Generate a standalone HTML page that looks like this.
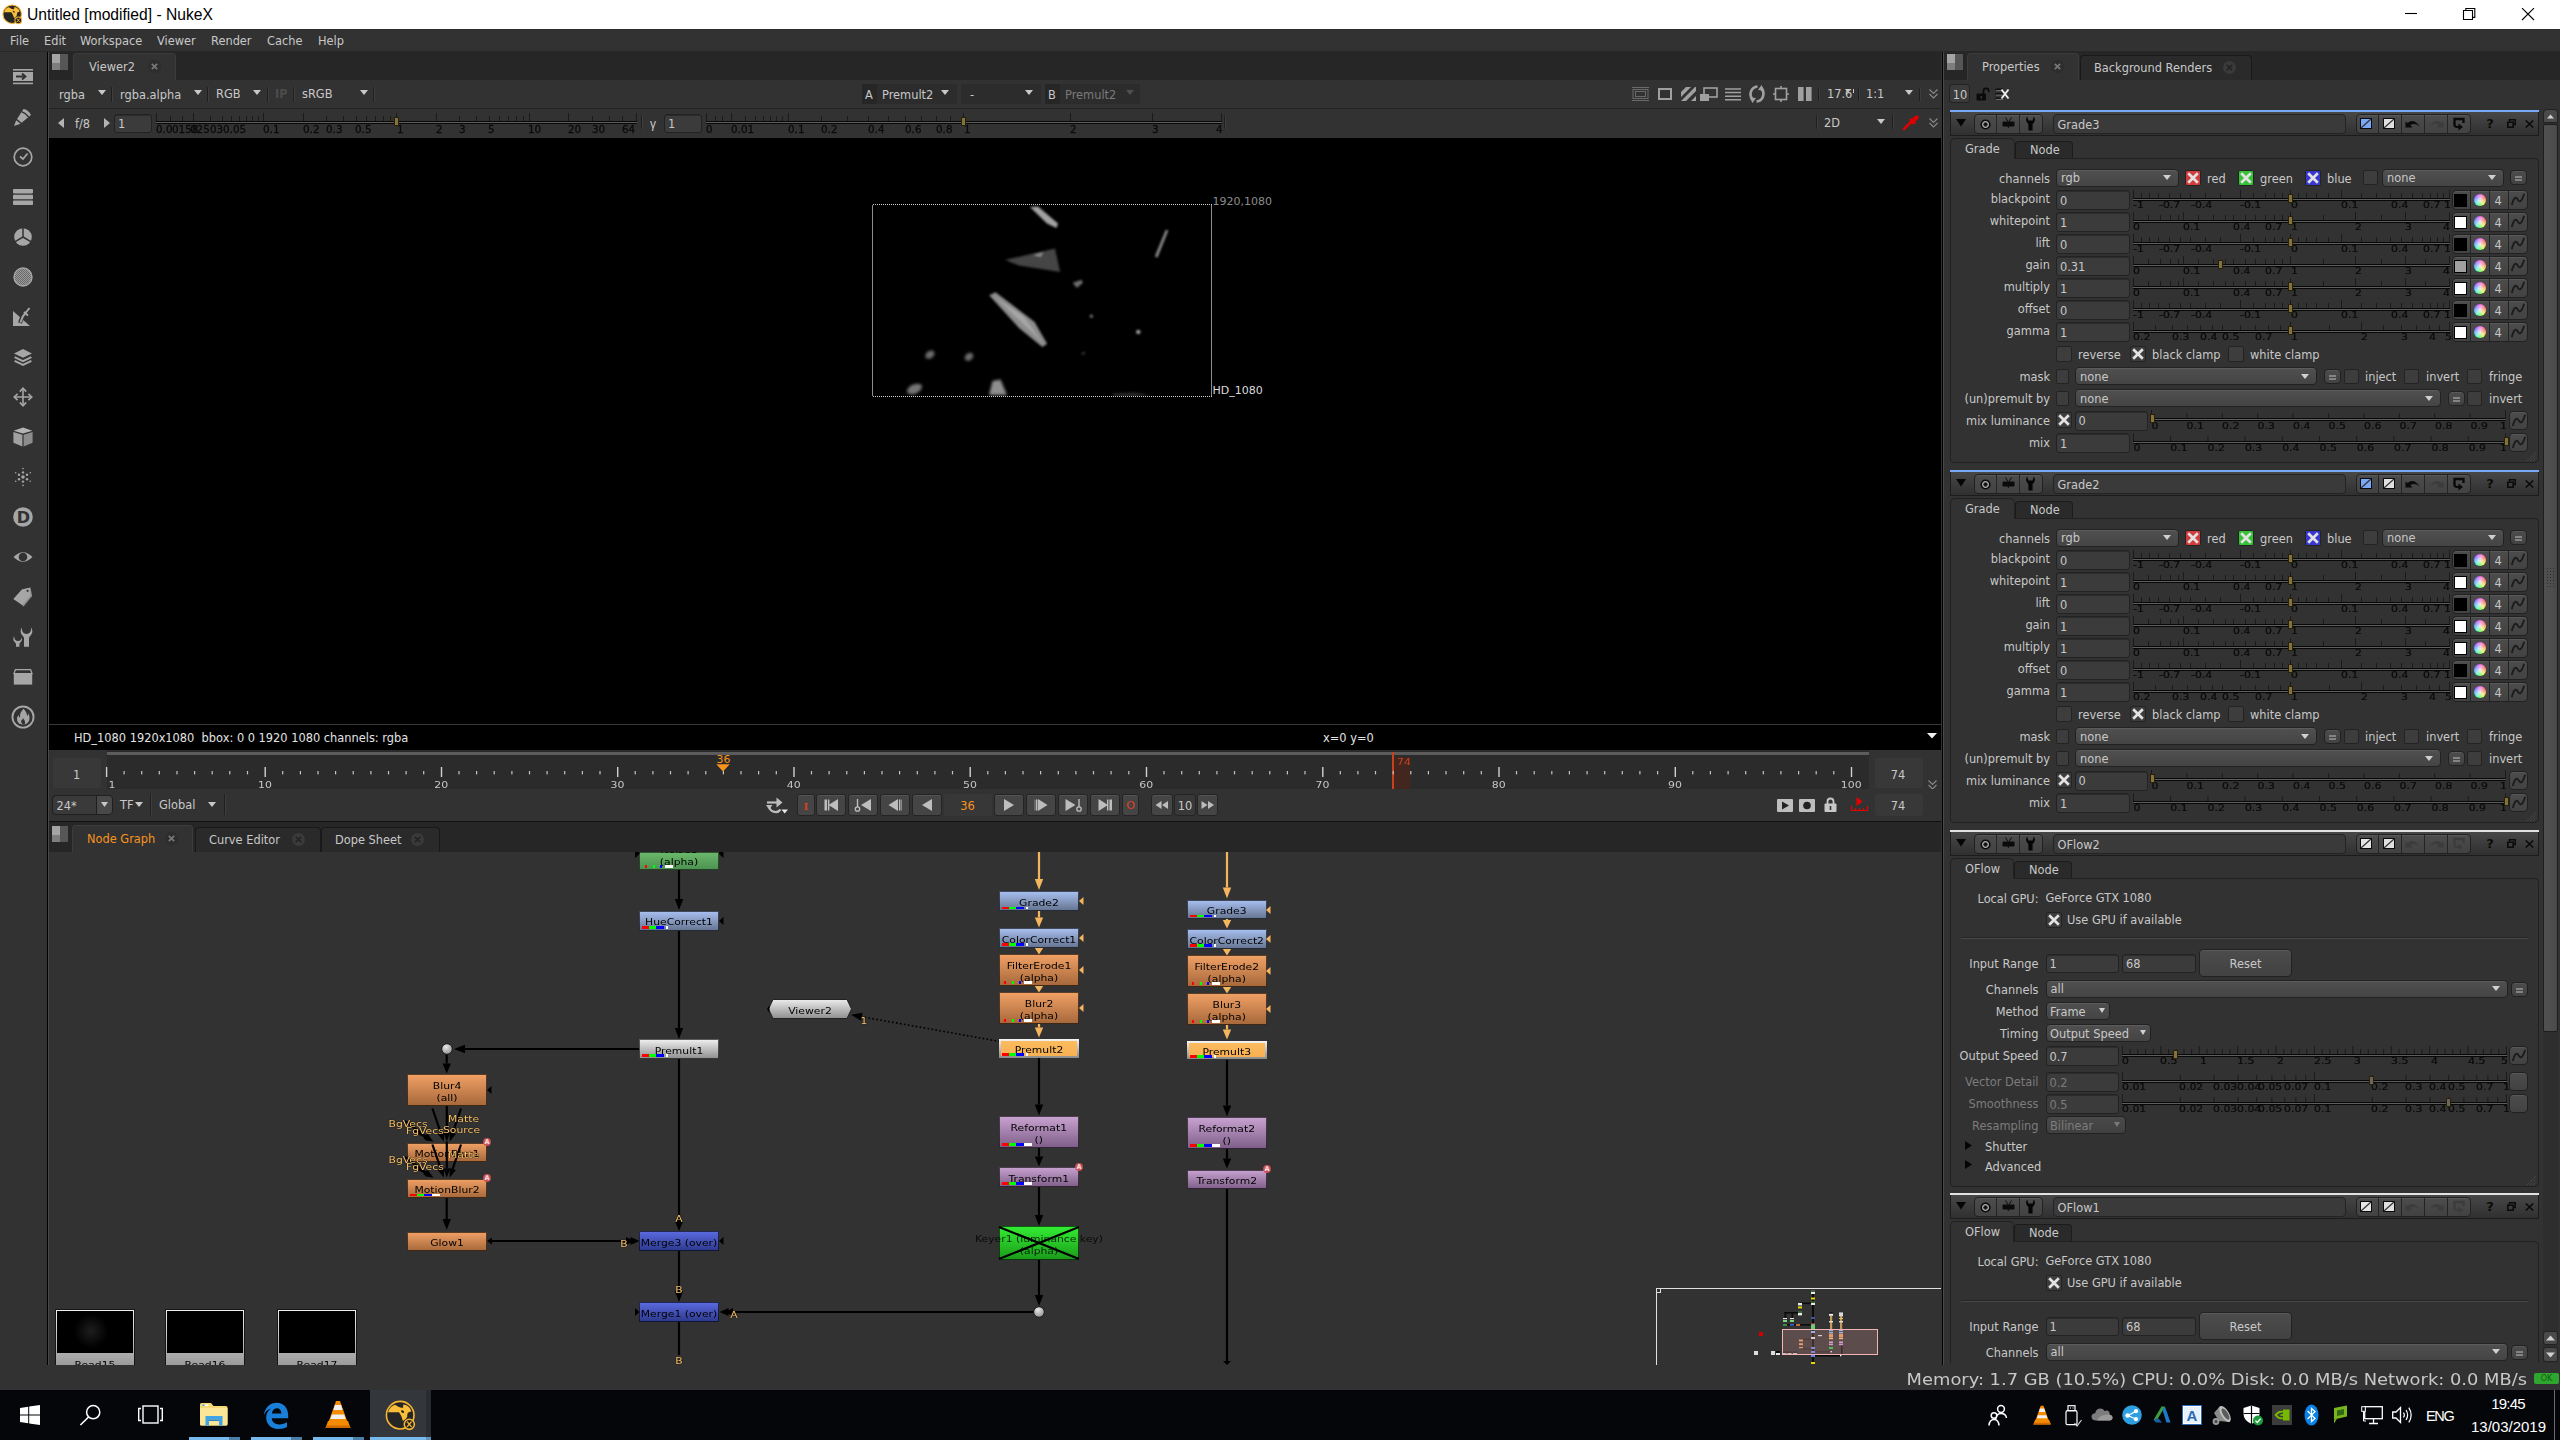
<!DOCTYPE html>
<html><head><meta charset="utf-8"><title>Untitled [modified] - NukeX</title>
<style>
html,body{margin:0;padding:0;background:#323232;}
body{width:2560px;height:1440px;position:relative;overflow:hidden;font-family:"DejaVu Sans","Liberation Sans",sans-serif;font-size:11.4px;color:#c8c8c8;}
div,svg,span.a{position:absolute;box-sizing:border-box;}
svg{overflow:visible;}
svg text{font-family:"DejaVu Sans","Liberation Sans",sans-serif;}
</style></head><body>
<div style="left:0px;top:0px;width:2560px;height:29px;background:#ffffff;"></div>
<svg style="left:2px;top:4px;" width="20.4" height="20.4" viewBox="0 0 30 30"><circle cx="15" cy="15" r="13.6" fill="#262626" stroke="#f7b733" stroke-width="1.6"/>
<path d="M3 12 C4 8.5 6.4 5.8 9.6 4.7 C11 4.8 12.5 6.8 16 7.7 L17.8 7.7 L18.2 4.4 C22 4.8 25 7.4 26 11.2 L22.5 12.5 L21.9 15 C22.5 17.5 20 19 17.6 20.8 C17 17 15 13.5 13.75 12 Z" fill="#fbbe38"/>
<ellipse cx="17.4" cy="11.4" rx="1.7" ry="1.1" fill="#262626" transform="rotate(40 17.4 11.4)"/>
<circle cx="24" cy="24" r="5" fill="#262626" stroke="#f7b733" stroke-width="1.5"/>
<path d="M21.8 21.4 L26.2 26.6 M26.2 21.4 L21.8 26.6" stroke="#f7b733" stroke-width="1.3"/></svg>
<div style="top:4.5px;line-height:20px;height:20px;white-space:pre;color:#000;font-size:15.63px;left:27px;font-family:'Liberation Sans',sans-serif;">Untitled [modified] - NukeX</div>
<svg style="left:2400px;top:0px;" width="160" height="29" viewBox="0 0 160 29"><path d="M5 13.5 H17" stroke="#000" stroke-width="1.1" fill="none"/>
<path d="M63.5 10.5 H72.5 V19.5 H63.5 Z" stroke="#000" stroke-width="1.1" fill="none"/><path d="M65.8 10.5 V8.5 H74.8 V17.4 H72.5" stroke="#000" stroke-width="1.1" fill="none"/>
<path d="M122 8.2 L134 20 M134 8.2 L122 20" stroke="#000" stroke-width="1.1" fill="none"/></svg>
<div style="left:0px;top:29px;width:2560px;height:23px;background:#323232;"></div>
<div style="left:0px;top:29px;width:2560px;height:1px;background:#2c2c2c;"></div>
<div style="left:0px;top:51px;width:2560px;height:1px;background:#272727;"></div>
<div style="top:33px;line-height:16px;height:16px;white-space:pre;left:10px;">File</div>
<div style="top:33px;line-height:16px;height:16px;white-space:pre;left:44px;">Edit</div>
<div style="top:33px;line-height:16px;height:16px;white-space:pre;left:80px;">Workspace</div>
<div style="top:33px;line-height:16px;height:16px;white-space:pre;left:157px;">Viewer</div>
<div style="top:33px;line-height:16px;height:16px;white-space:pre;left:211px;">Render</div>
<div style="top:33px;line-height:16px;height:16px;white-space:pre;left:267px;">Cache</div>
<div style="top:33px;line-height:16px;height:16px;white-space:pre;left:318px;">Help</div>
<div style="left:0px;top:52px;width:47px;height:1314px;background:#323232;"></div>
<div style="left:47px;top:52px;width:1px;height:1313px;background:#000;"></div>
<div style="left:48px;top:52px;width:1px;height:1313px;background:#484848;"></div>
<svg style="left:13.0px;top:67.0px;" width="20" height="20" viewBox="0 0 20 20"><rect x="0" y="2" width="20" height="1.6" fill="#a6a6a6"/><rect x="0" y="5" width="20" height="9" fill="#a6a6a6"/><rect x="0" y="15.6" width="20" height="1.6" fill="#a6a6a6"/><path d="M3 9.5 H12 M9 6.5 L12.5 9.5 L9 12.5" stroke="#323232" stroke-width="1.8" fill="none"/></svg>
<svg style="left:13.0px;top:107.0px;" width="20" height="20" viewBox="0 0 20 20"><path d="M1 19 L3.2 13.2 L7.6 16.8 Z" fill="#a6a6a6"/><path d="M4 12 L10.5 2 Q15 2.5 18 8 L8.6 15.8 Z" fill="#a6a6a6"/><path d="M8.6 4.6 Q12.8 6 15.6 10" stroke="#323232" stroke-width="1.4" fill="none"/></svg>
<svg style="left:13.0px;top:147.0px;" width="20" height="20" viewBox="0 0 20 20"><circle cx="10" cy="10" r="8.8" fill="none" stroke="#a6a6a6" stroke-width="1.7"/><path d="M7 9.5 L10 12 L14.5 6.5" stroke="#a6a6a6" stroke-width="1.7" fill="none"/></svg>
<svg style="left:13.0px;top:187.0px;" width="20" height="20" viewBox="0 0 20 20"><rect x="0" y="2" width="20" height="4.4" rx="0.8" fill="#a6a6a6"/><rect x="0" y="7.8" width="20" height="4.4" rx="0.8" fill="#a6a6a6"/><rect x="0" y="13.6" width="20" height="4.4" rx="0.8" fill="#a6a6a6"/></svg>
<svg style="left:13.0px;top:227.0px;" width="20" height="20" viewBox="0 0 20 20"><circle cx="10" cy="10" r="8.8" fill="#a6a6a6"/><path d="M10 1 V10 L2.2 14.6 M10 10 L17.8 14.6" stroke="#323232" stroke-width="1.5" fill="none"/></svg>
<svg style="left:13.0px;top:267.0px;" width="20" height="20" viewBox="0 0 20 20"><defs><pattern id="hp" width="2" height="2" patternUnits="userSpaceOnUse"><rect width="2" height="2" fill="#9a9a9a"/><rect width="1" height="1" fill="#6a6a6a"/><rect x="1" y="1" width="1" height="1" fill="#6a6a6a"/></pattern></defs><circle cx="10" cy="10" r="9" fill="url(#hp)" stroke="#a6a6a6" stroke-width="1.4"/></svg>
<svg style="left:13.0px;top:307.0px;" width="20" height="20" viewBox="0 0 20 20"><path d="M0 4 V19 H17 Z" fill="#a6a6a6"/><path d="M7 16 L9.5 9 L13 5" stroke="#323232" stroke-width="4" fill="none"/><path d="M7.5 15.5 L9.8 9.6 L12 6.6 M10.5 8.5 L16.5 1 M11 5 L15 8.5" stroke="#a6a6a6" stroke-width="2" fill="none"/></svg>
<svg style="left:13.0px;top:347.0px;" width="20" height="20" viewBox="0 0 20 20"><path d="M10 2 L19 6.4 L10 10.8 L1 6.4 Z" fill="#a6a6a6"/><path d="M1.6 10.2 L10 14.2 L18.4 10.2 M1.6 13.8 L10 17.8 L18.4 13.8" stroke="#a6a6a6" stroke-width="2" fill="none"/></svg>
<svg style="left:13.0px;top:387.0px;" width="20" height="20" viewBox="0 0 20 20"><path d="M10 1.5 V18.5 M1.5 10 H18.5" stroke="#a6a6a6" stroke-width="1.6"/><path d="M6.8 4.6 L10 1.2 L13.2 4.6 M6.8 15.4 L10 18.8 L13.2 15.4 M4.6 6.8 L1.2 10 L4.6 13.2 M15.4 6.8 L18.8 10 L15.4 13.2" stroke="#a6a6a6" stroke-width="1.6" fill="none"/></svg>
<svg style="left:13.0px;top:427.0px;" width="20" height="20" viewBox="0 0 20 20"><path d="M10 0.6 L19.4 3.8 L10 6.6 L0.6 3.8 Z" fill="#b4b4b4"/><path d="M0.4 5 L9.4 7.8 V19.6 L0.4 15.8 Z" fill="#a0a0a0"/><path d="M19.6 5 L10.6 7.8 V19.6 L19.6 15.8 Z" fill="#8c8c8c"/></svg>
<svg style="left:13.0px;top:467.0px;" width="20" height="20" viewBox="0 0 20 20"><g fill="#a6a6a6"><circle cx="10" cy="10" r="1.8"/><circle cx="10" cy="5.4" r="1.2"/><circle cx="10" cy="14.6" r="1.2"/><circle cx="6" cy="7.7" r="1.2"/><circle cx="14" cy="7.7" r="1.2"/><circle cx="6" cy="12.3" r="1.2"/><circle cx="14" cy="12.3" r="1.2"/><circle cx="10" cy="1.6" r="0.8"/><circle cx="10" cy="18.4" r="0.8"/><circle cx="2.7" cy="5.8" r="0.8"/><circle cx="17.3" cy="5.8" r="0.8"/><circle cx="2.7" cy="14.2" r="0.8"/><circle cx="17.3" cy="14.2" r="0.8"/></g></svg>
<svg style="left:13.0px;top:507.0px;" width="20" height="20" viewBox="0 0 20 20"><circle cx="10" cy="10" r="9.8" fill="#a6a6a6"/><text x="10.3" y="15.8" font-size="16" font-weight="bold" text-anchor="middle" fill="#323232">D</text></svg>
<svg style="left:13.0px;top:547.0px;" width="20" height="20" viewBox="0 0 20 20"><path d="M0.5 10 Q10 0.5 19.5 10 Q10 19.5 0.5 10 Z" fill="#a6a6a6"/><circle cx="10" cy="10" r="4.3" fill="#323232"/></svg>
<svg style="left:13.0px;top:587.0px;" width="20" height="20" viewBox="0 0 20 20"><path d="M0.5 12 L9 2.5 L17.5 0.6 L19.2 9 L10.6 19.4 L7.2 16.4 Z" fill="#8e8e8e"/><path d="M0.5 12 L9 2.5 L16.8 0.8 L17.6 8.6 L9.4 18 Z" fill="#a6a6a6"/><circle cx="14.6" cy="3.8" r="1.1" fill="#323232"/></svg>
<svg style="left:13.0px;top:627.0px;" width="20" height="20" viewBox="0 0 20 20"><path d="M9 0.3 Q6.2 4.5 9 8 Q10.6 9.6 11 11 V19.8 H16 V11 Q16.4 9.6 18 8 Q20.8 4.5 18 0.3 Q18.6 4.5 16 6.2 Q13.5 7.6 11 6.2 Q8.4 4.5 9 0.3 Z" fill="#a6a6a6"/><path d="M1.2 9.2 Q-0.8 12.5 1.6 15 Q2.8 16 3 17 V19.8 H6.4 V17 Q6.6 16 7.8 15 Q9.6 13 9 10.5 Q8.2 13 6.4 13.8 Q4.6 14.4 3 13.6 Q1 12.4 1.2 9.2 Z" fill="#a6a6a6"/></svg>
<svg style="left:13.0px;top:667.0px;" width="20" height="20" viewBox="0 0 20 20"><path d="M2.4 2.6 H17.6 L19 6.6 H1 Z" fill="none" stroke="#a6a6a6" stroke-width="1.3"/><rect x="0.8" y="7" width="18.4" height="10.6" fill="#a6a6a6"/></svg>
<svg style="left:12.0px;top:706.0px;" width="22" height="22" viewBox="0 0 20 20"><circle cx="10" cy="10" r="9.6" fill="none" stroke="#a6a6a6" stroke-width="1.7"/><path d="M10.6 2.6 Q13.8 6.4 13.6 9 Q15 8.2 14.8 6.6 Q17 10.6 15.2 14 Q13.6 16.8 10 16.8 Q6.2 16.8 4.8 13.6 Q3.8 10.8 6 8 Q6 10 7.2 10.8 Q6.8 6 10.6 2.6 Z" fill="#a6a6a6"/><path d="M10 16.8 Q7.6 15.4 8.6 12.6 Q9.6 13.6 9.8 11 Q12.6 13.6 11.6 16.8 Z" fill="#323232"/></svg>
<div style="left:49px;top:52px;width:1892px;height:28px;background:#262626;"></div>
<div style="left:52px;top:54px;width:8px;height:9px;background:#a4a4a4;"></div>
<div style="left:52px;top:63px;width:8px;height:7px;background:#7e7e7e;"></div>
<div style="left:60px;top:54px;width:8px;height:16px;background:#565656;"></div>
<div style="left:73px;top:53px;width:103px;height:28px;background:#323232;border:1px solid #3c3c3c;border-bottom:none;border-radius:4px 4px 0 0;"></div>
<div style="top:59px;line-height:16px;height:16px;white-space:pre;left:89px;">Viewer2</div>
<div style="left:147.5px;top:59.5px;width:13px;height:13px;background:#2d2d2d;border-radius:50%;"></div>
<svg style="left:150.5px;top:62.5px;" width="7" height="7" viewBox="0 0 7 7"><path d="M0.8 0.8 L6.2 6.2 M6.2 0.8 L0.8 6.2" stroke="#787878" stroke-width="1.7"/></svg>
<div style="left:49px;top:80px;width:1892px;height:28px;background:#323232;"></div>
<div style="top:87px;line-height:16px;height:16px;white-space:pre;left:59px;">rgba</div>
<svg style="left:98px;top:89.5px;" width="8" height="5" viewBox="0 0 8 5"><path d="M0 0 H8 L4.0 5 Z" fill="#c8c8c8"/></svg>
<div style="left:111px;top:87px;width:1px;height:15px;background:#1f1f1f;"></div>
<div style="left:112px;top:87px;width:1px;height:15px;background:#3e3e3e;"></div>
<div style="top:87px;line-height:16px;height:16px;white-space:pre;left:120px;">rgba.alpha</div>
<svg style="left:194px;top:89.5px;" width="8" height="5" viewBox="0 0 8 5"><path d="M0 0 H8 L4.0 5 Z" fill="#c8c8c8"/></svg>
<div style="left:207px;top:87px;width:1px;height:15px;background:#1f1f1f;"></div>
<div style="left:208px;top:87px;width:1px;height:15px;background:#3e3e3e;"></div>
<div style="top:86px;line-height:16px;height:16px;white-space:pre;left:216px;">RGB</div>
<svg style="left:253px;top:89.5px;" width="8" height="5" viewBox="0 0 8 5"><path d="M0 0 H8 L4.0 5 Z" fill="#c8c8c8"/></svg>
<div style="left:267px;top:87px;width:1px;height:15px;background:#1f1f1f;"></div>
<div style="left:268px;top:87px;width:1px;height:15px;background:#3e3e3e;"></div>
<div style="top:86px;line-height:16px;height:16px;white-space:pre;color:#4c4c4c;left:275px;font-weight:bold;">IP</div>
<div style="left:293px;top:87px;width:1px;height:15px;background:#1f1f1f;"></div>
<div style="left:294px;top:87px;width:1px;height:15px;background:#3e3e3e;"></div>
<div style="top:86px;line-height:16px;height:16px;white-space:pre;left:302px;">sRGB</div>
<svg style="left:360px;top:89.5px;" width="8" height="5" viewBox="0 0 8 5"><path d="M0 0 H8 L4.0 5 Z" fill="#c8c8c8"/></svg>
<div style="left:373px;top:87px;width:1px;height:15px;background:#1f1f1f;"></div>
<div style="left:374px;top:87px;width:1px;height:15px;background:#3e3e3e;"></div>
<div style="left:862px;top:84px;width:95px;height:20px;background:#2c2c2c;"></div>
<div style="left:862px;top:84px;width:15px;height:20px;background:#262626;"></div>
<div style="top:87px;line-height:16px;height:16px;white-space:pre;left:865px;">A</div>
<div style="top:87px;line-height:16px;height:16px;white-space:pre;left:882px;">Premult2</div>
<svg style="left:941px;top:89.5px;" width="8" height="5" viewBox="0 0 8 5"><path d="M0 0 H8 L4.0 5 Z" fill="#c8c8c8"/></svg>
<div style="left:961px;top:84px;width:80px;height:20px;background:#2c2c2c;"></div>
<div style="top:87px;line-height:16px;height:16px;white-space:pre;left:970px;">-</div>
<svg style="left:1025px;top:89.5px;" width="8" height="5" viewBox="0 0 8 5"><path d="M0 0 H8 L4.0 5 Z" fill="#c8c8c8"/></svg>
<div style="left:1045px;top:84px;width:95px;height:20px;background:#2c2c2c;"></div>
<div style="left:1045px;top:84px;width:15px;height:20px;background:#262626;"></div>
<div style="top:87px;line-height:16px;height:16px;white-space:pre;left:1048px;">B</div>
<div style="top:87px;line-height:16px;height:16px;white-space:pre;color:#7a7a7a;left:1065px;">Premult2</div>
<svg style="left:1126px;top:89.5px;" width="8" height="5" viewBox="0 0 8 5"><path d="M0 0 H8 L4.0 5 Z" fill="#505050"/></svg>
<svg style="left:1632px;top:87px;" width="17" height="14" viewBox="0 0 17 14"><path d="M0 0.5 H17 M0 13.5 H17" stroke="#6a6a6a" stroke-width="1"/><rect x="1" y="2.5" width="15" height="9" fill="none" stroke="#6a6a6a" stroke-width="1"/><rect x="3.5" y="4.5" width="10" height="5" fill="none" stroke="#6a6a6a" stroke-width="1"/></svg>
<svg style="left:1658px;top:88px;" width="14" height="12" viewBox="0 0 14 12"><rect x="1" y="1" width="12" height="10" fill="none" stroke="#a0a0a0" stroke-width="2"/></svg>
<svg style="left:1681px;top:87px;" width="15" height="14" viewBox="0 0 15 14"><path d="M0 5 L5 0 H10 L0 10 Z M0 14 L14 0 H15 V4 L5 14 Z M10 14 L15 9 V14 Z" fill="#a0a0a0"/></svg>
<svg style="left:1700px;top:87px;" width="18" height="14" viewBox="0 0 18 14"><rect x="4" y="1" width="13" height="9" fill="none" stroke="#a0a0a0" stroke-width="1.6"/><rect x="0" y="7" width="9" height="7" fill="#a0a0a0"/></svg>
<svg style="left:1725px;top:88px;" width="16" height="13" viewBox="0 0 16 13"><path d="M0 1 H16 M0 4.6 H16 M0 8.2 H16 M0 11.8 H16" stroke="#a0a0a0" stroke-width="1.5"/></svg>
<svg style="left:1748px;top:85px;" width="18" height="18" viewBox="0 0 18 18"><path d="M9.5 1.5 A7.5 7.5 0 0 0 5 14.5" stroke="#a0a0a0" stroke-width="2.6" fill="none"/><path d="M8.5 16.5 A7.5 7.5 0 0 0 13 3.5" stroke="#a0a0a0" stroke-width="2.6" fill="none"/><path d="M1.5 12.5 L8 13 L4.5 18 Z M16.5 5.5 L10 5 L13.5 0 Z" fill="#a0a0a0"/></svg>
<svg style="left:1773px;top:86px;" width="16" height="16" viewBox="0 0 16 16"><rect x="2.5" y="2.5" width="11" height="11" fill="none" stroke="#a0a0a0" stroke-width="1.6"/><path d="M8 0 V3 M8 13 V16 M0 8 H3 M13 8 H16" stroke="#a0a0a0" stroke-width="1.6"/></svg>
<svg style="left:1798px;top:87px;" width="14" height="14" viewBox="0 0 14 14"><rect x="0" y="0" width="5.6" height="14" fill="#a0a0a0"/><rect x="8" y="0" width="5.6" height="14" fill="#a0a0a0"/></svg>
<div style="left:1818px;top:88px;width:1px;height:13px;background:#1f1f1f;"></div>
<div style="left:1819px;top:88px;width:1px;height:13px;background:#3e3e3e;"></div>
<div style="top:86px;line-height:16px;height:16px;white-space:pre;left:1827px;">17.6</div>
<svg style="left:1843px;top:89px;" width="12" height="8" viewBox="0 0 12 8"><path d="M2 0 H8 L5 3.6 Z" fill="#c8c8c8"/><path d="M10.5 0 V4" stroke="#c8c8c8" stroke-width="1"/></svg>
<div style="left:1858px;top:88px;width:1px;height:13px;background:#1f1f1f;"></div>
<div style="left:1859px;top:88px;width:1px;height:13px;background:#3e3e3e;"></div>
<div style="top:86px;line-height:16px;height:16px;white-space:pre;left:1866px;">1:1</div>
<svg style="left:1905px;top:89.5px;" width="8" height="5" viewBox="0 0 8 5"><path d="M0 0 H8 L4.0 5 Z" fill="#c8c8c8"/></svg>
<div style="left:1919px;top:88px;width:1px;height:13px;background:#1f1f1f;"></div>
<div style="left:1920px;top:88px;width:1px;height:13px;background:#3e3e3e;"></div>
<svg style="left:1929px;top:89px;" width="9" height="10" viewBox="0 0 9 10"><path d="M0.5 0.5 L4.5 4.5 L8.5 0.5 M0.5 5 L4.5 9 L8.5 5" stroke="#8a8a8a" stroke-width="1.1" fill="none"/></svg>
<div style="left:49px;top:108px;width:1892px;height:1px;background:#222222;"></div>
<div style="left:49px;top:109px;width:1892px;height:29px;background:#323232;"></div>
<svg style="left:58px;top:118px;" width="6" height="10" viewBox="0 0 6 10"><path d="M6 0 V10 L0 5 Z" fill="#b4b4b4"/></svg>
<div style="top:116px;line-height:16px;height:16px;white-space:pre;left:75px;">f/8</div>
<svg style="left:104px;top:118px;" width="6" height="10" viewBox="0 0 6 10"><path d="M0 0 V10 L6 5 Z" fill="#b4b4b4"/></svg>
<div style="left:114px;top:114px;width:38px;height:19px;background:#3b3b3b;border:1px solid #222;border-radius:3px;box-shadow:inset 0 1px 0 #2c2c2c;"></div>
<div style="top:116px;line-height:16px;height:16px;white-space:pre;left:118px;">1</div>
<svg style="left:156px;top:111px;" width="481" height="13" viewBox="0 0 481 13"><path d="M0.5 2 V10" stroke="#1b1b1b" stroke-width="1"/><path d="M14.5 5 V10" stroke="#1b1b1b" stroke-width="1"/><path d="M26.5 5 V10" stroke="#1b1b1b" stroke-width="1"/><path d="M37.5 2 V10" stroke="#1b1b1b" stroke-width="1"/><path d="M54.5 5 V10" stroke="#1b1b1b" stroke-width="1"/><path d="M66.5 5 V10" stroke="#1b1b1b" stroke-width="1"/><path d="M75.5 5 V10" stroke="#1b1b1b" stroke-width="1"/><path d="M83.5 5 V10" stroke="#1b1b1b" stroke-width="1"/><path d="M90.5 5 V10" stroke="#1b1b1b" stroke-width="1"/><path d="M96.5 5 V10" stroke="#1b1b1b" stroke-width="1"/><path d="M102.5 5 V10" stroke="#1b1b1b" stroke-width="1"/><path d="M107.5 2 V10" stroke="#1b1b1b" stroke-width="1"/><path d="M147.5 2 V10" stroke="#1b1b1b" stroke-width="1"/><path d="M170.5 5 V10" stroke="#1b1b1b" stroke-width="1"/><path d="M187.5 5 V10" stroke="#1b1b1b" stroke-width="1"/><path d="M200.5 5 V10" stroke="#1b1b1b" stroke-width="1"/><path d="M210.5 5 V10" stroke="#1b1b1b" stroke-width="1"/><path d="M219.5 5 V10" stroke="#1b1b1b" stroke-width="1"/><path d="M227.5 5 V10" stroke="#1b1b1b" stroke-width="1"/><path d="M234.5 5 V10" stroke="#1b1b1b" stroke-width="1"/><path d="M240.5 2 V10" stroke="#1b1b1b" stroke-width="1"/><path d="M280.5 2 V10" stroke="#1b1b1b" stroke-width="1"/><path d="M303.5 5 V10" stroke="#1b1b1b" stroke-width="1"/><path d="M320.5 5 V10" stroke="#1b1b1b" stroke-width="1"/><path d="M333.5 5 V10" stroke="#1b1b1b" stroke-width="1"/><path d="M343.5 5 V10" stroke="#1b1b1b" stroke-width="1"/><path d="M352.5 5 V10" stroke="#1b1b1b" stroke-width="1"/><path d="M360.5 5 V10" stroke="#1b1b1b" stroke-width="1"/><path d="M367.5 5 V10" stroke="#1b1b1b" stroke-width="1"/><path d="M373.5 2 V10" stroke="#1b1b1b" stroke-width="1"/><path d="M412.5 2 V10" stroke="#1b1b1b" stroke-width="1"/><path d="M436.5 5 V10" stroke="#1b1b1b" stroke-width="1"/><path d="M453.5 5 V10" stroke="#1b1b1b" stroke-width="1"/><path d="M466.5 5 V10" stroke="#1b1b1b" stroke-width="1"/><path d="M480.5 2 V10" stroke="#1b1b1b" stroke-width="1"/><rect x="0" y="10" width="481" height="1" fill="#080808"/><rect x="0" y="11" width="481" height="1" fill="#5e5e5e"/><rect x="0" y="12" width="481" height="1" fill="#080808"/></svg>
<div style="top:122.5px;line-height:12px;height:12px;white-space:pre;color:#0b0b0b;font-size:10.4px;left:156px;transform:scaleY(0.93);-webkit-text-stroke:0.3px #0b0b0b;">0.0</div>
<div style="top:122.5px;line-height:12px;height:12px;white-space:pre;color:#0b0b0b;font-size:10.4px;left:172px;transform:scaleY(0.93);-webkit-text-stroke:0.3px #0b0b0b;">0158</div>
<div style="top:122.5px;line-height:12px;height:12px;white-space:pre;color:#0b0b0b;font-size:10.4px;left:190px;transform:scaleY(0.93);-webkit-text-stroke:0.3px #0b0b0b;">025</div>
<div style="top:122.5px;line-height:12px;height:12px;white-space:pre;color:#0b0b0b;font-size:10.4px;left:210px;transform:scaleY(0.93);-webkit-text-stroke:0.3px #0b0b0b;">03</div>
<div style="top:122.5px;line-height:12px;height:12px;white-space:pre;color:#0b0b0b;font-size:10.4px;left:223px;transform:scaleY(0.93);-webkit-text-stroke:0.3px #0b0b0b;">0.05</div>
<div style="top:122.5px;line-height:12px;height:12px;white-space:pre;color:#0b0b0b;font-size:10.4px;left:263px;transform:scaleY(0.93);-webkit-text-stroke:0.3px #0b0b0b;">0.1</div>
<div style="top:122.5px;line-height:12px;height:12px;white-space:pre;color:#0b0b0b;font-size:10.4px;left:303px;transform:scaleY(0.93);-webkit-text-stroke:0.3px #0b0b0b;">0.2</div>
<div style="top:122.5px;line-height:12px;height:12px;white-space:pre;color:#0b0b0b;font-size:10.4px;left:326px;transform:scaleY(0.93);-webkit-text-stroke:0.3px #0b0b0b;">0.3</div>
<div style="top:122.5px;line-height:12px;height:12px;white-space:pre;color:#0b0b0b;font-size:10.4px;left:355px;transform:scaleY(0.93);-webkit-text-stroke:0.3px #0b0b0b;">0.5</div>
<div style="top:122.5px;line-height:12px;height:12px;white-space:pre;color:#0b0b0b;font-size:10.4px;left:397px;transform:scaleY(0.93);-webkit-text-stroke:0.3px #0b0b0b;">1</div>
<div style="top:122.5px;line-height:12px;height:12px;white-space:pre;color:#0b0b0b;font-size:10.4px;left:436px;transform:scaleY(0.93);-webkit-text-stroke:0.3px #0b0b0b;">2</div>
<div style="top:122.5px;line-height:12px;height:12px;white-space:pre;color:#0b0b0b;font-size:10.4px;left:459px;transform:scaleY(0.93);-webkit-text-stroke:0.3px #0b0b0b;">3</div>
<div style="top:122.5px;line-height:12px;height:12px;white-space:pre;color:#0b0b0b;font-size:10.4px;left:488px;transform:scaleY(0.93);-webkit-text-stroke:0.3px #0b0b0b;">5</div>
<div style="top:122.5px;line-height:12px;height:12px;white-space:pre;color:#0b0b0b;font-size:10.4px;left:528px;transform:scaleY(0.93);-webkit-text-stroke:0.3px #0b0b0b;">10</div>
<div style="top:122.5px;line-height:12px;height:12px;white-space:pre;color:#0b0b0b;font-size:10.4px;left:568px;transform:scaleY(0.93);-webkit-text-stroke:0.3px #0b0b0b;">20</div>
<div style="top:122.5px;line-height:12px;height:12px;white-space:pre;color:#0b0b0b;font-size:10.4px;left:592px;transform:scaleY(0.93);-webkit-text-stroke:0.3px #0b0b0b;">30</div>
<div style="top:122.5px;line-height:12px;height:12px;white-space:pre;color:#0b0b0b;font-size:10.4px;left:622px;transform:scaleY(0.93);-webkit-text-stroke:0.3px #0b0b0b;">64</div>
<div style="left:394px;top:116.5px;width:5px;height:9px;background:#85723a;border:1px solid #26200c;"></div>
<div style="left:641px;top:115px;width:1px;height:14px;background:#1f1f1f;"></div>
<div style="left:642px;top:115px;width:1px;height:14px;background:#3e3e3e;"></div>
<div style="top:116px;line-height:16px;height:16px;white-space:pre;left:650px;font-family:'Liberation Sans',sans-serif;font-size:12px;">γ</div>
<div style="left:664px;top:114px;width:38px;height:19px;background:#3b3b3b;border:1px solid #222;border-radius:3px;box-shadow:inset 0 1px 0 #2c2c2c;"></div>
<div style="top:116px;line-height:16px;height:16px;white-space:pre;left:668px;">1</div>
<svg style="left:706px;top:111px;" width="516" height="13" viewBox="0 0 516 13"><path d="M0.5 2 V10" stroke="#1b1b1b" stroke-width="1"/><path d="M9.5 5 V10" stroke="#1b1b1b" stroke-width="1"/><path d="M16.5 5 V10" stroke="#1b1b1b" stroke-width="1"/><path d="M25.5 2 V10" stroke="#1b1b1b" stroke-width="1"/><path d="M39.5 5 V10" stroke="#1b1b1b" stroke-width="1"/><path d="M49.5 5 V10" stroke="#1b1b1b" stroke-width="1"/><path d="M57.5 5 V10" stroke="#1b1b1b" stroke-width="1"/><path d="M64.5 5 V10" stroke="#1b1b1b" stroke-width="1"/><path d="M70.5 5 V10" stroke="#1b1b1b" stroke-width="1"/><path d="M76.5 5 V10" stroke="#1b1b1b" stroke-width="1"/><path d="M82.5 2 V10" stroke="#1b1b1b" stroke-width="1"/><path d="M115.5 5 V10" stroke="#1b1b1b" stroke-width="1"/><path d="M141.5 5 V10" stroke="#1b1b1b" stroke-width="1"/><path d="M162.5 5 V10" stroke="#1b1b1b" stroke-width="1"/><path d="M182.5 5 V10" stroke="#1b1b1b" stroke-width="1"/><path d="M199.5 5 V10" stroke="#1b1b1b" stroke-width="1"/><path d="M215.5 5 V10" stroke="#1b1b1b" stroke-width="1"/><path d="M230.5 5 V10" stroke="#1b1b1b" stroke-width="1"/><path d="M244.5 5 V10" stroke="#1b1b1b" stroke-width="1"/><path d="M257.5 2 V10" stroke="#1b1b1b" stroke-width="1"/><path d="M364.5 2 V10" stroke="#1b1b1b" stroke-width="1"/><path d="M446.5 2 V10" stroke="#1b1b1b" stroke-width="1"/><path d="M515.5 2 V10" stroke="#1b1b1b" stroke-width="1"/><rect x="0" y="10" width="516" height="1" fill="#080808"/><rect x="0" y="11" width="516" height="1" fill="#5e5e5e"/><rect x="0" y="12" width="516" height="1" fill="#080808"/></svg>
<div style="top:122.5px;line-height:12px;height:12px;white-space:pre;color:#0b0b0b;font-size:10.4px;left:706px;transform:scaleY(0.93);-webkit-text-stroke:0.3px #0b0b0b;">0</div>
<div style="top:122.5px;line-height:12px;height:12px;white-space:pre;color:#0b0b0b;font-size:10.4px;left:731px;transform:scaleY(0.93);-webkit-text-stroke:0.3px #0b0b0b;">0.01</div>
<div style="top:122.5px;line-height:12px;height:12px;white-space:pre;color:#0b0b0b;font-size:10.4px;left:788px;transform:scaleY(0.93);-webkit-text-stroke:0.3px #0b0b0b;">0.1</div>
<div style="top:122.5px;line-height:12px;height:12px;white-space:pre;color:#0b0b0b;font-size:10.4px;left:821px;transform:scaleY(0.93);-webkit-text-stroke:0.3px #0b0b0b;">0.2</div>
<div style="top:122.5px;line-height:12px;height:12px;white-space:pre;color:#0b0b0b;font-size:10.4px;left:868px;transform:scaleY(0.93);-webkit-text-stroke:0.3px #0b0b0b;">0.4</div>
<div style="top:122.5px;line-height:12px;height:12px;white-space:pre;color:#0b0b0b;font-size:10.4px;left:905px;transform:scaleY(0.93);-webkit-text-stroke:0.3px #0b0b0b;">0.6</div>
<div style="top:122.5px;line-height:12px;height:12px;white-space:pre;color:#0b0b0b;font-size:10.4px;left:936px;transform:scaleY(0.93);-webkit-text-stroke:0.3px #0b0b0b;">0.8</div>
<div style="top:122.5px;line-height:12px;height:12px;white-space:pre;color:#0b0b0b;font-size:10.4px;left:964px;transform:scaleY(0.93);-webkit-text-stroke:0.3px #0b0b0b;">1</div>
<div style="top:122.5px;line-height:12px;height:12px;white-space:pre;color:#0b0b0b;font-size:10.4px;left:1070px;transform:scaleY(0.93);-webkit-text-stroke:0.3px #0b0b0b;">2</div>
<div style="top:122.5px;line-height:12px;height:12px;white-space:pre;color:#0b0b0b;font-size:10.4px;left:1152px;transform:scaleY(0.93);-webkit-text-stroke:0.3px #0b0b0b;">3</div>
<div style="top:122.5px;line-height:12px;height:12px;white-space:pre;color:#0b0b0b;font-size:10.4px;left:1216px;transform:scaleY(0.93);-webkit-text-stroke:0.3px #0b0b0b;">4</div>
<div style="left:961px;top:116.5px;width:5px;height:9px;background:#85723a;border:1px solid #26200c;"></div>
<div style="left:1224px;top:115px;width:1px;height:14px;background:#1f1f1f;"></div>
<div style="left:1225px;top:115px;width:1px;height:14px;background:#3e3e3e;"></div>
<div style="left:1816px;top:115px;width:1px;height:14px;background:#1f1f1f;"></div>
<div style="left:1817px;top:115px;width:1px;height:14px;background:#3e3e3e;"></div>
<div style="top:115px;line-height:16px;height:16px;white-space:pre;left:1824px;">2D</div>
<svg style="left:1877px;top:118.5px;" width="8" height="5" viewBox="0 0 8 5"><path d="M0 0 H8 L4.0 5 Z" fill="#c8c8c8"/></svg>
<div style="left:1892px;top:115px;width:1px;height:14px;background:#1f1f1f;"></div>
<div style="left:1893px;top:115px;width:1px;height:14px;background:#3e3e3e;"></div>
<svg style="left:1903px;top:115px;" width="16" height="15" viewBox="0 0 16 15"><path d="M1 14 L8.5 6.5" stroke="#e00000" stroke-width="2.6" stroke-linecap="round"/><path d="M7 4 L12 9" stroke="#e00000" stroke-width="2.4"/><path d="M9.5 6.5 L13.5 2.5" stroke="#e00000" stroke-width="4.4" stroke-linecap="round"/></svg>
<svg style="left:1929px;top:118px;" width="9" height="10" viewBox="0 0 9 10"><path d="M0.5 0.5 L4.5 4.5 L8.5 0.5 M0.5 5 L4.5 9 L8.5 5" stroke="#8a8a8a" stroke-width="1.1" fill="none"/></svg>
<div style="left:49px;top:138px;width:1892px;height:612px;background:#000;"></div>
<svg style="left:873px;top:205px;overflow:hidden;" width="339" height="191" viewBox="0 0 339 191"><defs><filter id="bl" x="-20%" y="-20%" width="140%" height="140%"><feGaussianBlur stdDeviation="0.9"/></filter>
<filter id="bl2" x="-30%" y="-30%" width="160%" height="160%"><feGaussianBlur stdDeviation="1.4"/></filter></defs>
<g filter="url(#bl)">
<polygon points="157,2 165,1.5 185,18.5 183.5,23 174,18.5" fill="#a2a2a2"/>
<polygon points="292.8,24.7 295.3,25.6 284.4,52.8 281.9,51.3" fill="#8e8e8e"/>
<polygon points="132,55 182,43.5 187.2,67 146,60.6" fill="#444"/>
<polygon points="160,50 170,47 168,52" fill="#8a8a8a"/>
<polygon points="199.7,77.8 208.5,74.7 210,77.8 203.8,83.1" fill="#6c6c6c"/>
<polygon points="116.2,90.3 122.5,87.2 161.6,116.9 174.1,138.8 169.4,141.9 146,123.1" fill="#8c8c8c"/>
<polygon points="122,92 150,111 170,138 160,128" fill="#c8c8c8" opacity="0.45"/>
<circle cx="218.4" cy="111.2" r="1.6" fill="#7a7a7a"/>
<circle cx="265.3" cy="126.9" r="2.2" fill="#a0a0a0"/>
<polygon points="208,149 212,146.5 211,149.5" fill="#555"/>
</g>
<g filter="url(#bl2)">
<ellipse cx="56.9" cy="149.7" rx="5" ry="3.6" fill="#6c6c6c" transform="rotate(-35 56.9 149.7)"/>
<ellipse cx="96" cy="151.9" rx="4.5" ry="3.4" fill="#6c6c6c" transform="rotate(-35 96 151.9)"/>
<ellipse cx="41.5" cy="184" rx="8" ry="4.6" fill="#747474" transform="rotate(-25 41.5 184)"/>
<polygon points="116,190 119.5,176 127.5,174.5 134,190" fill="#8e8e8e"/>
<polygon points="240,189 262,188.6 280,190.5 240,190.5" fill="#505050"/>
</g></svg>
<div style="left:873px;top:204px;width:339px;height:1px;border-top:1px dotted #d0d0d0;"></div>
<div style="left:873px;top:396px;width:339px;height:1px;border-top:1px dotted #d0d0d0;"></div>
<div style="left:872px;top:205px;width:1px;height:191px;background:#8c8c8c;"></div>
<div style="left:1211px;top:205px;width:1px;height:191px;background:#8c8c8c;"></div>
<div style="top:194px;line-height:16px;height:16px;white-space:pre;color:#8c8c8c;font-size:11px;left:1212.5px;">1920,1080</div>
<div style="top:383px;line-height:16px;height:16px;white-space:pre;color:#dcdcdc;font-size:11px;left:1212.5px;">HD_1080</div>
<div style="left:49px;top:724px;width:1892px;height:1px;background:#383838;"></div>
<div style="top:730px;line-height:16px;height:16px;white-space:pre;color:#e4e4e4;left:74px;">HD_1080 1920x1080  bbox: 0 0 1920 1080 channels: rgba</div>
<div style="top:730px;line-height:16px;height:16px;white-space:pre;color:#e4e4e4;left:1323px;">x=0 y=0</div>
<svg style="left:1927px;top:733px;" width="10" height="6" viewBox="0 0 10 6"><path d="M0 0 H10 L5 5.5 Z" fill="#f0f0f0"/></svg>
<div style="left:49px;top:750px;width:1892px;height:40px;background:#323232;"></div>
<div style="left:107px;top:750px;width:1762px;height:39px;background:#2b2b2b;"></div>
<div style="left:107px;top:752px;width:1762px;height:3px;background:#5c5c5c;"></div>
<div style="left:53px;top:758px;width:48px;height:30px;background:#383838;border-radius:3px;"></div>
<div style="top:766.5px;line-height:16px;height:16px;white-space:pre;left:56.5px;width:40px;text-align:center;">1</div>
<div style="left:1875px;top:758px;width:48px;height:30px;background:#383838;border-radius:3px;"></div>
<div style="top:766.5px;line-height:16px;height:16px;white-space:pre;left:1878px;width:40px;text-align:center;">74</div>
<svg style="left:1928px;top:780px;" width="9" height="10" viewBox="0 0 9 10"><path d="M0.5 0.5 L4.5 4.5 L8.5 0.5 M0.5 5 L4.5 9 L8.5 5" stroke="#8a8a8a" stroke-width="1.1" fill="none"/></svg>
<div style="left:1393px;top:757px;width:17px;height:32px;background:#43271f;"></div>
<div style="left:1392px;top:752px;width:2px;height:37px;background:#c8401c;"></div>
<div style="top:755.5px;line-height:12px;height:12px;white-space:pre;color:#c8401c;font-size:10.9px;left:1397px;transform:scaleY(0.86);">74</div>
<svg style="left:107px;top:767px;" width="1762" height="10" viewBox="0 0 1762 10"><rect x="-1.1" y="0" width="1.4" height="10" fill="#d0d0d0"/><rect x="16.5" y="4" width="1.2" height="3.4" fill="#c4c4c4"/><rect x="34.1" y="4" width="1.2" height="3.4" fill="#c4c4c4"/><rect x="51.7" y="4" width="1.2" height="3.4" fill="#c4c4c4"/><rect x="69.4" y="4" width="1.2" height="3.4" fill="#c4c4c4"/><rect x="87.0" y="4" width="1.2" height="3.4" fill="#c4c4c4"/><rect x="104.6" y="4" width="1.2" height="3.4" fill="#c4c4c4"/><rect x="122.2" y="4" width="1.2" height="3.4" fill="#c4c4c4"/><rect x="139.9" y="4" width="1.2" height="3.4" fill="#c4c4c4"/><rect x="157.5" y="0" width="1.4" height="10" fill="#d0d0d0"/><rect x="175.1" y="4" width="1.2" height="3.4" fill="#c4c4c4"/><rect x="192.8" y="4" width="1.2" height="3.4" fill="#c4c4c4"/><rect x="210.4" y="4" width="1.2" height="3.4" fill="#c4c4c4"/><rect x="228.0" y="4" width="1.2" height="3.4" fill="#c4c4c4"/><rect x="245.6" y="4" width="1.2" height="3.4" fill="#c4c4c4"/><rect x="263.3" y="4" width="1.2" height="3.4" fill="#c4c4c4"/><rect x="280.9" y="4" width="1.2" height="3.4" fill="#c4c4c4"/><rect x="298.5" y="4" width="1.2" height="3.4" fill="#c4c4c4"/><rect x="316.1" y="4" width="1.2" height="3.4" fill="#c4c4c4"/><rect x="333.8" y="0" width="1.4" height="10" fill="#d0d0d0"/><rect x="351.4" y="4" width="1.2" height="3.4" fill="#c4c4c4"/><rect x="369.0" y="4" width="1.2" height="3.4" fill="#c4c4c4"/><rect x="386.6" y="4" width="1.2" height="3.4" fill="#c4c4c4"/><rect x="404.3" y="4" width="1.2" height="3.4" fill="#c4c4c4"/><rect x="421.9" y="4" width="1.2" height="3.4" fill="#c4c4c4"/><rect x="439.5" y="4" width="1.2" height="3.4" fill="#c4c4c4"/><rect x="457.1" y="4" width="1.2" height="3.4" fill="#c4c4c4"/><rect x="474.8" y="4" width="1.2" height="3.4" fill="#c4c4c4"/><rect x="492.4" y="4" width="1.2" height="3.4" fill="#c4c4c4"/><rect x="510.0" y="0" width="1.4" height="10" fill="#d0d0d0"/><rect x="527.6" y="4" width="1.2" height="3.4" fill="#c4c4c4"/><rect x="545.3" y="4" width="1.2" height="3.4" fill="#c4c4c4"/><rect x="562.9" y="4" width="1.2" height="3.4" fill="#c4c4c4"/><rect x="580.5" y="4" width="1.2" height="3.4" fill="#c4c4c4"/><rect x="598.2" y="4" width="1.2" height="3.4" fill="#c4c4c4"/><rect x="615.8" y="4" width="1.2" height="3.4" fill="#c4c4c4"/><rect x="633.4" y="4" width="1.2" height="3.4" fill="#c4c4c4"/><rect x="651.0" y="4" width="1.2" height="3.4" fill="#c4c4c4"/><rect x="668.7" y="4" width="1.2" height="3.4" fill="#c4c4c4"/><rect x="686.3" y="0" width="1.4" height="10" fill="#d0d0d0"/><rect x="703.9" y="4" width="1.2" height="3.4" fill="#c4c4c4"/><rect x="721.5" y="4" width="1.2" height="3.4" fill="#c4c4c4"/><rect x="739.2" y="4" width="1.2" height="3.4" fill="#c4c4c4"/><rect x="756.8" y="4" width="1.2" height="3.4" fill="#c4c4c4"/><rect x="774.4" y="4" width="1.2" height="3.4" fill="#c4c4c4"/><rect x="792.0" y="4" width="1.2" height="3.4" fill="#c4c4c4"/><rect x="809.7" y="4" width="1.2" height="3.4" fill="#c4c4c4"/><rect x="827.3" y="4" width="1.2" height="3.4" fill="#c4c4c4"/><rect x="844.9" y="4" width="1.2" height="3.4" fill="#c4c4c4"/><rect x="862.5" y="0" width="1.4" height="10" fill="#d0d0d0"/><rect x="880.2" y="4" width="1.2" height="3.4" fill="#c4c4c4"/><rect x="897.8" y="4" width="1.2" height="3.4" fill="#c4c4c4"/><rect x="915.4" y="4" width="1.2" height="3.4" fill="#c4c4c4"/><rect x="933.0" y="4" width="1.2" height="3.4" fill="#c4c4c4"/><rect x="950.7" y="4" width="1.2" height="3.4" fill="#c4c4c4"/><rect x="968.3" y="4" width="1.2" height="3.4" fill="#c4c4c4"/><rect x="985.9" y="4" width="1.2" height="3.4" fill="#c4c4c4"/><rect x="1003.5" y="4" width="1.2" height="3.4" fill="#c4c4c4"/><rect x="1021.2" y="4" width="1.2" height="3.4" fill="#c4c4c4"/><rect x="1038.8" y="0" width="1.4" height="10" fill="#d0d0d0"/><rect x="1056.4" y="4" width="1.2" height="3.4" fill="#c4c4c4"/><rect x="1074.1" y="4" width="1.2" height="3.4" fill="#c4c4c4"/><rect x="1091.7" y="4" width="1.2" height="3.4" fill="#c4c4c4"/><rect x="1109.3" y="4" width="1.2" height="3.4" fill="#c4c4c4"/><rect x="1126.9" y="4" width="1.2" height="3.4" fill="#c4c4c4"/><rect x="1144.6" y="4" width="1.2" height="3.4" fill="#c4c4c4"/><rect x="1162.2" y="4" width="1.2" height="3.4" fill="#c4c4c4"/><rect x="1179.8" y="4" width="1.2" height="3.4" fill="#c4c4c4"/><rect x="1197.4" y="4" width="1.2" height="3.4" fill="#c4c4c4"/><rect x="1215.1" y="0" width="1.4" height="10" fill="#d0d0d0"/><rect x="1232.7" y="4" width="1.2" height="3.4" fill="#c4c4c4"/><rect x="1250.3" y="4" width="1.2" height="3.4" fill="#c4c4c4"/><rect x="1267.9" y="4" width="1.2" height="3.4" fill="#c4c4c4"/><rect x="1285.6" y="4" width="1.2" height="3.4" fill="#c4c4c4"/><rect x="1303.2" y="4" width="1.2" height="3.4" fill="#c4c4c4"/><rect x="1320.8" y="4" width="1.2" height="3.4" fill="#c4c4c4"/><rect x="1338.4" y="4" width="1.2" height="3.4" fill="#c4c4c4"/><rect x="1356.1" y="4" width="1.2" height="3.4" fill="#c4c4c4"/><rect x="1373.7" y="4" width="1.2" height="3.4" fill="#c4c4c4"/><rect x="1391.3" y="0" width="1.4" height="10" fill="#d0d0d0"/><rect x="1408.9" y="4" width="1.2" height="3.4" fill="#c4c4c4"/><rect x="1426.6" y="4" width="1.2" height="3.4" fill="#c4c4c4"/><rect x="1444.2" y="4" width="1.2" height="3.4" fill="#c4c4c4"/><rect x="1461.8" y="4" width="1.2" height="3.4" fill="#c4c4c4"/><rect x="1479.5" y="4" width="1.2" height="3.4" fill="#c4c4c4"/><rect x="1497.1" y="4" width="1.2" height="3.4" fill="#c4c4c4"/><rect x="1514.7" y="4" width="1.2" height="3.4" fill="#c4c4c4"/><rect x="1532.3" y="4" width="1.2" height="3.4" fill="#c4c4c4"/><rect x="1550.0" y="4" width="1.2" height="3.4" fill="#c4c4c4"/><rect x="1567.6" y="0" width="1.4" height="10" fill="#d0d0d0"/><rect x="1585.2" y="4" width="1.2" height="3.4" fill="#c4c4c4"/><rect x="1602.8" y="4" width="1.2" height="3.4" fill="#c4c4c4"/><rect x="1620.5" y="4" width="1.2" height="3.4" fill="#c4c4c4"/><rect x="1638.1" y="4" width="1.2" height="3.4" fill="#c4c4c4"/><rect x="1655.7" y="4" width="1.2" height="3.4" fill="#c4c4c4"/><rect x="1673.3" y="4" width="1.2" height="3.4" fill="#c4c4c4"/><rect x="1691.0" y="4" width="1.2" height="3.4" fill="#c4c4c4"/><rect x="1708.6" y="4" width="1.2" height="3.4" fill="#c4c4c4"/><rect x="1726.2" y="4" width="1.2" height="3.4" fill="#c4c4c4"/><rect x="1743.8" y="0" width="1.4" height="10" fill="#d0d0d0"/></svg>
<div style="top:778.5px;line-height:12px;height:12px;white-space:pre;color:#c8c8c8;font-size:10.9px;left:108.5px;transform:scaleY(0.86);">1</div>
<div style="top:778.5px;line-height:12px;height:12px;white-space:pre;color:#c8c8c8;font-size:10.9px;left:244.9px;width:40px;text-align:center;transform:scaleY(0.86);">10</div>
<div style="top:778.5px;line-height:12px;height:12px;white-space:pre;color:#c8c8c8;font-size:10.9px;left:421.2px;width:40px;text-align:center;transform:scaleY(0.86);">20</div>
<div style="top:778.5px;line-height:12px;height:12px;white-space:pre;color:#c8c8c8;font-size:10.9px;left:597.4px;width:40px;text-align:center;transform:scaleY(0.86);">30</div>
<div style="top:778.5px;line-height:12px;height:12px;white-space:pre;color:#c8c8c8;font-size:10.9px;left:773.7px;width:40px;text-align:center;transform:scaleY(0.86);">40</div>
<div style="top:778.5px;line-height:12px;height:12px;white-space:pre;color:#c8c8c8;font-size:10.9px;left:949.9px;width:40px;text-align:center;transform:scaleY(0.86);">50</div>
<div style="top:778.5px;line-height:12px;height:12px;white-space:pre;color:#c8c8c8;font-size:10.9px;left:1126.2px;width:40px;text-align:center;transform:scaleY(0.86);">60</div>
<div style="top:778.5px;line-height:12px;height:12px;white-space:pre;color:#c8c8c8;font-size:10.9px;left:1302.5px;width:40px;text-align:center;transform:scaleY(0.86);">70</div>
<div style="top:778.5px;line-height:12px;height:12px;white-space:pre;color:#c8c8c8;font-size:10.9px;left:1478.7px;width:40px;text-align:center;transform:scaleY(0.86);">80</div>
<div style="top:778.5px;line-height:12px;height:12px;white-space:pre;color:#c8c8c8;font-size:10.9px;left:1655px;width:40px;text-align:center;transform:scaleY(0.86);">90</div>
<div style="top:778.5px;line-height:12px;height:12px;white-space:pre;color:#c8c8c8;font-size:10.9px;left:1831.2px;width:40px;text-align:center;transform:scaleY(0.86);">100</div>
<svg style="left:716.4760000000001px;top:764px;" width="14" height="8" viewBox="0 0 14 8"><path d="M0.3 0.3 H13.7 L7 7.6 Z" fill="#f7931e"/></svg>
<div style="top:754px;line-height:12px;height:12px;white-space:pre;color:#f7931e;font-size:10.9px;left:708.476px;width:30px;text-align:center;">36</div>
<div style="left:49px;top:789px;width:1892px;height:32px;background:#323232;"></div>
<div style="left:49px;top:821px;width:1892px;height:1px;background:#111111;"></div>
<div style="left:52px;top:795px;width:61px;height:20px;background:#484848;border:1px solid #1f1f1f;border-radius:4px;"></div>
<div style="left:52px;top:795px;width:45px;height:20px;background:#3a3a3a;border:1px solid #1f1f1f;border-radius:4px 0 0 4px;"></div>
<div style="top:798px;line-height:16px;height:16px;white-space:pre;left:56.5px;">24*</div>
<svg style="left:101px;top:802.0px;" width="7" height="5" viewBox="0 0 7 5"><path d="M0 0 H7 L3.5 5 Z" fill="#c8c8c8"/></svg>
<div style="top:797px;line-height:16px;height:16px;white-space:pre;left:120px;">TF</div>
<svg style="left:134.5px;top:801.5px;" width="8" height="5" viewBox="0 0 8 5"><path d="M0 0 H8 L4.0 5 Z" fill="#c8c8c8"/></svg>
<div style="left:150px;top:794px;width:1px;height:21px;background:#1f1f1f;"></div>
<div style="left:151px;top:794px;width:1px;height:21px;background:#3e3e3e;"></div>
<div style="top:797px;line-height:16px;height:16px;white-space:pre;left:159px;">Global</div>
<svg style="left:208px;top:801.5px;" width="8" height="5" viewBox="0 0 8 5"><path d="M0 0 H8 L4.0 5 Z" fill="#c8c8c8"/></svg>
<div style="left:224px;top:794px;width:1px;height:21px;background:#1f1f1f;"></div>
<div style="left:225px;top:794px;width:1px;height:21px;background:#3e3e3e;"></div>
<svg style="left:765px;top:796px;" width="24" height="18" viewBox="0 0 24 18"><path d="M2 6.5 H13" stroke="#bdbdbd" stroke-width="2.2" fill="none"/><path d="M11.5 1.5 L17.5 6.5 L11.5 11.5 Z" fill="#bdbdbd"/><path d="M4.5 10 A6 5.4 0 0 0 15.5 13.5" stroke="#bdbdbd" stroke-width="2.2" fill="none"/><path d="M1 9 H7.5 L4 13.5 Z" fill="#bdbdbd"/><path d="M16.5 13.5 H23 L19.7 17.5 Z" fill="#e8e8e8"/></svg>
<div style="left:797px;top:794px;width:18px;height:22px;background:#454545;border:1px solid #242424;border-radius:3px;box-shadow:inset 0 1px 0 #545454;"></div>
<div style="top:797.5px;line-height:16px;height:16px;white-space:pre;color:#e0401c;font-size:11px;left:796px;width:20px;text-align:center;font-family:'Liberation Serif',serif;font-weight:bold;">I</div>
<div style="left:816px;top:794px;width:30px;height:22px;background:#454545;border:1px solid #242424;border-radius:3px;box-shadow:inset 0 1px 0 #545454;"></div>
<svg style="left:816px;top:794px;" width="30" height="22" viewBox="0 0 30 22"><rect x="8.5" y="5.5" width="2.6" height="11" fill="#bdbdbd"/><rect x="12" y="5.5" width="1.4" height="11" fill="#bdbdbd"/><path d="M22 5 V17 L12.5 11 Z" fill="#bdbdbd"/></svg>
<div style="left:848px;top:794px;width:30px;height:22px;background:#454545;border:1px solid #242424;border-radius:3px;box-shadow:inset 0 1px 0 #545454;"></div>
<svg style="left:848px;top:794px;" width="30" height="22" viewBox="0 0 30 22"><circle cx="9.5" cy="15" r="2.2" fill="none" stroke="#bdbdbd" stroke-width="1.3"/><path d="M9.5 5 V13" stroke="#bdbdbd" stroke-width="1.4"/><path d="M23 5 V17 L13 11 Z" fill="#bdbdbd"/></svg>
<div style="left:880px;top:794px;width:30px;height:22px;background:#454545;border:1px solid #242424;border-radius:3px;box-shadow:inset 0 1px 0 #545454;"></div>
<svg style="left:880px;top:794px;" width="30" height="22" viewBox="0 0 30 22"><path d="M18 5 V17 L8.5 11 Z" fill="#bdbdbd"/><rect x="19" y="5.5" width="1.4" height="11" fill="#bdbdbd"/><rect x="21" y="5.5" width="1" height="11" fill="#8a8a8a"/></svg>
<div style="left:912px;top:794px;width:30px;height:22px;background:#454545;border:1px solid #242424;border-radius:3px;box-shadow:inset 0 1px 0 #545454;"></div>
<svg style="left:912px;top:794px;" width="30" height="22" viewBox="0 0 30 22"><path d="M20 5 V17 L10 11 Z" fill="#bdbdbd"/></svg>
<div style="left:944px;top:794px;width:48px;height:22px;background:#373737;border-radius:3px;"></div>
<div style="top:798px;line-height:16px;height:16px;white-space:pre;color:#f7931e;left:947.5px;width:40px;text-align:center;">36</div>
<div style="left:994px;top:794px;width:30px;height:22px;background:#454545;border:1px solid #242424;border-radius:3px;box-shadow:inset 0 1px 0 #545454;"></div>
<svg style="left:994px;top:794px;" width="30" height="22" viewBox="0 0 30 22"><path d="M10 5 V17 L20 11 Z" fill="#bdbdbd"/></svg>
<div style="left:1026px;top:794px;width:30px;height:22px;background:#454545;border:1px solid #242424;border-radius:3px;box-shadow:inset 0 1px 0 #545454;"></div>
<svg style="left:1026px;top:794px;" width="30" height="22" viewBox="0 0 30 22"><rect x="8.5" y="5.5" width="1" height="11" fill="#8a8a8a"/><rect x="10" y="5.5" width="1.4" height="11" fill="#bdbdbd"/><path d="M12 5 V17 L21.5 11 Z" fill="#bdbdbd"/></svg>
<div style="left:1058px;top:794px;width:30px;height:22px;background:#454545;border:1px solid #242424;border-radius:3px;box-shadow:inset 0 1px 0 #545454;"></div>
<svg style="left:1058px;top:794px;" width="30" height="22" viewBox="0 0 30 22"><path d="M7.5 5 V17 L17.5 11 Z" fill="#bdbdbd"/><circle cx="21" cy="15" r="2.2" fill="none" stroke="#bdbdbd" stroke-width="1.3"/><path d="M21 5 V13" stroke="#bdbdbd" stroke-width="1.4"/></svg>
<div style="left:1090px;top:794px;width:30px;height:22px;background:#454545;border:1px solid #242424;border-radius:3px;box-shadow:inset 0 1px 0 #545454;"></div>
<svg style="left:1090px;top:794px;" width="30" height="22" viewBox="0 0 30 22"><path d="M8.5 5 V17 L18 11 Z" fill="#bdbdbd"/><rect x="17" y="5.5" width="1.4" height="11" fill="#bdbdbd"/><rect x="19.4" y="5.5" width="2.6" height="11" fill="#bdbdbd"/></svg>
<div style="left:1122px;top:794px;width:17px;height:22px;background:#454545;border:1px solid #242424;border-radius:3px;box-shadow:inset 0 1px 0 #545454;"></div>
<div style="top:798px;line-height:16px;height:16px;white-space:pre;color:#e0401c;font-size:11px;left:1120.5px;width:20px;text-align:center;">O</div>
<div style="left:1151px;top:794px;width:22px;height:22px;background:#454545;border:1px solid #242424;border-radius:3px;box-shadow:inset 0 1px 0 #545454;"></div>
<svg style="left:1151px;top:794px;" width="22" height="22" viewBox="0 0 22 22"><path d="M10.5 7 V15 L4.5 11 Z M17 7 V15 L11 11 Z" fill="#bdbdbd"/></svg>
<div style="left:1174px;top:794px;width:22px;height:22px;background:#383838;border:1px solid #242424;border-radius:3px;"></div>
<div style="top:798px;line-height:16px;height:16px;white-space:pre;left:1170px;width:30px;text-align:center;">10</div>
<div style="left:1197px;top:794px;width:21px;height:22px;background:#454545;border:1px solid #242424;border-radius:3px;box-shadow:inset 0 1px 0 #545454;"></div>
<svg style="left:1197px;top:794px;" width="21" height="22" viewBox="0 0 21 22"><path d="M4.5 7 V15 L10.5 11 Z M11 7 V15 L17 11 Z" fill="#bdbdbd"/></svg>
<svg style="left:1777px;top:799px;" width="16" height="13" viewBox="0 0 16 13"><rect x="0" y="0" width="16" height="13" rx="1" fill="#bebebe"/><path d="M5 2.5 V10.5 L12 6.5 Z" fill="#222"/></svg>
<svg style="left:1799px;top:799px;" width="16" height="13" viewBox="0 0 16 13"><rect x="0" y="0" width="16" height="13" rx="1" fill="#bebebe"/><circle cx="8" cy="6.5" r="3.8" fill="#222"/></svg>
<svg style="left:1824px;top:797px;" width="13" height="15" viewBox="0 0 13 15"><path d="M3.5 7 V4.5 A3 3 0 0 1 9.5 4.5 V7" stroke="#c8c8c8" stroke-width="1.8" fill="none"/><rect x="0.5" y="6.5" width="12" height="8.5" rx="1" fill="#c8c8c8"/><path d="M6.5 9 V13" stroke="#323232" stroke-width="1.6"/></svg>
<svg style="left:1851px;top:797px;" width="17" height="15" viewBox="0 0 17 15"><path d="M5.5 0 V9 L11.5 4.5 Z" fill="#e80000"/><path d="M0.5 9 V13.5 H16.5 V9 M4.5 11 V13.5 M8.5 11 V13.5 M12.5 11 V13.5" stroke="#e80000" stroke-width="1.2" fill="none"/></svg>
<div style="left:1875px;top:794px;width:48px;height:22px;background:#383838;border-radius:3px;"></div>
<div style="top:798px;line-height:16px;height:16px;white-space:pre;left:1878px;width:40px;text-align:center;">74</div>
<div style="left:49px;top:822px;width:1892px;height:2px;background:#262626;"></div>
<div style="left:49px;top:824px;width:1892px;height:28px;background:#262626;"></div>
<div style="left:52px;top:826px;width:8px;height:9px;background:#a4a4a4;"></div>
<div style="left:52px;top:835px;width:8px;height:7px;background:#7e7e7e;"></div>
<div style="left:60px;top:826px;width:8px;height:16px;background:#565656;"></div>
<div style="left:72px;top:825px;width:121px;height:28px;background:#323232;border:1px solid #3c3c3c;border-bottom:none;border-radius:4px 4px 0 0;"></div>
<div style="top:831px;line-height:16px;height:16px;white-space:pre;color:#f7931e;left:87px;">Node Graph</div>
<div style="left:164.5px;top:831.5px;width:13px;height:13px;background:#2d2d2d;border-radius:50%;"></div>
<svg style="left:167.5px;top:834.5px;" width="7" height="7" viewBox="0 0 7 7"><path d="M0.8 0.8 L6.2 6.2 M6.2 0.8 L0.8 6.2" stroke="#787878" stroke-width="1.7"/></svg>
<div style="left:195px;top:827px;width:126px;height:25px;background:#2a2a2a;border:1px solid #191919;border-bottom:none;border-radius:4px 4px 0 0;"></div>
<div style="top:832px;line-height:16px;height:16px;white-space:pre;left:209px;">Curve Editor</div>
<div style="left:291.5px;top:832.5px;width:13px;height:13px;background:#3a3a3a;border-radius:50%;"></div>
<svg style="left:294.5px;top:835.5px;" width="7" height="7" viewBox="0 0 7 7"><path d="M0.8 0.8 L6.2 6.2 M6.2 0.8 L0.8 6.2" stroke="#242424" stroke-width="1.7"/></svg>
<div style="left:321px;top:827px;width:119px;height:25px;background:#2a2a2a;border:1px solid #191919;border-bottom:none;border-radius:4px 4px 0 0;"></div>
<div style="top:832px;line-height:16px;height:16px;white-space:pre;left:335px;">Dope Sheet</div>
<div style="left:410.5px;top:832.5px;width:13px;height:13px;background:#3a3a3a;border-radius:50%;"></div>
<svg style="left:413.5px;top:835.5px;" width="7" height="7" viewBox="0 0 7 7"><path d="M0.8 0.8 L6.2 6.2 M6.2 0.8 L0.8 6.2" stroke="#242424" stroke-width="1.7"/></svg>
<div style="left:49px;top:852px;width:1892px;height:513px;background:#323232;"></div>
<svg style="left:49px;top:852px;overflow:hidden;" width="1892" height="513" viewBox="0 0 1892 513"><path d="M630 17 L630 47" stroke="#000" stroke-width="2.2" fill="none"/><path d="M630 58 L625.8 47 L634.2 47 Z" fill="#000"/><path d="M630 79 L630 176" stroke="#000" stroke-width="2.2" fill="none"/><path d="M630 187 L625.8 176 L634.2 176 Z" fill="#000"/><path d="M630 207 L630 370" stroke="#000" stroke-width="2.2" fill="none"/><path d="M630 363 L630 369" stroke="#000" stroke-width="2.2" fill="none"/><path d="M630 379 L625.8 369 L634.2 369 Z" fill="#000"/><path d="M630 399 L630 439" stroke="#000" stroke-width="2.2" fill="none"/><path d="M630 450 L625.8 439 L634.2 439 Z" fill="#000"/><path d="M630 470 L630 503" stroke="#000" stroke-width="2.2" fill="none"/><path d="M591 197 L416 197" stroke="#000" stroke-width="2.2" fill="none"/><path d="M405 197 L416 192.8 L416 201.2 Z" fill="#000"/><path d="M397.7 202 L397.7 211.5" stroke="#000" stroke-width="2.2" fill="none"/><path d="M397.7 221.5 L393.5 211.5 L401.9 211.5 Z" fill="#000"/><path d="M383.4 256.5 L391.861 280.993" stroke="#000" stroke-width="2.2" fill="none"/><path d="M394.8 289.5 L388.648 282.103 L395.075 279.883 Z" fill="#000"/><path d="M397.8 253.5 L397.8 280.5" stroke="#000" stroke-width="2.2" fill="none"/><path d="M397.8 289.5 L394.4 280.5 L401.2 280.5 Z" fill="#000"/><path d="M412 256.5 L403.692 280.977" stroke="#000" stroke-width="2.2" fill="none"/><path d="M400.8 289.5 L400.473 279.885 L406.912 282.07 Z" fill="#000"/><path d="M356 269 L376.284 284.121" stroke="#000" stroke-width="2.2" fill="none"/><path d="M383.5 289.5 L374.252 286.847 L378.316 281.395 Z" fill="#000"/><path d="M365 278.5 L377.532 285.569" stroke="#000" stroke-width="2.2" fill="none"/><path d="M384.5 289.5 L375.96 288.357 L379.104 282.782 Z" fill="#000"/><path d="M397.7 346 L397.7 367" stroke="#000" stroke-width="2.2" fill="none"/><path d="M397.7 378 L393.5 367 L401.9 367 Z" fill="#000"/><path d="M442 389 L581 389" stroke="#000" stroke-width="2.2" fill="none"/><path d="M438 389 l5 -3.6 v7.2 Z" fill="#000"/><path d="M590.5 389 l-9 -4 v8 Z M585 389 l-8 -4 v8 Z" fill="#000"/><path d="M684 460 L985 460" stroke="#000" stroke-width="2.2" fill="none"/><path d="M670.5 460 l9 -4 v8 Z M676 460 l8 -4 v8 Z" fill="#000"/><path d="M951 189.5 L812.828 164.74" stroke="#000" stroke-width="1.6" stroke-dasharray="1.7 2.3" fill="none"/><path d="M802 162.8 L813.533 160.803 L812.122 168.678 Z" fill="#000"/><path d="M990 0 L990 27" stroke="#f3b55e" stroke-width="2.2" fill="none"/><path d="M990 38 L985.8 27 L994.2 27 Z" fill="#f3b55e"/><path d="M990 59 L990 65.5" stroke="#f3b55e" stroke-width="2.2" fill="none"/><path d="M990 75.5 L985.8 65.5 L994.2 65.5 Z" fill="#f3b55e"/><path d="M990 96 L990 96" stroke="#f3b55e" stroke-width="2.2" fill="none"/><path d="M990 102.5 L985.8 96 L994.2 96 Z" fill="#f3b55e"/><path d="M990 134 L990 134" stroke="#f3b55e" stroke-width="2.2" fill="none"/><path d="M990 140.5 L985.8 134 L994.2 134 Z" fill="#f3b55e"/><path d="M990 171 L990 175.5" stroke="#f3b55e" stroke-width="2.2" fill="none"/><path d="M990 185.5 L985.8 175.5 L994.2 175.5 Z" fill="#f3b55e"/><path d="M990 206 L990 252.5" stroke="#000" stroke-width="2.2" fill="none"/><path d="M990 263.5 L985.8 252.5 L994.2 252.5 Z" fill="#000"/><path d="M990 296 L990 304.5" stroke="#000" stroke-width="2.2" fill="none"/><path d="M990 314.5 L985.8 304.5 L994.2 304.5 Z" fill="#000"/><path d="M990 335 L990 363" stroke="#000" stroke-width="2.2" fill="none"/><path d="M990 374 L985.8 363 L994.2 363 Z" fill="#000"/><path d="M990 407 L990 443" stroke="#000" stroke-width="2.2" fill="none"/><path d="M990 454 L985.8 443 L994.2 443 Z" fill="#000"/><path d="M1178 0 L1178 35.5" stroke="#f3b55e" stroke-width="2.2" fill="none"/><path d="M1178 46.5 L1173.8 35.5 L1182.2 35.5 Z" fill="#f3b55e"/><path d="M1178 67 L1178 68" stroke="#f3b55e" stroke-width="2.2" fill="none"/><path d="M1178 76.5 L1173.8 68 L1182.2 68 Z" fill="#f3b55e"/><path d="M1178 97 L1178 97" stroke="#f3b55e" stroke-width="2.2" fill="none"/><path d="M1178 103.5 L1173.8 97 L1182.2 97 Z" fill="#f3b55e"/><path d="M1178 135 L1178 135" stroke="#f3b55e" stroke-width="2.2" fill="none"/><path d="M1178 141.5 L1173.8 135 L1182.2 135 Z" fill="#f3b55e"/><path d="M1178 173 L1178 177.5" stroke="#f3b55e" stroke-width="2.2" fill="none"/><path d="M1178 187.5 L1173.8 177.5 L1182.2 177.5 Z" fill="#f3b55e"/><path d="M1178 208 L1178 253.5" stroke="#000" stroke-width="2.2" fill="none"/><path d="M1178 264.5 L1173.8 253.5 L1182.2 253.5 Z" fill="#000"/><path d="M1178 297 L1178 306.5" stroke="#000" stroke-width="2.2" fill="none"/><path d="M1178 316.5 L1173.8 306.5 L1182.2 306.5 Z" fill="#000"/><path d="M1178 337 L1178 509" stroke="#000" stroke-width="2.2" fill="none"/><path d="M1174 509 h8 l-4 4 Z" fill="#000"/></svg>
<div style="left:49px;top:852px;width:1892px;height:513px;overflow:hidden;">
</div>
<div style="left:639px;top:852px;width:80px;height:18px;background:linear-gradient(#6cba6c,#4c9050);box-shadow:inset 0 0 0 1px rgba(0,0,0,0.55);"></div>
<div style="left:639px;top:852px;width:80px;height:18px;overflow:hidden;">
<div style="top:-8.5px;line-height:12px;height:12px;white-space:pre;color:#000;font-size:10.8px;left:-10px;width:100px;text-align:center;transform:scaleY(0.86);">Noise1</div>
<div style="top:3.8px;line-height:12px;height:12px;white-space:pre;color:#000;font-size:10.8px;left:-10px;width:100px;text-align:center;transform:scaleY(0.86);">(alpha)</div>
</div>
<div style="left:644.8px;top:865.3px;width:2.2px;height:2.7px;background:#f00;"></div>
<div style="left:652.9px;top:865.3px;width:2.1px;height:2.7px;background:#0f0;"></div>
<div style="left:659.8px;top:865.3px;width:2.2px;height:2.7px;background:#00f;"></div>
<div style="left:665px;top:865.3px;width:8px;height:2.7px;background:#fff;"></div>
<svg style="left:635px;top:852px;" width="4.5" height="6" viewBox="0 0 4.5 6"><path d="M0 0 V6 L4.5 2 V0 Z" fill="#000"/></svg>
<svg style="left:719px;top:852px;" width="4.5" height="6" viewBox="0 0 4.5 6"><path d="M4.5 0 V6 L0 2 V0 Z" fill="#000"/></svg>
<div style="left:639px;top:910.9000000000001px;width:80px;height:20.1px;background:linear-gradient(#aac2f3,#63728e);box-shadow:inset 0 0 0 1px rgba(0,0,0,0.62);"></div>
<div style="top:916.45px;line-height:12px;height:12px;white-space:pre;color:#000;font-size:10.8px;left:579px;width:200px;text-align:center;transform:scaleY(0.86);">HueCorrect1</div>
<div style="left:642px;top:926.4000000000001px;width:7px;height:2.7px;background:#f00;"></div>
<div style="left:649px;top:926.4000000000001px;width:7px;height:2.7px;background:#0f0;"></div>
<div style="left:656px;top:926.4000000000001px;width:8px;height:2.7px;background:#00f;"></div>
<div style="left:666px;top:926.4000000000001px;width:2px;height:2.7px;background:#fff;"></div>
<svg style="left:718.5px;top:916.95px;" width="4.5" height="8" viewBox="0 0 4.5 8"><path d="M4.5 0 V8 L0 4 Z" fill="#000"/></svg>
<div style="left:639px;top:1039.2px;width:80px;height:19.6px;background:linear-gradient(#f2f2f2,#8c8c8c);box-shadow:inset 0 0 0 1px rgba(0,0,0,0.62);"></div>
<div style="top:1044.5px;line-height:12px;height:12px;white-space:pre;color:#000;font-size:10.8px;left:579px;width:200px;text-align:center;transform:scaleY(0.86);">Premult1</div>
<div style="left:642px;top:1054.2px;width:7px;height:2.7px;background:#f00;"></div>
<div style="left:649px;top:1054.2px;width:7px;height:2.7px;background:#0f0;"></div>
<div style="left:656px;top:1054.2px;width:8px;height:2.7px;background:#00f;"></div>
<div style="left:666px;top:1054.2px;width:2px;height:2.7px;background:#fff;"></div>
<div style="left:407px;top:1073.7px;width:80px;height:32.6px;background:linear-gradient(#f2a266,#a5673a);box-shadow:inset 0 0 0 1px rgba(0,0,0,0.62);"></div>
<div style="top:1079.5px;line-height:12px;height:12px;white-space:pre;color:#000;font-size:10.8px;left:347px;width:200px;text-align:center;transform:scaleY(0.86);">Blur4</div>
<div style="top:1091.5px;line-height:12px;height:12px;white-space:pre;color:#000;font-size:10.8px;left:347px;width:200px;text-align:center;transform:scaleY(0.86);">(all)</div>
<svg style="left:486.5px;top:1086.0px;" width="4.5" height="8" viewBox="0 0 4.5 8"><path d="M4.5 0 V8 L0 4 Z" fill="#000"/></svg>
<div style="left:407px;top:1142.7px;width:80px;height:19.6px;background:linear-gradient(#f2a266,#a5673a);box-shadow:inset 0 0 0 1px rgba(0,0,0,0.62);"></div>
<div style="top:1148px;line-height:12px;height:12px;white-space:pre;color:#000;font-size:10.8px;left:347px;width:200px;text-align:center;transform:scaleY(0.86);">MotionBlur1</div>
<svg style="left:483px;top:1138px;" width="8" height="8" viewBox="0 0 8 8"><circle cx="4" cy="4" r="3.9" fill="#cc5058"/><text x="4" y="6.3" font-size="6.6" font-weight="bold" text-anchor="middle" fill="#f6e0e0">A</text></svg>
<div style="left:407px;top:1178.7px;width:80px;height:19.6px;background:linear-gradient(#f2a266,#a5673a);box-shadow:inset 0 0 0 1px rgba(0,0,0,0.62);"></div>
<div style="top:1184px;line-height:12px;height:12px;white-space:pre;color:#000;font-size:10.8px;left:347px;width:200px;text-align:center;transform:scaleY(0.86);">MotionBlur2</div>
<div style="left:410px;top:1193.7px;width:7px;height:2.7px;background:#f00;"></div>
<div style="left:417px;top:1193.7px;width:7px;height:2.7px;background:#0f0;"></div>
<div style="left:424px;top:1193.7px;width:8px;height:2.7px;background:#00f;"></div>
<div style="left:432px;top:1193.7px;width:8px;height:2.7px;background:#fff;"></div>
<svg style="left:483px;top:1174px;" width="8" height="8" viewBox="0 0 8 8"><circle cx="4" cy="4" r="3.9" fill="#cc5058"/><text x="4" y="6.3" font-size="6.6" font-weight="bold" text-anchor="middle" fill="#f6e0e0">A</text></svg>
<div style="left:407px;top:1231.7px;width:80px;height:19.6px;background:linear-gradient(#f2a266,#a5673a);box-shadow:inset 0 0 0 1px rgba(0,0,0,0.62);"></div>
<div style="top:1237px;line-height:12px;height:12px;white-space:pre;color:#000;font-size:10.8px;left:347px;width:200px;text-align:center;transform:scaleY(0.86);">Glow1</div>
<div style="left:639px;top:1230.7px;width:80px;height:20.6px;background:linear-gradient(#5c6ce2,#2c388c);box-shadow:inset 0 0 0 1px rgba(0,0,0,0.62);"></div>
<div style="top:1236.5px;line-height:12px;height:12px;white-space:pre;color:#000;font-size:10.8px;left:579px;width:200px;text-align:center;transform:scaleY(0.86);">Merge3 (over)</div>
<svg style="left:718.5px;top:1237.0px;" width="4.5" height="8" viewBox="0 0 4.5 8"><path d="M4.5 0 V8 L0 4 Z" fill="#000"/></svg>
<div style="left:639px;top:1301.7px;width:80px;height:20.6px;background:linear-gradient(#5c6ce2,#2c388c);box-shadow:inset 0 0 0 1px rgba(0,0,0,0.62);"></div>
<div style="top:1307.5px;line-height:12px;height:12px;white-space:pre;color:#000;font-size:10.8px;left:579px;width:200px;text-align:center;transform:scaleY(0.86);">Merge1 (over)</div>
<svg style="left:635px;top:1308px;" width="4.5" height="8" viewBox="0 0 4.5 8"><path d="M0 0 V8 L4.5 4 Z" fill="#000"/></svg>
<div style="left:999px;top:890.7px;width:80px;height:20.6px;background:linear-gradient(#aac2f3,#63728e);box-shadow:inset 0 0 0 1px rgba(0,0,0,0.62);"></div>
<div style="top:896.5px;line-height:12px;height:12px;white-space:pre;color:#000;font-size:10.8px;left:939px;width:200px;text-align:center;transform:scaleY(0.86);">Grade2</div>
<div style="left:1002px;top:906.7px;width:7px;height:2.7px;background:#f00;"></div>
<div style="left:1009px;top:906.7px;width:7px;height:2.7px;background:#0f0;"></div>
<div style="left:1016px;top:906.7px;width:8px;height:2.7px;background:#00f;"></div>
<div style="left:1026px;top:906.7px;width:2px;height:2.7px;background:#fff;"></div>
<svg style="left:1078.5px;top:897.0px;" width="4.5" height="8" viewBox="0 0 4.5 8"><path d="M4.5 0 V8 L0 4 Z" fill="#f3b55e"/></svg>
<div style="left:999px;top:928.2px;width:80px;height:19.6px;background:linear-gradient(#aac2f3,#63728e);box-shadow:inset 0 0 0 1px rgba(0,0,0,0.62);"></div>
<div style="top:933.5px;line-height:12px;height:12px;white-space:pre;color:#000;font-size:10.8px;left:939px;width:200px;text-align:center;transform:scaleY(0.86);">ColorCorrect1</div>
<div style="left:1002px;top:943.2px;width:7px;height:2.7px;background:#f00;"></div>
<div style="left:1009px;top:943.2px;width:7px;height:2.7px;background:#0f0;"></div>
<div style="left:1016px;top:943.2px;width:8px;height:2.7px;background:#00f;"></div>
<div style="left:1026px;top:943.2px;width:2px;height:2.7px;background:#fff;"></div>
<svg style="left:1078.5px;top:934.0px;" width="4.5" height="8" viewBox="0 0 4.5 8"><path d="M4.5 0 V8 L0 4 Z" fill="#f3b55e"/></svg>
<div style="left:999px;top:954.2px;width:80px;height:31.6px;background:linear-gradient(#f2a266,#a5673a);box-shadow:inset 0 0 0 1px rgba(0,0,0,0.62);"></div>
<div style="top:959.5px;line-height:12px;height:12px;white-space:pre;color:#000;font-size:10.8px;left:939px;width:200px;text-align:center;transform:scaleY(0.86);">FilterErode1</div>
<div style="top:971.5px;line-height:12px;height:12px;white-space:pre;color:#000;font-size:10.8px;left:939px;width:200px;text-align:center;transform:scaleY(0.86);">(alpha)</div>
<div style="left:1003.8px;top:981.2px;width:2.2px;height:2.7px;background:#f00;"></div>
<div style="left:1011.9px;top:981.2px;width:2.1px;height:2.7px;background:#0f0;"></div>
<div style="left:1018.8px;top:981.2px;width:2.2px;height:2.7px;background:#00f;"></div>
<div style="left:1024px;top:981.2px;width:8px;height:2.7px;background:#fff;"></div>
<svg style="left:1078.5px;top:966.0px;" width="4.5" height="8" viewBox="0 0 4.5 8"><path d="M4.5 0 V8 L0 4 Z" fill="#f3b55e"/></svg>
<div style="left:999px;top:992.2px;width:80px;height:31.6px;background:linear-gradient(#f2a266,#a5673a);box-shadow:inset 0 0 0 1px rgba(0,0,0,0.62);"></div>
<div style="top:997.5px;line-height:12px;height:12px;white-space:pre;color:#000;font-size:10.8px;left:939px;width:200px;text-align:center;transform:scaleY(0.86);">Blur2</div>
<div style="top:1009.5px;line-height:12px;height:12px;white-space:pre;color:#000;font-size:10.8px;left:939px;width:200px;text-align:center;transform:scaleY(0.86);">(alpha)</div>
<div style="left:1003.8px;top:1019.2px;width:2.2px;height:2.7px;background:#f00;"></div>
<div style="left:1011.9px;top:1019.2px;width:2.1px;height:2.7px;background:#0f0;"></div>
<div style="left:1018.8px;top:1019.2px;width:2.2px;height:2.7px;background:#00f;"></div>
<div style="left:1024px;top:1019.2px;width:8px;height:2.7px;background:#fff;"></div>
<svg style="left:1078.5px;top:1004.0px;" width="4.5" height="8" viewBox="0 0 4.5 8"><path d="M4.5 0 V8 L0 4 Z" fill="#f3b55e"/></svg>
<div style="left:999px;top:1038.7px;width:80px;height:19.0px;background:linear-gradient(#fcbc5e,#f8b052) padding-box,linear-gradient(#f6f6f6,#8a8a8a) border-box;border:2px solid transparent;"></div>
<div style="top:1043.7px;line-height:12px;height:12px;white-space:pre;color:#000;font-size:10.8px;left:939px;width:200px;text-align:center;transform:scaleY(0.86);">Premult2</div>
<div style="left:1002px;top:1053.4px;width:7px;height:2.7px;background:#f00;"></div>
<div style="left:1009px;top:1053.4px;width:7px;height:2.7px;background:#0f0;"></div>
<div style="left:1016px;top:1053.4px;width:8px;height:2.7px;background:#00f;"></div>
<div style="left:1026px;top:1053.4px;width:2px;height:2.7px;background:#fff;"></div>
<div style="left:999px;top:1116.2px;width:79.5px;height:31.6px;background:linear-gradient(#caa4d2,#7d5d88);box-shadow:inset 0 0 0 1px rgba(0,0,0,0.62);"></div>
<div style="top:1121.5px;line-height:12px;height:12px;white-space:pre;color:#000;font-size:10.8px;left:938.75px;width:200px;text-align:center;transform:scaleY(0.86);">Reformat1</div>
<div style="top:1133.5px;line-height:12px;height:12px;white-space:pre;color:#000;font-size:10.8px;left:938.75px;width:200px;text-align:center;transform:scaleY(0.86);">()</div>
<div style="left:1002px;top:1143.2px;width:7px;height:2.7px;background:#f00;"></div>
<div style="left:1009px;top:1143.2px;width:7px;height:2.7px;background:#0f0;"></div>
<div style="left:1016px;top:1143.2px;width:8px;height:2.7px;background:#00f;"></div>
<div style="left:1024px;top:1143.2px;width:8px;height:2.7px;background:#fff;"></div>
<div style="left:999px;top:1167.2px;width:79.5px;height:19.6px;background:linear-gradient(#caa4d2,#7d5d88);box-shadow:inset 0 0 0 1px rgba(0,0,0,0.62);"></div>
<div style="top:1172.5px;line-height:12px;height:12px;white-space:pre;color:#000;font-size:10.8px;left:938.75px;width:200px;text-align:center;transform:scaleY(0.86);">Transform1</div>
<div style="left:1002px;top:1182.2px;width:7px;height:2.7px;background:#f00;"></div>
<div style="left:1009px;top:1182.2px;width:7px;height:2.7px;background:#0f0;"></div>
<div style="left:1016px;top:1182.2px;width:8px;height:2.7px;background:#00f;"></div>
<div style="left:1024px;top:1182.2px;width:8px;height:2.7px;background:#fff;"></div>
<svg style="left:1074.5px;top:1162.5px;" width="8" height="8" viewBox="0 0 8 8"><circle cx="4" cy="4" r="3.9" fill="#cc5058"/><text x="4" y="6.3" font-size="6.6" font-weight="bold" text-anchor="middle" fill="#f6e0e0">A</text></svg>
<div style="left:999px;top:1226.3px;width:79.5px;height:33.40000000000018px;background:linear-gradient(#34ee34,#1a9a1a);box-shadow:inset 0 0 0 1px rgba(0,0,0,0.62);"></div>
<div style="top:1232.5px;line-height:12px;height:12px;white-space:pre;color:#000;font-size:10.8px;left:939px;width:200px;text-align:center;transform:scaleY(0.86);opacity:0.8;">Keyer1 (luminance key)</div>
<div style="top:1244.5px;line-height:12px;height:12px;white-space:pre;color:#000;font-size:10.8px;left:939px;width:200px;text-align:center;transform:scaleY(0.86);opacity:0.8;">(alpha)</div>
<svg style="left:999px;top:1227px;" width="80" height="32" viewBox="0 0 80 32"><path d="M0 0 L80 32 M80 0 L0 32" stroke="#000" stroke-width="2.2"/></svg>
<div style="left:1187px;top:899.7px;width:79.5px;height:19.6px;background:linear-gradient(#aac2f3,#63728e);box-shadow:inset 0 0 0 1px rgba(0,0,0,0.62);"></div>
<div style="top:905px;line-height:12px;height:12px;white-space:pre;color:#000;font-size:10.8px;left:1126.75px;width:200px;text-align:center;transform:scaleY(0.86);">Grade3</div>
<div style="left:1190px;top:914.7px;width:7px;height:2.7px;background:#f00;"></div>
<div style="left:1197px;top:914.7px;width:7px;height:2.7px;background:#0f0;"></div>
<div style="left:1204px;top:914.7px;width:8px;height:2.7px;background:#00f;"></div>
<div style="left:1214px;top:914.7px;width:2px;height:2.7px;background:#fff;"></div>
<svg style="left:1266.0px;top:905.5px;" width="4.5" height="8" viewBox="0 0 4.5 8"><path d="M4.5 0 V8 L0 4 Z" fill="#f3b55e"/></svg>
<div style="left:1187px;top:929.2px;width:79.5px;height:19.6px;background:linear-gradient(#aac2f3,#63728e);box-shadow:inset 0 0 0 1px rgba(0,0,0,0.62);"></div>
<div style="top:934.5px;line-height:12px;height:12px;white-space:pre;color:#000;font-size:10.8px;left:1126.75px;width:200px;text-align:center;transform:scaleY(0.86);">ColorCorrect2</div>
<div style="left:1190px;top:944.2px;width:7px;height:2.7px;background:#f00;"></div>
<div style="left:1197px;top:944.2px;width:7px;height:2.7px;background:#0f0;"></div>
<div style="left:1204px;top:944.2px;width:8px;height:2.7px;background:#00f;"></div>
<div style="left:1214px;top:944.2px;width:2px;height:2.7px;background:#fff;"></div>
<svg style="left:1266.0px;top:935.0px;" width="4.5" height="8" viewBox="0 0 4.5 8"><path d="M4.5 0 V8 L0 4 Z" fill="#f3b55e"/></svg>
<div style="left:1187px;top:955.4000000000001px;width:79.5px;height:31.49999999999998px;background:linear-gradient(#f2a266,#a5673a);box-shadow:inset 0 0 0 1px rgba(0,0,0,0.62);"></div>
<div style="top:960.65px;line-height:12px;height:12px;white-space:pre;color:#000;font-size:10.8px;left:1126.75px;width:200px;text-align:center;transform:scaleY(0.86);">FilterErode2</div>
<div style="top:972.65px;line-height:12px;height:12px;white-space:pre;color:#000;font-size:10.8px;left:1126.75px;width:200px;text-align:center;transform:scaleY(0.86);">(alpha)</div>
<div style="left:1191.8px;top:982.3000000000001px;width:2.2px;height:2.7px;background:#f00;"></div>
<div style="left:1199.9px;top:982.3000000000001px;width:2.1px;height:2.7px;background:#0f0;"></div>
<div style="left:1206.8px;top:982.3000000000001px;width:2.2px;height:2.7px;background:#00f;"></div>
<div style="left:1212px;top:982.3000000000001px;width:8px;height:2.7px;background:#fff;"></div>
<svg style="left:1266.0px;top:967.1500000000001px;" width="4.5" height="8" viewBox="0 0 4.5 8"><path d="M4.5 0 V8 L0 4 Z" fill="#f3b55e"/></svg>
<div style="left:1187px;top:993.3000000000001px;width:79.5px;height:31.40000000000007px;background:linear-gradient(#f2a266,#a5673a);box-shadow:inset 0 0 0 1px rgba(0,0,0,0.62);"></div>
<div style="top:998.5px;line-height:12px;height:12px;white-space:pre;color:#000;font-size:10.8px;left:1126.75px;width:200px;text-align:center;transform:scaleY(0.86);">Blur3</div>
<div style="top:1010.5px;line-height:12px;height:12px;white-space:pre;color:#000;font-size:10.8px;left:1126.75px;width:200px;text-align:center;transform:scaleY(0.86);">(alpha)</div>
<div style="left:1191.8px;top:1020.1000000000001px;width:2.2px;height:2.7px;background:#f00;"></div>
<div style="left:1199.9px;top:1020.1000000000001px;width:2.1px;height:2.7px;background:#0f0;"></div>
<div style="left:1206.8px;top:1020.1000000000001px;width:2.2px;height:2.7px;background:#00f;"></div>
<div style="left:1212px;top:1020.1000000000001px;width:8px;height:2.7px;background:#fff;"></div>
<svg style="left:1266.0px;top:1005.0px;" width="4.5" height="8" viewBox="0 0 4.5 8"><path d="M4.5 0 V8 L0 4 Z" fill="#f3b55e"/></svg>
<div style="left:1187px;top:1041px;width:79.5px;height:18.40000000000009px;background:linear-gradient(#fcbc5e,#f8b052) padding-box,linear-gradient(#f6f6f6,#8a8a8a) border-box;border:2px solid transparent;"></div>
<div style="top:1045.7px;line-height:12px;height:12px;white-space:pre;color:#000;font-size:10.8px;left:1126.75px;width:200px;text-align:center;transform:scaleY(0.86);">Premult3</div>
<div style="left:1190px;top:1055.1000000000001px;width:7px;height:2.7px;background:#f00;"></div>
<div style="left:1197px;top:1055.1000000000001px;width:7px;height:2.7px;background:#0f0;"></div>
<div style="left:1204px;top:1055.1000000000001px;width:8px;height:2.7px;background:#00f;"></div>
<div style="left:1214px;top:1055.1000000000001px;width:2px;height:2.7px;background:#fff;"></div>
<div style="left:1187px;top:1117.4px;width:79.5px;height:31.300000000000047px;background:linear-gradient(#caa4d2,#7d5d88);box-shadow:inset 0 0 0 1px rgba(0,0,0,0.62);"></div>
<div style="top:1122.55px;line-height:12px;height:12px;white-space:pre;color:#000;font-size:10.8px;left:1126.75px;width:200px;text-align:center;transform:scaleY(0.86);">Reformat2</div>
<div style="top:1134.55px;line-height:12px;height:12px;white-space:pre;color:#000;font-size:10.8px;left:1126.75px;width:200px;text-align:center;transform:scaleY(0.86);">()</div>
<div style="left:1190px;top:1144.1000000000001px;width:7px;height:2.7px;background:#f00;"></div>
<div style="left:1197px;top:1144.1000000000001px;width:7px;height:2.7px;background:#0f0;"></div>
<div style="left:1204px;top:1144.1000000000001px;width:8px;height:2.7px;background:#00f;"></div>
<div style="left:1212px;top:1144.1000000000001px;width:8px;height:2.7px;background:#fff;"></div>
<div style="left:1187px;top:1169.6000000000001px;width:79.5px;height:18.999999999999865px;background:linear-gradient(#caa4d2,#7d5d88);box-shadow:inset 0 0 0 1px rgba(0,0,0,0.62);"></div>
<div style="top:1174.6px;line-height:12px;height:12px;white-space:pre;color:#000;font-size:10.8px;left:1126.75px;width:200px;text-align:center;transform:scaleY(0.86);">Transform2</div>
<svg style="left:1262.5px;top:1164.9px;" width="8" height="8" viewBox="0 0 8 8"><circle cx="4" cy="4" r="3.9" fill="#cc5058"/><text x="4" y="6.3" font-size="6.6" font-weight="bold" text-anchor="middle" fill="#f6e0e0">A</text></svg>
<svg style="left:49px;top:852px;overflow:hidden;" width="1892" height="513" viewBox="0 0 1892 513"><path d="M383.4 292.5 L391.861 316.993" stroke="#000" stroke-width="2.2" fill="none"/><path d="M394.8 325.5 L388.648 318.103 L395.075 315.883 Z" fill="#000"/><path d="M397.8 289.5 L397.8 316.5" stroke="#000" stroke-width="2.2" fill="none"/><path d="M397.8 325.5 L394.4 316.5 L401.2 316.5 Z" fill="#000"/><path d="M412 292.5 L403.692 316.977" stroke="#000" stroke-width="2.2" fill="none"/><path d="M400.8 325.5 L400.473 315.885 L406.912 318.07 Z" fill="#000"/><path d="M356 305 L376.284 320.121" stroke="#000" stroke-width="2.2" fill="none"/><path d="M383.5 325.5 L374.252 322.847 L378.316 317.395 Z" fill="#000"/><path d="M365 314.5 L377.532 321.569" stroke="#000" stroke-width="2.2" fill="none"/><path d="M384.5 325.5 L375.96 324.357 L379.104 318.782 Z" fill="#000"/></svg>
<svg style="left:767px;top:999px;" width="86" height="20" viewBox="0 0 86 20"><defs><linearGradient id="vg" x1="0" y1="0" x2="0" y2="1"><stop offset="0" stop-color="#ececec"/><stop offset="1" stop-color="#8e8e8e"/></linearGradient></defs><path d="M6 0.5 H80 L84.5 10 L80 19.5 H6 L1.5 10 Z" fill="url(#vg)" stroke="#222" stroke-width="1"/><path d="M0 6 V14 L-2.5 10 Z" fill="#000" transform="translate(2.5,0)"/></svg>
<div style="top:1004.5px;line-height:12px;height:12px;white-space:pre;color:#000;font-size:10.8px;left:760px;width:100px;text-align:center;transform:scaleY(0.86);">Viewer2</div>
<svg style="left:440.7px;top:1043px;" width="12" height="12" viewBox="0 0 12 12"><defs><radialGradient id="dg" cx="0.4" cy="0.3" r="0.75"><stop offset="0" stop-color="#eaeaea"/><stop offset="1" stop-color="#8c8c8c"/></radialGradient></defs><circle cx="6" cy="6" r="5.3" fill="url(#dg)" stroke="#1a1a1a" stroke-width="1"/></svg>
<svg style="left:1033px;top:1306px;" width="12" height="12" viewBox="0 0 12 12"><defs><radialGradient id="dg" cx="0.4" cy="0.3" r="0.75"><stop offset="0" stop-color="#eaeaea"/><stop offset="1" stop-color="#8c8c8c"/></radialGradient></defs><circle cx="6" cy="6" r="5.3" fill="url(#dg)" stroke="#1a1a1a" stroke-width="1"/></svg>
<div style="top:1213px;line-height:12px;height:12px;white-space:pre;color:#fbc46c;font-size:10.8px;left:639px;width:80px;text-align:center;transform:scaleY(0.86);text-shadow:0 0 1px #000,0 0 1px #000;">A</div>
<div style="top:1238px;line-height:12px;height:12px;white-space:pre;color:#fbc46c;font-size:10.8px;left:584px;width:80px;text-align:center;transform:scaleY(0.86);text-shadow:0 0 1px #000,0 0 1px #000;">B</div>
<div style="top:1284px;line-height:12px;height:12px;white-space:pre;color:#fbc46c;font-size:10.8px;left:639px;width:80px;text-align:center;transform:scaleY(0.86);text-shadow:0 0 1px #000,0 0 1px #000;">B</div>
<div style="top:1309px;line-height:12px;height:12px;white-space:pre;color:#fbc46c;font-size:10.8px;left:694px;width:80px;text-align:center;transform:scaleY(0.86);text-shadow:0 0 1px #000,0 0 1px #000;">A</div>
<div style="top:1355px;line-height:12px;height:12px;white-space:pre;color:#fbc46c;font-size:10.8px;left:639px;width:80px;text-align:center;transform:scaleY(0.86);text-shadow:0 0 1px #000,0 0 1px #000;">B</div>
<div style="top:1015px;line-height:12px;height:12px;white-space:pre;color:#fbc46c;font-size:10.8px;left:824px;width:80px;text-align:center;transform:scaleY(0.86);text-shadow:0 0 1px #000,0 0 1px #000;">1</div>
<div style="top:1118px;line-height:12px;height:12px;white-space:pre;color:#fbc46c;font-size:10.8px;left:388.5px;transform:scaleY(0.86);text-shadow:0 0 1px #000,0 0 1px #000;">BgVecs</div>
<div style="top:1125px;line-height:12px;height:12px;white-space:pre;color:#fbc46c;font-size:10.8px;left:406px;transform:scaleY(0.86);text-shadow:0 0 1px #000,0 0 1px #000;">FgVecs</div>
<div style="top:1113px;line-height:12px;height:12px;white-space:pre;color:#fbc46c;font-size:10.8px;left:448px;transform:scaleY(0.86);text-shadow:0 0 1px #000,0 0 1px #000;">Matte</div>
<div style="top:1124px;line-height:12px;height:12px;white-space:pre;color:#fbc46c;font-size:10.8px;left:443px;transform:scaleY(0.86);text-shadow:0 0 1px #000,0 0 1px #000;">Source</div>
<div style="top:1154px;line-height:12px;height:12px;white-space:pre;color:#fbc46c;font-size:10.8px;left:388.5px;transform:scaleY(0.86);text-shadow:0 0 1px #000,0 0 1px #000;">BgVecs</div>
<div style="top:1161px;line-height:12px;height:12px;white-space:pre;color:#fbc46c;font-size:10.8px;left:406px;transform:scaleY(0.86);text-shadow:0 0 1px #000,0 0 1px #000;">FgVecs</div>
<div style="top:1149px;line-height:12px;height:12px;white-space:pre;color:#fbc46c;font-size:10.8px;left:448px;transform:scaleY(0.86);text-shadow:0 0 1px #000,0 0 1px #000;">Matte</div>
<div style="left:55px;top:1308.5px;width:80px;height:56.5px;background:linear-gradient(#f0f0f0,#9a9a9a);border:1px solid #161616;border-bottom:none;overflow:hidden;"></div>
<div style="left:57px;top:1310.5px;width:76px;height:42.5px;background:#000;"></div>
<div style="left:55px;top:1353px;width:80px;height:12px;overflow:hidden;">
<div style="top:5.5px;line-height:12px;height:12px;white-space:pre;color:#000;font-size:10.8px;left:0px;width:80px;text-align:center;transform:scaleY(0.86);">Read15</div>
</div>
<div style="left:165px;top:1308.5px;width:80px;height:56.5px;background:linear-gradient(#f0f0f0,#9a9a9a);border:1px solid #161616;border-bottom:none;overflow:hidden;"></div>
<div style="left:167px;top:1310.5px;width:76px;height:42.5px;background:#000;"></div>
<div style="left:165px;top:1353px;width:80px;height:12px;overflow:hidden;">
<div style="top:5.5px;line-height:12px;height:12px;white-space:pre;color:#000;font-size:10.8px;left:0px;width:80px;text-align:center;transform:scaleY(0.86);">Read16</div>
</div>
<div style="left:277px;top:1308.5px;width:80px;height:56.5px;background:linear-gradient(#f0f0f0,#9a9a9a);border:1px solid #161616;border-bottom:none;overflow:hidden;"></div>
<div style="left:279px;top:1310.5px;width:76px;height:42.5px;background:#000;"></div>
<div style="left:277px;top:1353px;width:80px;height:12px;overflow:hidden;">
<div style="top:5.5px;line-height:12px;height:12px;white-space:pre;color:#000;font-size:10.8px;left:0px;width:80px;text-align:center;transform:scaleY(0.86);">Read17</div>
</div>
<div style="left:74px;top:1314px;width:34px;height:34px;background:radial-gradient(closest-side,#1e1e1e,#000);"></div>
<div style="left:1656px;top:1288px;width:285px;height:1px;background:#e0e0e0;"></div>
<div style="left:1656px;top:1288px;width:1px;height:77px;background:#e0e0e0;"></div>
<div style="left:1657px;top:1289px;width:4px;height:4px;border:1px solid #e0e0e0;border-top:none;border-left:none;"></div>
<svg style="left:1656px;top:1288px;overflow:hidden;" width="285" height="77" viewBox="0 0 285 77"><rect x="156" y="3" width="2" height="72" fill="#0c0c0c"/><rect x="144" y="14.5" width="13" height="1.6" fill="#0c0c0c"/><rect x="128.5" y="24" width="16" height="1.6" fill="#0c0c0c"/><rect x="128.5" y="24" width="1.6" height="8" fill="#0c0c0c"/><rect x="135.5" y="24" width="1.6" height="8" fill="#0c0c0c"/><rect x="129" y="36" width="28" height="1.6" fill="#0c0c0c"/><rect x="174" y="28" width="2.2" height="15" fill="#c49a5a"/><rect x="184" y="28" width="2.2" height="15" fill="#c49a5a"/><rect x="145" y="50.5" width="12" height="1.4" fill="#2a2020"/><rect x="145" y="60" width="12" height="1.4" fill="#2a2020"/><rect x="158" y="63" width="18" height="1.4" fill="#2a2020"/><rect x="185" y="57" width="1.6" height="10" fill="#0c0c0c"/><rect x="158" y="67" width="28" height="1.6" fill="#0c0c0c"/><rect x="155" y="4" width="4" height="2" fill="#e8e8e8"/><rect x="155" y="9.5" width="4" height="2" fill="#e0d800"/><rect x="155" y="15" width="4" height="2" fill="#e8e8e8"/><rect x="155" y="29" width="4" height="2" fill="#3c5a9a"/><rect x="155" y="43" width="4" height="2" fill="#8ab0f0"/><rect x="155" y="49" width="4" height="2" fill="#d8d8d8"/><rect x="155" y="59" width="4" height="2" fill="#6c80e8"/><rect x="155" y="63" width="4" height="2" fill="#6c80e8"/><rect x="155" y="67" width="4" height="2" fill="#6c80e8"/><rect x="155" y="74" width="4" height="2" fill="#e0d800"/><rect x="155" y="2.5" width="4" height="1.2" fill="#4a8a4a"/><rect x="155" y="13.5" width="4" height="1.2" fill="#4a8a4a"/><rect x="155" y="36" width="4" height="5" fill="#6cd070"/><rect x="155" y="35.2" width="4" height="1" fill="#c03060"/><rect x="142" y="15" width="4" height="2.4" fill="#e8e8e8"/><rect x="142" y="18.4" width="4" height="2" fill="#e0d800"/><rect x="142" y="23.5" width="4" height="1.2" fill="#4a8a4a"/><rect x="142" y="25" width="4" height="2.4" fill="#e8e8e8"/><rect x="127" y="30" width="4" height="1.2" fill="#e8e8e8"/><rect x="127" y="32" width="4" height="2" fill="#7ad880"/><rect x="134" y="30" width="4" height="1.2" fill="#e8e8e8"/><rect x="134" y="32" width="4" height="2" fill="#7ad880"/><rect x="127" y="36" width="4" height="2" fill="#3a8a48"/><rect x="134" y="36" width="4" height="1.6" fill="#4060d8"/><rect x="140" y="36" width="4" height="2" fill="#b8703a"/><rect x="173" y="33" width="4" height="1.4" fill="#e0e0e0"/><rect x="173" y="42" width="4" height="1.2" fill="#8ab0f0"/><rect x="173" y="44" width="4" height="1.2" fill="#8ab0f0"/><rect x="173" y="45.6" width="4" height="4" fill="#e09860"/><rect x="173" y="50" width="4" height="1.2" fill="#f8c060"/><rect x="173" y="53.4" width="4" height="2" fill="#c898d0"/><rect x="173" y="56" width="4" height="1.2" fill="#c898d0"/><rect x="183" y="33" width="4" height="1.4" fill="#e0e0e0"/><rect x="183" y="42" width="4" height="1.2" fill="#8ab0f0"/><rect x="183" y="44" width="4" height="1.2" fill="#8ab0f0"/><rect x="183" y="45.6" width="4" height="4" fill="#e09860"/><rect x="183" y="50" width="4" height="1.2" fill="#f8c060"/><rect x="183" y="53.4" width="4" height="2" fill="#c898d0"/><rect x="183" y="56" width="4" height="1.2" fill="#c898d0"/><rect x="173" y="24.4" width="4" height="1.4" fill="#0c0c0c"/><rect x="173" y="25.8" width="4" height="2" fill="#f0f0f0"/><rect x="183" y="24.4" width="4" height="4" fill="#d8d8d8"/><rect x="183" y="30" width="4" height="1" fill="#e8c060"/><rect x="173" y="59" width="4" height="2" fill="#28c038"/><rect x="174.5" y="63" width="1.4" height="1.4" fill="#f0f0f0"/><rect x="184" y="67" width="1.4" height="1.4" fill="#f0f0f0"/><rect x="143" y="51.5" width="4" height="2" fill="#e09860"/><rect x="143" y="55.2" width="4" height="2" fill="#e09860"/><rect x="143" y="59" width="4" height="1.2" fill="#e09860"/><rect x="162" y="47" width="4" height="1.2" fill="#d8d8d8"/><rect x="103" y="44" width="4" height="4" fill="#d40000"/><rect x="98" y="63" width="4" height="4" fill="#dcdcdc"/><rect x="115" y="63" width="4" height="4" fill="#dcdcdc"/><rect x="120" y="63" width="4" height="2" fill="#0c0c0c"/><rect x="120" y="65" width="4" height="2" fill="#e8e8e8"/><rect x="126.5" y="63.5" width="4" height="1.6" fill="#221818"/><rect x="126.5" y="65.2" width="4" height="1.6" fill="#e8e8e8"/><rect x="131.5" y="63.5" width="4" height="1.6" fill="#221818"/><rect x="131.5" y="65.2" width="4" height="1.6" fill="#e8e8e8"/><rect x="137" y="63.5" width="4" height="1.6" fill="#221818"/><rect x="137" y="65.2" width="4" height="1.6" fill="#e8e8e8"/></svg>
<div style="left:1782px;top:1329px;width:96px;height:25.5px;background:rgba(240,170,170,0.22);border:1px solid #f2b4b4;"></div>
<div style="left:1941px;top:52px;width:4px;height:1314px;background:#323232;"></div>
<div style="left:1942px;top:52px;width:1px;height:1314px;background:#000;"></div>
<div style="left:1943px;top:52px;width:1px;height:1314px;background:#4a4a4a;"></div>
<div style="left:1945px;top:52px;width:615px;height:1314px;background:#323232;"></div>
<div style="left:1944px;top:52px;width:616px;height:28px;background:#262626;"></div>
<div style="left:1947px;top:54px;width:8px;height:9px;background:#a4a4a4;"></div>
<div style="left:1947px;top:63px;width:8px;height:7px;background:#7e7e7e;"></div>
<div style="left:1955px;top:54px;width:8px;height:16px;background:#565656;"></div>
<div style="left:1967px;top:53px;width:112px;height:28px;background:#323232;border:1px solid #3c3c3c;border-bottom:none;border-radius:4px 4px 0 0;"></div>
<div style="top:59px;line-height:16px;height:16px;white-space:pre;left:1982px;">Properties</div>
<div style="left:2050.5px;top:59.5px;width:13px;height:13px;background:#2d2d2d;border-radius:50%;"></div>
<svg style="left:2053.5px;top:62.5px;" width="7" height="7" viewBox="0 0 7 7"><path d="M0.8 0.8 L6.2 6.2 M6.2 0.8 L0.8 6.2" stroke="#787878" stroke-width="1.7"/></svg>
<div style="left:2080px;top:55px;width:172px;height:25px;background:#2a2a2a;border:1px solid #191919;border-bottom:none;border-radius:4px 4px 0 0;"></div>
<div style="top:60px;line-height:16px;height:16px;white-space:pre;left:2094px;">Background Renders</div>
<div style="left:2222.5px;top:60.5px;width:13px;height:13px;background:#3a3a3a;border-radius:50%;"></div>
<svg style="left:2225.5px;top:63.5px;" width="7" height="7" viewBox="0 0 7 7"><path d="M0.8 0.8 L6.2 6.2 M6.2 0.8 L0.8 6.2" stroke="#242424" stroke-width="1.7"/></svg>
<div style="left:1949px;top:84px;width:21px;height:19px;background:#3b3b3b;border:1px solid #222;border-radius:3px;"></div>
<div style="top:86.5px;line-height:16px;height:16px;white-space:pre;left:1945px;width:30px;text-align:center;">10</div>
<svg style="left:1976px;top:86px;" width="14" height="15" viewBox="0 0 14 15"><path d="M7.5 8 V5 A2.6 2.6 0 0 1 12.7 5 V6" stroke="#0a0a0a" stroke-width="1.7" fill="none"/><rect x="0.5" y="7.5" width="9.5" height="7" rx="1" fill="#0a0a0a"/><path d="M5.2 10 V12.4" stroke="#444" stroke-width="1.2"/></svg>
<svg style="left:1995px;top:88px;" width="15" height="12" viewBox="0 0 15 12"><path d="M0.5 1.6 H8 M0.5 6 H8 M0.5 10.4 H8" stroke="#0c0c0c" stroke-width="2"/><path d="M1 2.6 H8 M1 7 H8 M1 11.4 H8" stroke="#9a9a9a" stroke-width="0.7"/><path d="M6.5 1.5 L13.5 10.5 M13.5 1.5 L6.5 10.5" stroke="#ececec" stroke-width="2"/></svg>
<div style="left:2543px;top:109px;width:15px;height:1254px;background:#2e2e2e;"></div>
<div style="left:2543px;top:109px;width:15px;height:14px;background:#4a4a4a;border:1px solid #222;border-radius:4px 4px 0 0;"></div>
<svg style="left:2547px;top:114px;" width="7" height="5" viewBox="0 0 7 5"><path d="M0 4.5 H7 L3.5 0.5 Z" fill="#d0d0d0"/></svg>
<div style="left:2542.5px;top:123.5px;width:15.5px;height:908px;background:linear-gradient(90deg,#505050,#4e4e4e 60%,#484848);border:1px solid #1e1e1e;border-radius:2px;"></div>
<svg style="left:2546px;top:568px;" width="9" height="21" viewBox="0 0 9 21"><rect x="1" y="0" width="1" height="1" fill="#2e2e2e"/><rect x="1" y="3" width="1" height="1" fill="#2e2e2e"/><rect x="1" y="6" width="1" height="1" fill="#2e2e2e"/><rect x="1" y="9" width="1" height="1" fill="#2e2e2e"/><rect x="1" y="12" width="1" height="1" fill="#2e2e2e"/><rect x="1" y="15" width="1" height="1" fill="#2e2e2e"/><rect x="1" y="18" width="1" height="1" fill="#2e2e2e"/><rect x="4" y="0" width="1" height="1" fill="#2e2e2e"/><rect x="4" y="3" width="1" height="1" fill="#2e2e2e"/><rect x="4" y="6" width="1" height="1" fill="#2e2e2e"/><rect x="4" y="9" width="1" height="1" fill="#2e2e2e"/><rect x="4" y="12" width="1" height="1" fill="#2e2e2e"/><rect x="4" y="15" width="1" height="1" fill="#2e2e2e"/><rect x="4" y="18" width="1" height="1" fill="#2e2e2e"/><rect x="7" y="0" width="1" height="1" fill="#2e2e2e"/><rect x="7" y="3" width="1" height="1" fill="#2e2e2e"/><rect x="7" y="6" width="1" height="1" fill="#2e2e2e"/><rect x="7" y="9" width="1" height="1" fill="#2e2e2e"/><rect x="7" y="12" width="1" height="1" fill="#2e2e2e"/><rect x="7" y="15" width="1" height="1" fill="#2e2e2e"/><rect x="7" y="18" width="1" height="1" fill="#2e2e2e"/></svg>
<div style="left:2543px;top:1331px;width:15px;height:14px;background:#4a4a4a;border:1px solid #222;border-radius:3px;"></div>
<svg style="left:2546px;top:1335px;" width="9" height="6" viewBox="0 0 9 6"><path d="M0 5.5 H9 L4.5 0.5 Z" fill="#d0d0d0"/></svg>
<div style="left:2543px;top:1347px;width:15px;height:15px;background:#4a4a4a;border:1px solid #222;border-radius:3px;"></div>
<svg style="left:2546px;top:1352px;" width="9" height="6" viewBox="0 0 9 6"><path d="M0 0.5 H9 L4.5 5.5 Z" fill="#d0d0d0"/></svg>
<div style="left:1950px;top:110px;width:589px;height:2px;background:#78a8f6;"></div>
<div style="left:1950px;top:112px;width:589px;height:24px;background:linear-gradient(#474747,#303030);border:1px solid #1c1c1c;border-top:none;"></div>
<svg style="left:1956px;top:119px;" width="10" height="8" viewBox="0 0 10 8"><path d="M0 0 H10 L5 7.5 Z" fill="#050505"/></svg>
<div style="left:1974px;top:114px;width:69px;height:20px;background:linear-gradient(#4c4c4c,#424242);border:1px solid #212121;border-radius:4px;box-shadow:inset 0 1px 0 #585858;"></div>
<div style="left:1996px;top:115px;width:1px;height:18px;background:#242424;"></div>
<div style="left:2019px;top:115px;width:1px;height:18px;background:#242424;"></div>
<svg style="left:1979px;top:118px;" width="13" height="13" viewBox="0 0 13 13"><circle cx="6.5" cy="6.5" r="3.9" fill="none" stroke="#0a0a0a" stroke-width="2.4"/><circle cx="6.5" cy="6.5" r="3" fill="none" stroke="#d8d8d8" stroke-width="1"/><circle cx="6.5" cy="6.5" r="1.4" fill="#0a0a0a"/></svg>
<svg style="left:2002px;top:117px;" width="13" height="12" viewBox="0 0 13 12"><path d="M3.5 0.5 L6 4.5 M9.5 0.5 L7 4.5" stroke="#0a0a0a" stroke-width="1"/><rect x="0.5" y="4.5" width="12" height="5" rx="1" fill="#0a0a0a"/><path d="M5 9.5 L6.5 11 L8 9.5" fill="#0a0a0a"/></svg>
<svg style="left:2025px;top:116px;" width="11" height="15" viewBox="0 0 11 15"><path d="M2.2 0.4 Q-0.6 4.6 3.4 8 V14.6 H7.6 V8 Q11.6 4.6 8.8 0.4 L7.6 4.4 H3.4 Z" fill="#050505"/></svg>
<div style="left:2053px;top:114px;width:293px;height:20px;background:#3a3a3a;border:1px solid #232323;border-radius:4px;"></div>
<div style="top:116.5px;line-height:16px;height:16px;white-space:pre;left:2057.5px;">Grade3</div>
<div style="left:2356px;top:114px;width:115px;height:20px;background:linear-gradient(#4c4c4c,#424242);border:1px solid #212121;border-radius:4px;box-shadow:inset 0 1px 0 #585858;"></div>
<div style="left:2378px;top:115px;width:1px;height:18px;background:#242424;"></div>
<div style="left:2401px;top:115px;width:1px;height:18px;background:#242424;"></div>
<div style="left:2424px;top:115px;width:1px;height:18px;background:#242424;"></div>
<div style="left:2447px;top:115px;width:1px;height:18px;background:#242424;"></div>
<svg style="left:2360px;top:118px;" width="12" height="11" viewBox="0 0 12 11"><rect x="0.5" y="0.5" width="11" height="10" fill="#78a8f6" stroke="#0a0a0a" stroke-width="1"/><path d="M1 10 L11 1" stroke="#333" stroke-width="1.2"/></svg>
<svg style="left:2383px;top:118px;" width="12" height="11" viewBox="0 0 12 11"><rect x="0.5" y="0.5" width="11" height="10" fill="#e0e0e0" stroke="#0a0a0a" stroke-width="1"/><path d="M1 10 L11 1" stroke="#333" stroke-width="1.2"/></svg>
<svg style="left:2405px;top:119px;" width="16" height="9" viewBox="0 0 16 9"><path d="M0.5 8.5 V2.5 L2.6 4 Q8.5 -1.5 15 7.5 Q9.5 3.6 5.4 6 L7.4 8.5 Z" fill="#0a0a0a"/></svg>
<svg style="left:2428px;top:119px;" width="16" height="9" viewBox="0 0 16 9"><path d="M15.5 8.5 V2.5 L13.4 4 Q7.5 -1.5 1 7.5 Q6.5 3.6 10.6 6 L8.6 8.5 Z" fill="#3c3c3c"/></svg>
<svg style="left:2452px;top:117px;" width="14" height="13" viewBox="0 0 14 13"><path d="M2.5 8.5 V2 H11.5 V6" stroke="#0a0a0a" stroke-width="2.4" fill="none"/><path d="M2.5 8 Q2.5 10 6 10 H7" stroke="#0a0a0a" stroke-width="2.2" fill="none"/><path d="M6.4 6.4 L11 10 L6.4 13.4 Z" fill="#0a0a0a"/></svg>
<div style="top:116px;line-height:16px;height:16px;white-space:pre;color:#0a0a0a;font-size:13px;left:2480px;width:20px;text-align:center;font-weight:bold;">?</div>
<svg style="left:2507px;top:119px;" width="9" height="9" viewBox="0 0 9 9"><path d="M2.5 2.5 V0.8 H8.2 V5.5 H6.5" stroke="#0a0a0a" stroke-width="1.5" fill="none"/><rect x="0.8" y="3.2" width="5.4" height="5" fill="none" stroke="#0a0a0a" stroke-width="1.5"/></svg>
<svg style="left:2525px;top:120px;" width="9" height="8" viewBox="0 0 9 8"><path d="M0.8 0.5 L8.2 7.5 M8.2 0.5 L0.8 7.5" stroke="#0a0a0a" stroke-width="1.7"/></svg>
<div style="left:1950px;top:158px;width:589px;height:305px;background:#323232;border:1px solid #212121;border-radius:0 4px 4px 4px;"></div>
<div style="left:2015px;top:141px;width:58px;height:17px;background:#2a2a2a;border:1px solid #1c1c1c;border-bottom:none;border-radius:4px 4px 0 0;"></div>
<div style="top:142px;line-height:16px;height:16px;white-space:pre;left:2030px;">Node</div>
<div style="left:1950px;top:138px;width:65px;height:21px;background:#323232;border:1px solid #212121;border-bottom:none;border-radius:5px 5px 0 0;"></div>
<div style="top:141px;line-height:16px;height:16px;white-space:pre;left:1965px;">Grade</div>
<svg style="left:2527px;top:452px;" width="9" height="9" viewBox="0 0 9 9"><path d="M0 9 L9 0 M3 9 L9 3 M6 9 L9 6" stroke="#5a5a5a" stroke-width="0.8" stroke-dasharray="1 1"/></svg>
<div style="top:171px;line-height:16px;height:16px;white-space:pre;right:510px;text-align:right;">channels</div>
<div style="left:2056px;top:169px;width:123px;height:18px;background:linear-gradient(#505050,#444);border:1px solid #222;border-radius:4px;box-shadow:inset 0 1px 0 #5c5c5c;"></div>
<div style="top:170px;line-height:16px;height:16px;white-space:pre;left:2061px;">rgb</div>
<svg style="left:2163px;top:175.0px;" width="8" height="5" viewBox="0 0 8 5"><path d="M0 0 H8 L4.0 5 Z" fill="#d0d0d0"/></svg>
<div style="left:2185px;top:170px;width:16px;height:16px;background:#d23c3c;border:1px solid #232323;border-radius:2px;"></div>
<svg style="left:2187px;top:172px;" width="12" height="12" viewBox="0 0 12 12"><path d="M1.2 1.2 L10.8 10.8 M10.8 1.2 L1.2 10.8" stroke="#e2e2e2" stroke-width="2.7" fill="none"/></svg>
<div style="top:170.5px;line-height:16px;height:16px;white-space:pre;left:2207px;">red</div>
<div style="left:2238px;top:170px;width:16px;height:16px;background:#36c236;border:1px solid #232323;border-radius:2px;"></div>
<svg style="left:2240px;top:172px;" width="12" height="12" viewBox="0 0 12 12"><path d="M1.2 1.2 L10.8 10.8 M10.8 1.2 L1.2 10.8" stroke="#e2e2e2" stroke-width="2.7" fill="none"/></svg>
<div style="top:170.5px;line-height:16px;height:16px;white-space:pre;left:2260px;">green</div>
<div style="left:2305px;top:170px;width:16px;height:16px;background:#3838d0;border:1px solid #232323;border-radius:2px;"></div>
<svg style="left:2307px;top:172px;" width="12" height="12" viewBox="0 0 12 12"><path d="M1.2 1.2 L10.8 10.8 M10.8 1.2 L1.2 10.8" stroke="#e2e2e2" stroke-width="2.7" fill="none"/></svg>
<div style="top:170.5px;line-height:16px;height:16px;white-space:pre;left:2327px;">blue</div>
<div style="left:2363px;top:170px;width:15px;height:15px;background:#3d3d3d;border:1px solid #232323;border-radius:2px;"></div>
<div style="left:2382px;top:169px;width:122px;height:18px;background:linear-gradient(#505050,#444);border:1px solid #222;border-radius:4px;box-shadow:inset 0 1px 0 #5c5c5c;"></div>
<div style="top:170px;line-height:16px;height:16px;white-space:pre;left:2387px;">none</div>
<svg style="left:2488px;top:175.0px;" width="8" height="5" viewBox="0 0 8 5"><path d="M0 0 H8 L4.0 5 Z" fill="#d0d0d0"/></svg>
<div style="left:2510px;top:170px;width:17px;height:15px;background:linear-gradient(#4c4c4c,#424242);border:1px solid #212121;border-radius:4px;box-shadow:inset 0 1px 0 #585858;"></div>
<svg style="left:2515px;top:176px;" width="7" height="5" viewBox="0 0 7 5"><path d="M0 1 H7 M0 4 H7" stroke="#d0d0d0" stroke-width="0.9"/></svg>
<div style="top:191px;line-height:16px;height:16px;white-space:pre;right:510px;text-align:right;">blackpoint</div>
<div style="left:2056px;top:190px;width:74px;height:20px;background:#3b3b3b;border:1px solid #222;border-radius:3px;box-shadow:inset 0 1px 0 #2c2c2c;"></div>
<div style="top:192.5px;line-height:16px;height:16px;white-space:pre;left:2060px;">0</div>
<svg style="left:2133px;top:188px;" width="317" height="13" viewBox="0 0 317 13"><path d="M0.5 2 V10" stroke="#1b1b1b" stroke-width="1"/><path d="M8.5 5 V10" stroke="#1b1b1b" stroke-width="1"/><path d="M16.5 5 V10" stroke="#1b1b1b" stroke-width="1"/><path d="M25.5 5 V10" stroke="#1b1b1b" stroke-width="1"/><path d="M36.5 5 V10" stroke="#1b1b1b" stroke-width="1"/><path d="M47.5 5 V10" stroke="#1b1b1b" stroke-width="1"/><path d="M57.5 5 V10" stroke="#1b1b1b" stroke-width="1"/><path d="M72.5 5 V10" stroke="#1b1b1b" stroke-width="1"/><path d="M87.5 5 V10" stroke="#1b1b1b" stroke-width="1"/><path d="M107.5 2 V10" stroke="#1b1b1b" stroke-width="1"/><path d="M120.5 5 V10" stroke="#1b1b1b" stroke-width="1"/><path d="M132.5 5 V10" stroke="#1b1b1b" stroke-width="1"/><path d="M141.5 5 V10" stroke="#1b1b1b" stroke-width="1"/><path d="M149.5 5 V10" stroke="#1b1b1b" stroke-width="1"/><path d="M157.5 2 V10" stroke="#1b1b1b" stroke-width="1"/><path d="M165.5 5 V10" stroke="#1b1b1b" stroke-width="1"/><path d="M173.5 5 V10" stroke="#1b1b1b" stroke-width="1"/><path d="M183.5 5 V10" stroke="#1b1b1b" stroke-width="1"/><path d="M195.5 5 V10" stroke="#1b1b1b" stroke-width="1"/><path d="M208.5 2 V10" stroke="#1b1b1b" stroke-width="1"/><path d="M228.5 5 V10" stroke="#1b1b1b" stroke-width="1"/><path d="M243.5 5 V10" stroke="#1b1b1b" stroke-width="1"/><path d="M257.5 5 V10" stroke="#1b1b1b" stroke-width="1"/><path d="M268.5 5 V10" stroke="#1b1b1b" stroke-width="1"/><path d="M279.5 5 V10" stroke="#1b1b1b" stroke-width="1"/><path d="M289.5 5 V10" stroke="#1b1b1b" stroke-width="1"/><path d="M297.5 5 V10" stroke="#1b1b1b" stroke-width="1"/><path d="M304.5 5 V10" stroke="#1b1b1b" stroke-width="1"/><path d="M310.5 5 V10" stroke="#1b1b1b" stroke-width="1"/><path d="M316.5 2 V10" stroke="#1b1b1b" stroke-width="1"/><rect x="0" y="10" width="317" height="1" fill="#080808"/><rect x="0" y="11" width="317" height="1" fill="#5e5e5e"/><rect x="0" y="12" width="317" height="1" fill="#080808"/></svg>
<div style="top:200.3px;line-height:12px;height:12px;white-space:pre;color:#0b0b0b;font-size:10.9px;left:2133px;transform:scaleY(0.8);-webkit-text-stroke:0.3px #0b0b0b;">-1</div>
<div style="top:200.3px;line-height:12px;height:12px;white-space:pre;color:#0b0b0b;font-size:10.9px;left:2159px;transform:scaleY(0.8);-webkit-text-stroke:0.3px #0b0b0b;">-0.7</div>
<div style="top:200.3px;line-height:12px;height:12px;white-space:pre;color:#0b0b0b;font-size:10.9px;left:2191px;transform:scaleY(0.8);-webkit-text-stroke:0.3px #0b0b0b;">-0.4</div>
<div style="top:200.3px;line-height:12px;height:12px;white-space:pre;color:#0b0b0b;font-size:10.9px;left:2240px;transform:scaleY(0.8);-webkit-text-stroke:0.3px #0b0b0b;">-0.1</div>
<div style="top:200.3px;line-height:12px;height:12px;white-space:pre;color:#0b0b0b;font-size:10.9px;left:2291px;transform:scaleY(0.8);-webkit-text-stroke:0.3px #0b0b0b;">0</div>
<div style="top:200.3px;line-height:12px;height:12px;white-space:pre;color:#0b0b0b;font-size:10.9px;left:2341px;transform:scaleY(0.8);-webkit-text-stroke:0.3px #0b0b0b;">0.1</div>
<div style="top:200.3px;line-height:12px;height:12px;white-space:pre;color:#0b0b0b;font-size:10.9px;left:2391px;transform:scaleY(0.8);-webkit-text-stroke:0.3px #0b0b0b;">0.4</div>
<div style="top:200.3px;line-height:12px;height:12px;white-space:pre;color:#0b0b0b;font-size:10.9px;left:2423px;transform:scaleY(0.8);-webkit-text-stroke:0.3px #0b0b0b;">0.7</div>
<div style="top:200.3px;line-height:12px;height:12px;white-space:pre;color:#0b0b0b;font-size:10.9px;left:2444px;transform:scaleY(0.8);-webkit-text-stroke:0.3px #0b0b0b;">1</div>
<div style="left:2288px;top:193.5px;width:5px;height:9px;background:#85723a;border:1px solid #26200c;"></div>
<div style="left:2452px;top:190px;width:76px;height:20px;background:linear-gradient(#4c4c4c,#424242);border:1px solid #212121;border-radius:4px;box-shadow:inset 0 1px 0 #585858;"></div>
<div style="left:2470px;top:191px;width:1px;height:18px;background:#242424;"></div>
<div style="left:2489px;top:191px;width:1px;height:18px;background:#242424;"></div>
<div style="left:2508px;top:191px;width:1px;height:18px;background:#242424;"></div>
<div style="left:2454px;top:194px;width:13px;height:13px;background:#000;border:1px solid #000;"></div>
<div style="left:2473.5px;top:194px;width:12px;height:12px;background:conic-gradient(from 20deg,#ff60c0,#ff5050,#ffb040,#e8ff40,#50ff50,#40ffd0,#40b0ff,#6060ff,#c050ff,#ff60c0);border-radius:50%;"></div>
<div style="left:2473.5px;top:194px;width:12px;height:12px;background:radial-gradient(closest-side,rgba(238,238,238,0.98),rgba(238,238,238,0.55) 55%,rgba(238,238,238,0.1) 100%);border-radius:50%;"></div>
<div style="top:192.5px;line-height:16px;height:16px;white-space:pre;left:2488px;width:20px;text-align:center;">4</div>
<svg style="left:2511px;top:193px;" width="14" height="13" viewBox="0 0 14 13"><path d="M0.8 12 C3 4 5 3.4 6.6 6.4 C8.6 10 10.6 9 13.2 0.8" stroke="#1c1c1c" stroke-width="1.9" fill="none"/></svg>
<div style="top:213px;line-height:16px;height:16px;white-space:pre;right:510px;text-align:right;">whitepoint</div>
<div style="left:2056px;top:212px;width:74px;height:20px;background:#3b3b3b;border:1px solid #222;border-radius:3px;box-shadow:inset 0 1px 0 #2c2c2c;"></div>
<div style="top:214.5px;line-height:16px;height:16px;white-space:pre;left:2060px;">1</div>
<svg style="left:2133px;top:210px;" width="317" height="13" viewBox="0 0 317 13"><path d="M0.5 2 V10" stroke="#1b1b1b" stroke-width="1"/><path d="M15.5 5 V10" stroke="#1b1b1b" stroke-width="1"/><path d="M27.5 5 V10" stroke="#1b1b1b" stroke-width="1"/><path d="M37.5 5 V10" stroke="#1b1b1b" stroke-width="1"/><path d="M45.5 5 V10" stroke="#1b1b1b" stroke-width="1"/><path d="M50.5 2 V10" stroke="#1b1b1b" stroke-width="1"/><path d="M65.5 5 V10" stroke="#1b1b1b" stroke-width="1"/><path d="M80.5 5 V10" stroke="#1b1b1b" stroke-width="1"/><path d="M92.5 5 V10" stroke="#1b1b1b" stroke-width="1"/><path d="M100.5 5 V10" stroke="#1b1b1b" stroke-width="1"/><path d="M112.5 5 V10" stroke="#1b1b1b" stroke-width="1"/><path d="M122.5 5 V10" stroke="#1b1b1b" stroke-width="1"/><path d="M132.5 5 V10" stroke="#1b1b1b" stroke-width="1"/><path d="M141.5 5 V10" stroke="#1b1b1b" stroke-width="1"/><path d="M149.5 5 V10" stroke="#1b1b1b" stroke-width="1"/><path d="M157.5 2 V10" stroke="#1b1b1b" stroke-width="1"/><path d="M190.5 5 V10" stroke="#1b1b1b" stroke-width="1"/><path d="M222.5 2 V10" stroke="#1b1b1b" stroke-width="1"/><path d="M248.5 5 V10" stroke="#1b1b1b" stroke-width="1"/><path d="M272.5 2 V10" stroke="#1b1b1b" stroke-width="1"/><path d="M292.5 5 V10" stroke="#1b1b1b" stroke-width="1"/><path d="M316.5 2 V10" stroke="#1b1b1b" stroke-width="1"/><rect x="0" y="10" width="317" height="1" fill="#080808"/><rect x="0" y="11" width="317" height="1" fill="#5e5e5e"/><rect x="0" y="12" width="317" height="1" fill="#080808"/></svg>
<div style="top:222.3px;line-height:12px;height:12px;white-space:pre;color:#0b0b0b;font-size:10.9px;left:2133px;transform:scaleY(0.8);-webkit-text-stroke:0.3px #0b0b0b;">0</div>
<div style="top:222.3px;line-height:12px;height:12px;white-space:pre;color:#0b0b0b;font-size:10.9px;left:2183px;transform:scaleY(0.8);-webkit-text-stroke:0.3px #0b0b0b;">0.1</div>
<div style="top:222.3px;line-height:12px;height:12px;white-space:pre;color:#0b0b0b;font-size:10.9px;left:2233px;transform:scaleY(0.8);-webkit-text-stroke:0.3px #0b0b0b;">0.4</div>
<div style="top:222.3px;line-height:12px;height:12px;white-space:pre;color:#0b0b0b;font-size:10.9px;left:2265px;transform:scaleY(0.8);-webkit-text-stroke:0.3px #0b0b0b;">0.7</div>
<div style="top:222.3px;line-height:12px;height:12px;white-space:pre;color:#0b0b0b;font-size:10.9px;left:2291px;transform:scaleY(0.8);-webkit-text-stroke:0.3px #0b0b0b;">1</div>
<div style="top:222.3px;line-height:12px;height:12px;white-space:pre;color:#0b0b0b;font-size:10.9px;left:2355px;transform:scaleY(0.8);-webkit-text-stroke:0.3px #0b0b0b;">2</div>
<div style="top:222.3px;line-height:12px;height:12px;white-space:pre;color:#0b0b0b;font-size:10.9px;left:2405px;transform:scaleY(0.8);-webkit-text-stroke:0.3px #0b0b0b;">3</div>
<div style="top:222.3px;line-height:12px;height:12px;white-space:pre;color:#0b0b0b;font-size:10.9px;left:2443px;transform:scaleY(0.8);-webkit-text-stroke:0.3px #0b0b0b;">4</div>
<div style="left:2288px;top:215.5px;width:5px;height:9px;background:#85723a;border:1px solid #26200c;"></div>
<div style="left:2452px;top:212px;width:76px;height:20px;background:linear-gradient(#4c4c4c,#424242);border:1px solid #212121;border-radius:4px;box-shadow:inset 0 1px 0 #585858;"></div>
<div style="left:2470px;top:213px;width:1px;height:18px;background:#242424;"></div>
<div style="left:2489px;top:213px;width:1px;height:18px;background:#242424;"></div>
<div style="left:2508px;top:213px;width:1px;height:18px;background:#242424;"></div>
<div style="left:2454px;top:216px;width:13px;height:13px;background:#fff;border:1px solid #000;"></div>
<div style="left:2473.5px;top:216px;width:12px;height:12px;background:conic-gradient(from 20deg,#ff60c0,#ff5050,#ffb040,#e8ff40,#50ff50,#40ffd0,#40b0ff,#6060ff,#c050ff,#ff60c0);border-radius:50%;"></div>
<div style="left:2473.5px;top:216px;width:12px;height:12px;background:radial-gradient(closest-side,rgba(238,238,238,0.98),rgba(238,238,238,0.55) 55%,rgba(238,238,238,0.1) 100%);border-radius:50%;"></div>
<div style="top:214.5px;line-height:16px;height:16px;white-space:pre;left:2488px;width:20px;text-align:center;">4</div>
<svg style="left:2511px;top:215px;" width="14" height="13" viewBox="0 0 14 13"><path d="M0.8 12 C3 4 5 3.4 6.6 6.4 C8.6 10 10.6 9 13.2 0.8" stroke="#1c1c1c" stroke-width="1.9" fill="none"/></svg>
<div style="top:235px;line-height:16px;height:16px;white-space:pre;right:510px;text-align:right;">lift</div>
<div style="left:2056px;top:234px;width:74px;height:20px;background:#3b3b3b;border:1px solid #222;border-radius:3px;box-shadow:inset 0 1px 0 #2c2c2c;"></div>
<div style="top:236.5px;line-height:16px;height:16px;white-space:pre;left:2060px;">0</div>
<svg style="left:2133px;top:232px;" width="317" height="13" viewBox="0 0 317 13"><path d="M0.5 2 V10" stroke="#1b1b1b" stroke-width="1"/><path d="M8.5 5 V10" stroke="#1b1b1b" stroke-width="1"/><path d="M16.5 5 V10" stroke="#1b1b1b" stroke-width="1"/><path d="M25.5 5 V10" stroke="#1b1b1b" stroke-width="1"/><path d="M36.5 5 V10" stroke="#1b1b1b" stroke-width="1"/><path d="M47.5 5 V10" stroke="#1b1b1b" stroke-width="1"/><path d="M57.5 5 V10" stroke="#1b1b1b" stroke-width="1"/><path d="M72.5 5 V10" stroke="#1b1b1b" stroke-width="1"/><path d="M87.5 5 V10" stroke="#1b1b1b" stroke-width="1"/><path d="M107.5 2 V10" stroke="#1b1b1b" stroke-width="1"/><path d="M120.5 5 V10" stroke="#1b1b1b" stroke-width="1"/><path d="M132.5 5 V10" stroke="#1b1b1b" stroke-width="1"/><path d="M141.5 5 V10" stroke="#1b1b1b" stroke-width="1"/><path d="M149.5 5 V10" stroke="#1b1b1b" stroke-width="1"/><path d="M157.5 2 V10" stroke="#1b1b1b" stroke-width="1"/><path d="M165.5 5 V10" stroke="#1b1b1b" stroke-width="1"/><path d="M173.5 5 V10" stroke="#1b1b1b" stroke-width="1"/><path d="M183.5 5 V10" stroke="#1b1b1b" stroke-width="1"/><path d="M195.5 5 V10" stroke="#1b1b1b" stroke-width="1"/><path d="M208.5 2 V10" stroke="#1b1b1b" stroke-width="1"/><path d="M228.5 5 V10" stroke="#1b1b1b" stroke-width="1"/><path d="M243.5 5 V10" stroke="#1b1b1b" stroke-width="1"/><path d="M257.5 5 V10" stroke="#1b1b1b" stroke-width="1"/><path d="M268.5 5 V10" stroke="#1b1b1b" stroke-width="1"/><path d="M279.5 5 V10" stroke="#1b1b1b" stroke-width="1"/><path d="M289.5 5 V10" stroke="#1b1b1b" stroke-width="1"/><path d="M297.5 5 V10" stroke="#1b1b1b" stroke-width="1"/><path d="M304.5 5 V10" stroke="#1b1b1b" stroke-width="1"/><path d="M310.5 5 V10" stroke="#1b1b1b" stroke-width="1"/><path d="M316.5 2 V10" stroke="#1b1b1b" stroke-width="1"/><rect x="0" y="10" width="317" height="1" fill="#080808"/><rect x="0" y="11" width="317" height="1" fill="#5e5e5e"/><rect x="0" y="12" width="317" height="1" fill="#080808"/></svg>
<div style="top:244.3px;line-height:12px;height:12px;white-space:pre;color:#0b0b0b;font-size:10.9px;left:2133px;transform:scaleY(0.8);-webkit-text-stroke:0.3px #0b0b0b;">-1</div>
<div style="top:244.3px;line-height:12px;height:12px;white-space:pre;color:#0b0b0b;font-size:10.9px;left:2159px;transform:scaleY(0.8);-webkit-text-stroke:0.3px #0b0b0b;">-0.7</div>
<div style="top:244.3px;line-height:12px;height:12px;white-space:pre;color:#0b0b0b;font-size:10.9px;left:2191px;transform:scaleY(0.8);-webkit-text-stroke:0.3px #0b0b0b;">-0.4</div>
<div style="top:244.3px;line-height:12px;height:12px;white-space:pre;color:#0b0b0b;font-size:10.9px;left:2240px;transform:scaleY(0.8);-webkit-text-stroke:0.3px #0b0b0b;">-0.1</div>
<div style="top:244.3px;line-height:12px;height:12px;white-space:pre;color:#0b0b0b;font-size:10.9px;left:2291px;transform:scaleY(0.8);-webkit-text-stroke:0.3px #0b0b0b;">0</div>
<div style="top:244.3px;line-height:12px;height:12px;white-space:pre;color:#0b0b0b;font-size:10.9px;left:2341px;transform:scaleY(0.8);-webkit-text-stroke:0.3px #0b0b0b;">0.1</div>
<div style="top:244.3px;line-height:12px;height:12px;white-space:pre;color:#0b0b0b;font-size:10.9px;left:2391px;transform:scaleY(0.8);-webkit-text-stroke:0.3px #0b0b0b;">0.4</div>
<div style="top:244.3px;line-height:12px;height:12px;white-space:pre;color:#0b0b0b;font-size:10.9px;left:2423px;transform:scaleY(0.8);-webkit-text-stroke:0.3px #0b0b0b;">0.7</div>
<div style="top:244.3px;line-height:12px;height:12px;white-space:pre;color:#0b0b0b;font-size:10.9px;left:2444px;transform:scaleY(0.8);-webkit-text-stroke:0.3px #0b0b0b;">1</div>
<div style="left:2288px;top:237.5px;width:5px;height:9px;background:#85723a;border:1px solid #26200c;"></div>
<div style="left:2452px;top:234px;width:76px;height:20px;background:linear-gradient(#4c4c4c,#424242);border:1px solid #212121;border-radius:4px;box-shadow:inset 0 1px 0 #585858;"></div>
<div style="left:2470px;top:235px;width:1px;height:18px;background:#242424;"></div>
<div style="left:2489px;top:235px;width:1px;height:18px;background:#242424;"></div>
<div style="left:2508px;top:235px;width:1px;height:18px;background:#242424;"></div>
<div style="left:2454px;top:238px;width:13px;height:13px;background:#000;border:1px solid #000;"></div>
<div style="left:2473.5px;top:238px;width:12px;height:12px;background:conic-gradient(from 20deg,#ff60c0,#ff5050,#ffb040,#e8ff40,#50ff50,#40ffd0,#40b0ff,#6060ff,#c050ff,#ff60c0);border-radius:50%;"></div>
<div style="left:2473.5px;top:238px;width:12px;height:12px;background:radial-gradient(closest-side,rgba(238,238,238,0.98),rgba(238,238,238,0.55) 55%,rgba(238,238,238,0.1) 100%);border-radius:50%;"></div>
<div style="top:236.5px;line-height:16px;height:16px;white-space:pre;left:2488px;width:20px;text-align:center;">4</div>
<svg style="left:2511px;top:237px;" width="14" height="13" viewBox="0 0 14 13"><path d="M0.8 12 C3 4 5 3.4 6.6 6.4 C8.6 10 10.6 9 13.2 0.8" stroke="#1c1c1c" stroke-width="1.9" fill="none"/></svg>
<div style="top:257px;line-height:16px;height:16px;white-space:pre;right:510px;text-align:right;">gain</div>
<div style="left:2056px;top:256px;width:74px;height:20px;background:#3b3b3b;border:1px solid #222;border-radius:3px;box-shadow:inset 0 1px 0 #2c2c2c;"></div>
<div style="top:258.5px;line-height:16px;height:16px;white-space:pre;left:2060px;">0.31</div>
<svg style="left:2133px;top:254px;" width="317" height="13" viewBox="0 0 317 13"><path d="M0.5 2 V10" stroke="#1b1b1b" stroke-width="1"/><path d="M15.5 5 V10" stroke="#1b1b1b" stroke-width="1"/><path d="M27.5 5 V10" stroke="#1b1b1b" stroke-width="1"/><path d="M37.5 5 V10" stroke="#1b1b1b" stroke-width="1"/><path d="M45.5 5 V10" stroke="#1b1b1b" stroke-width="1"/><path d="M50.5 2 V10" stroke="#1b1b1b" stroke-width="1"/><path d="M65.5 5 V10" stroke="#1b1b1b" stroke-width="1"/><path d="M80.5 5 V10" stroke="#1b1b1b" stroke-width="1"/><path d="M92.5 5 V10" stroke="#1b1b1b" stroke-width="1"/><path d="M100.5 5 V10" stroke="#1b1b1b" stroke-width="1"/><path d="M112.5 5 V10" stroke="#1b1b1b" stroke-width="1"/><path d="M122.5 5 V10" stroke="#1b1b1b" stroke-width="1"/><path d="M132.5 5 V10" stroke="#1b1b1b" stroke-width="1"/><path d="M141.5 5 V10" stroke="#1b1b1b" stroke-width="1"/><path d="M149.5 5 V10" stroke="#1b1b1b" stroke-width="1"/><path d="M157.5 2 V10" stroke="#1b1b1b" stroke-width="1"/><path d="M190.5 5 V10" stroke="#1b1b1b" stroke-width="1"/><path d="M222.5 2 V10" stroke="#1b1b1b" stroke-width="1"/><path d="M248.5 5 V10" stroke="#1b1b1b" stroke-width="1"/><path d="M272.5 2 V10" stroke="#1b1b1b" stroke-width="1"/><path d="M292.5 5 V10" stroke="#1b1b1b" stroke-width="1"/><path d="M316.5 2 V10" stroke="#1b1b1b" stroke-width="1"/><rect x="0" y="10" width="317" height="1" fill="#080808"/><rect x="0" y="11" width="317" height="1" fill="#5e5e5e"/><rect x="0" y="12" width="317" height="1" fill="#080808"/></svg>
<div style="top:266.3px;line-height:12px;height:12px;white-space:pre;color:#0b0b0b;font-size:10.9px;left:2133px;transform:scaleY(0.8);-webkit-text-stroke:0.3px #0b0b0b;">0</div>
<div style="top:266.3px;line-height:12px;height:12px;white-space:pre;color:#0b0b0b;font-size:10.9px;left:2183px;transform:scaleY(0.8);-webkit-text-stroke:0.3px #0b0b0b;">0.1</div>
<div style="top:266.3px;line-height:12px;height:12px;white-space:pre;color:#0b0b0b;font-size:10.9px;left:2233px;transform:scaleY(0.8);-webkit-text-stroke:0.3px #0b0b0b;">0.4</div>
<div style="top:266.3px;line-height:12px;height:12px;white-space:pre;color:#0b0b0b;font-size:10.9px;left:2265px;transform:scaleY(0.8);-webkit-text-stroke:0.3px #0b0b0b;">0.7</div>
<div style="top:266.3px;line-height:12px;height:12px;white-space:pre;color:#0b0b0b;font-size:10.9px;left:2291px;transform:scaleY(0.8);-webkit-text-stroke:0.3px #0b0b0b;">1</div>
<div style="top:266.3px;line-height:12px;height:12px;white-space:pre;color:#0b0b0b;font-size:10.9px;left:2355px;transform:scaleY(0.8);-webkit-text-stroke:0.3px #0b0b0b;">2</div>
<div style="top:266.3px;line-height:12px;height:12px;white-space:pre;color:#0b0b0b;font-size:10.9px;left:2405px;transform:scaleY(0.8);-webkit-text-stroke:0.3px #0b0b0b;">3</div>
<div style="top:266.3px;line-height:12px;height:12px;white-space:pre;color:#0b0b0b;font-size:10.9px;left:2443px;transform:scaleY(0.8);-webkit-text-stroke:0.3px #0b0b0b;">4</div>
<div style="left:2218px;top:259.5px;width:5px;height:9px;background:#85723a;border:1px solid #26200c;"></div>
<div style="left:2452px;top:256px;width:76px;height:20px;background:linear-gradient(#4c4c4c,#424242);border:1px solid #212121;border-radius:4px;box-shadow:inset 0 1px 0 #585858;"></div>
<div style="left:2470px;top:257px;width:1px;height:18px;background:#242424;"></div>
<div style="left:2489px;top:257px;width:1px;height:18px;background:#242424;"></div>
<div style="left:2508px;top:257px;width:1px;height:18px;background:#242424;"></div>
<div style="left:2454px;top:260px;width:13px;height:13px;background:#a0a0a0;border:1px solid #000;"></div>
<div style="left:2473.5px;top:260px;width:12px;height:12px;background:conic-gradient(from 20deg,#ff60c0,#ff5050,#ffb040,#e8ff40,#50ff50,#40ffd0,#40b0ff,#6060ff,#c050ff,#ff60c0);border-radius:50%;"></div>
<div style="left:2473.5px;top:260px;width:12px;height:12px;background:radial-gradient(closest-side,rgba(238,238,238,0.98),rgba(238,238,238,0.55) 55%,rgba(238,238,238,0.1) 100%);border-radius:50%;"></div>
<div style="top:258.5px;line-height:16px;height:16px;white-space:pre;left:2488px;width:20px;text-align:center;">4</div>
<svg style="left:2511px;top:259px;" width="14" height="13" viewBox="0 0 14 13"><path d="M0.8 12 C3 4 5 3.4 6.6 6.4 C8.6 10 10.6 9 13.2 0.8" stroke="#1c1c1c" stroke-width="1.9" fill="none"/></svg>
<div style="top:279px;line-height:16px;height:16px;white-space:pre;right:510px;text-align:right;">multiply</div>
<div style="left:2056px;top:278px;width:74px;height:20px;background:#3b3b3b;border:1px solid #222;border-radius:3px;box-shadow:inset 0 1px 0 #2c2c2c;"></div>
<div style="top:280.5px;line-height:16px;height:16px;white-space:pre;left:2060px;">1</div>
<svg style="left:2133px;top:276px;" width="317" height="13" viewBox="0 0 317 13"><path d="M0.5 2 V10" stroke="#1b1b1b" stroke-width="1"/><path d="M15.5 5 V10" stroke="#1b1b1b" stroke-width="1"/><path d="M27.5 5 V10" stroke="#1b1b1b" stroke-width="1"/><path d="M37.5 5 V10" stroke="#1b1b1b" stroke-width="1"/><path d="M45.5 5 V10" stroke="#1b1b1b" stroke-width="1"/><path d="M50.5 2 V10" stroke="#1b1b1b" stroke-width="1"/><path d="M65.5 5 V10" stroke="#1b1b1b" stroke-width="1"/><path d="M80.5 5 V10" stroke="#1b1b1b" stroke-width="1"/><path d="M92.5 5 V10" stroke="#1b1b1b" stroke-width="1"/><path d="M100.5 5 V10" stroke="#1b1b1b" stroke-width="1"/><path d="M112.5 5 V10" stroke="#1b1b1b" stroke-width="1"/><path d="M122.5 5 V10" stroke="#1b1b1b" stroke-width="1"/><path d="M132.5 5 V10" stroke="#1b1b1b" stroke-width="1"/><path d="M141.5 5 V10" stroke="#1b1b1b" stroke-width="1"/><path d="M149.5 5 V10" stroke="#1b1b1b" stroke-width="1"/><path d="M157.5 2 V10" stroke="#1b1b1b" stroke-width="1"/><path d="M190.5 5 V10" stroke="#1b1b1b" stroke-width="1"/><path d="M222.5 2 V10" stroke="#1b1b1b" stroke-width="1"/><path d="M248.5 5 V10" stroke="#1b1b1b" stroke-width="1"/><path d="M272.5 2 V10" stroke="#1b1b1b" stroke-width="1"/><path d="M292.5 5 V10" stroke="#1b1b1b" stroke-width="1"/><path d="M316.5 2 V10" stroke="#1b1b1b" stroke-width="1"/><rect x="0" y="10" width="317" height="1" fill="#080808"/><rect x="0" y="11" width="317" height="1" fill="#5e5e5e"/><rect x="0" y="12" width="317" height="1" fill="#080808"/></svg>
<div style="top:288.3px;line-height:12px;height:12px;white-space:pre;color:#0b0b0b;font-size:10.9px;left:2133px;transform:scaleY(0.8);-webkit-text-stroke:0.3px #0b0b0b;">0</div>
<div style="top:288.3px;line-height:12px;height:12px;white-space:pre;color:#0b0b0b;font-size:10.9px;left:2183px;transform:scaleY(0.8);-webkit-text-stroke:0.3px #0b0b0b;">0.1</div>
<div style="top:288.3px;line-height:12px;height:12px;white-space:pre;color:#0b0b0b;font-size:10.9px;left:2233px;transform:scaleY(0.8);-webkit-text-stroke:0.3px #0b0b0b;">0.4</div>
<div style="top:288.3px;line-height:12px;height:12px;white-space:pre;color:#0b0b0b;font-size:10.9px;left:2265px;transform:scaleY(0.8);-webkit-text-stroke:0.3px #0b0b0b;">0.7</div>
<div style="top:288.3px;line-height:12px;height:12px;white-space:pre;color:#0b0b0b;font-size:10.9px;left:2291px;transform:scaleY(0.8);-webkit-text-stroke:0.3px #0b0b0b;">1</div>
<div style="top:288.3px;line-height:12px;height:12px;white-space:pre;color:#0b0b0b;font-size:10.9px;left:2355px;transform:scaleY(0.8);-webkit-text-stroke:0.3px #0b0b0b;">2</div>
<div style="top:288.3px;line-height:12px;height:12px;white-space:pre;color:#0b0b0b;font-size:10.9px;left:2405px;transform:scaleY(0.8);-webkit-text-stroke:0.3px #0b0b0b;">3</div>
<div style="top:288.3px;line-height:12px;height:12px;white-space:pre;color:#0b0b0b;font-size:10.9px;left:2443px;transform:scaleY(0.8);-webkit-text-stroke:0.3px #0b0b0b;">4</div>
<div style="left:2288px;top:281.5px;width:5px;height:9px;background:#85723a;border:1px solid #26200c;"></div>
<div style="left:2452px;top:278px;width:76px;height:20px;background:linear-gradient(#4c4c4c,#424242);border:1px solid #212121;border-radius:4px;box-shadow:inset 0 1px 0 #585858;"></div>
<div style="left:2470px;top:279px;width:1px;height:18px;background:#242424;"></div>
<div style="left:2489px;top:279px;width:1px;height:18px;background:#242424;"></div>
<div style="left:2508px;top:279px;width:1px;height:18px;background:#242424;"></div>
<div style="left:2454px;top:282px;width:13px;height:13px;background:#fff;border:1px solid #000;"></div>
<div style="left:2473.5px;top:282px;width:12px;height:12px;background:conic-gradient(from 20deg,#ff60c0,#ff5050,#ffb040,#e8ff40,#50ff50,#40ffd0,#40b0ff,#6060ff,#c050ff,#ff60c0);border-radius:50%;"></div>
<div style="left:2473.5px;top:282px;width:12px;height:12px;background:radial-gradient(closest-side,rgba(238,238,238,0.98),rgba(238,238,238,0.55) 55%,rgba(238,238,238,0.1) 100%);border-radius:50%;"></div>
<div style="top:280.5px;line-height:16px;height:16px;white-space:pre;left:2488px;width:20px;text-align:center;">4</div>
<svg style="left:2511px;top:281px;" width="14" height="13" viewBox="0 0 14 13"><path d="M0.8 12 C3 4 5 3.4 6.6 6.4 C8.6 10 10.6 9 13.2 0.8" stroke="#1c1c1c" stroke-width="1.9" fill="none"/></svg>
<div style="top:301px;line-height:16px;height:16px;white-space:pre;right:510px;text-align:right;">offset</div>
<div style="left:2056px;top:300px;width:74px;height:20px;background:#3b3b3b;border:1px solid #222;border-radius:3px;box-shadow:inset 0 1px 0 #2c2c2c;"></div>
<div style="top:302.5px;line-height:16px;height:16px;white-space:pre;left:2060px;">0</div>
<svg style="left:2133px;top:298px;" width="317" height="13" viewBox="0 0 317 13"><path d="M0.5 2 V10" stroke="#1b1b1b" stroke-width="1"/><path d="M8.5 5 V10" stroke="#1b1b1b" stroke-width="1"/><path d="M16.5 5 V10" stroke="#1b1b1b" stroke-width="1"/><path d="M25.5 5 V10" stroke="#1b1b1b" stroke-width="1"/><path d="M36.5 5 V10" stroke="#1b1b1b" stroke-width="1"/><path d="M47.5 5 V10" stroke="#1b1b1b" stroke-width="1"/><path d="M57.5 5 V10" stroke="#1b1b1b" stroke-width="1"/><path d="M72.5 5 V10" stroke="#1b1b1b" stroke-width="1"/><path d="M87.5 5 V10" stroke="#1b1b1b" stroke-width="1"/><path d="M107.5 2 V10" stroke="#1b1b1b" stroke-width="1"/><path d="M120.5 5 V10" stroke="#1b1b1b" stroke-width="1"/><path d="M132.5 5 V10" stroke="#1b1b1b" stroke-width="1"/><path d="M141.5 5 V10" stroke="#1b1b1b" stroke-width="1"/><path d="M149.5 5 V10" stroke="#1b1b1b" stroke-width="1"/><path d="M157.5 2 V10" stroke="#1b1b1b" stroke-width="1"/><path d="M165.5 5 V10" stroke="#1b1b1b" stroke-width="1"/><path d="M173.5 5 V10" stroke="#1b1b1b" stroke-width="1"/><path d="M183.5 5 V10" stroke="#1b1b1b" stroke-width="1"/><path d="M195.5 5 V10" stroke="#1b1b1b" stroke-width="1"/><path d="M208.5 2 V10" stroke="#1b1b1b" stroke-width="1"/><path d="M228.5 5 V10" stroke="#1b1b1b" stroke-width="1"/><path d="M243.5 5 V10" stroke="#1b1b1b" stroke-width="1"/><path d="M257.5 5 V10" stroke="#1b1b1b" stroke-width="1"/><path d="M268.5 5 V10" stroke="#1b1b1b" stroke-width="1"/><path d="M279.5 5 V10" stroke="#1b1b1b" stroke-width="1"/><path d="M289.5 5 V10" stroke="#1b1b1b" stroke-width="1"/><path d="M297.5 5 V10" stroke="#1b1b1b" stroke-width="1"/><path d="M304.5 5 V10" stroke="#1b1b1b" stroke-width="1"/><path d="M310.5 5 V10" stroke="#1b1b1b" stroke-width="1"/><path d="M316.5 2 V10" stroke="#1b1b1b" stroke-width="1"/><rect x="0" y="10" width="317" height="1" fill="#080808"/><rect x="0" y="11" width="317" height="1" fill="#5e5e5e"/><rect x="0" y="12" width="317" height="1" fill="#080808"/></svg>
<div style="top:310.3px;line-height:12px;height:12px;white-space:pre;color:#0b0b0b;font-size:10.9px;left:2133px;transform:scaleY(0.8);-webkit-text-stroke:0.3px #0b0b0b;">-1</div>
<div style="top:310.3px;line-height:12px;height:12px;white-space:pre;color:#0b0b0b;font-size:10.9px;left:2159px;transform:scaleY(0.8);-webkit-text-stroke:0.3px #0b0b0b;">-0.7</div>
<div style="top:310.3px;line-height:12px;height:12px;white-space:pre;color:#0b0b0b;font-size:10.9px;left:2191px;transform:scaleY(0.8);-webkit-text-stroke:0.3px #0b0b0b;">-0.4</div>
<div style="top:310.3px;line-height:12px;height:12px;white-space:pre;color:#0b0b0b;font-size:10.9px;left:2240px;transform:scaleY(0.8);-webkit-text-stroke:0.3px #0b0b0b;">-0.1</div>
<div style="top:310.3px;line-height:12px;height:12px;white-space:pre;color:#0b0b0b;font-size:10.9px;left:2291px;transform:scaleY(0.8);-webkit-text-stroke:0.3px #0b0b0b;">0</div>
<div style="top:310.3px;line-height:12px;height:12px;white-space:pre;color:#0b0b0b;font-size:10.9px;left:2341px;transform:scaleY(0.8);-webkit-text-stroke:0.3px #0b0b0b;">0.1</div>
<div style="top:310.3px;line-height:12px;height:12px;white-space:pre;color:#0b0b0b;font-size:10.9px;left:2391px;transform:scaleY(0.8);-webkit-text-stroke:0.3px #0b0b0b;">0.4</div>
<div style="top:310.3px;line-height:12px;height:12px;white-space:pre;color:#0b0b0b;font-size:10.9px;left:2423px;transform:scaleY(0.8);-webkit-text-stroke:0.3px #0b0b0b;">0.7</div>
<div style="top:310.3px;line-height:12px;height:12px;white-space:pre;color:#0b0b0b;font-size:10.9px;left:2444px;transform:scaleY(0.8);-webkit-text-stroke:0.3px #0b0b0b;">1</div>
<div style="left:2288px;top:303.5px;width:5px;height:9px;background:#85723a;border:1px solid #26200c;"></div>
<div style="left:2452px;top:300px;width:76px;height:20px;background:linear-gradient(#4c4c4c,#424242);border:1px solid #212121;border-radius:4px;box-shadow:inset 0 1px 0 #585858;"></div>
<div style="left:2470px;top:301px;width:1px;height:18px;background:#242424;"></div>
<div style="left:2489px;top:301px;width:1px;height:18px;background:#242424;"></div>
<div style="left:2508px;top:301px;width:1px;height:18px;background:#242424;"></div>
<div style="left:2454px;top:304px;width:13px;height:13px;background:#000;border:1px solid #000;"></div>
<div style="left:2473.5px;top:304px;width:12px;height:12px;background:conic-gradient(from 20deg,#ff60c0,#ff5050,#ffb040,#e8ff40,#50ff50,#40ffd0,#40b0ff,#6060ff,#c050ff,#ff60c0);border-radius:50%;"></div>
<div style="left:2473.5px;top:304px;width:12px;height:12px;background:radial-gradient(closest-side,rgba(238,238,238,0.98),rgba(238,238,238,0.55) 55%,rgba(238,238,238,0.1) 100%);border-radius:50%;"></div>
<div style="top:302.5px;line-height:16px;height:16px;white-space:pre;left:2488px;width:20px;text-align:center;">4</div>
<svg style="left:2511px;top:303px;" width="14" height="13" viewBox="0 0 14 13"><path d="M0.8 12 C3 4 5 3.4 6.6 6.4 C8.6 10 10.6 9 13.2 0.8" stroke="#1c1c1c" stroke-width="1.9" fill="none"/></svg>
<div style="top:323px;line-height:16px;height:16px;white-space:pre;right:510px;text-align:right;">gamma</div>
<div style="left:2056px;top:322px;width:74px;height:20px;background:#3b3b3b;border:1px solid #222;border-radius:3px;box-shadow:inset 0 1px 0 #2c2c2c;"></div>
<div style="top:324.5px;line-height:16px;height:16px;white-space:pre;left:2060px;">1</div>
<svg style="left:2133px;top:320px;" width="317" height="13" viewBox="0 0 317 13"><path d="M0.5 2 V10" stroke="#1b1b1b" stroke-width="1"/><path d="M22.5 5 V10" stroke="#1b1b1b" stroke-width="1"/><path d="M39.5 5 V10" stroke="#1b1b1b" stroke-width="1"/><path d="M54.5 5 V10" stroke="#1b1b1b" stroke-width="1"/><path d="M67.5 5 V10" stroke="#1b1b1b" stroke-width="1"/><path d="M79.5 5 V10" stroke="#1b1b1b" stroke-width="1"/><path d="M89.5 5 V10" stroke="#1b1b1b" stroke-width="1"/><path d="M107.5 5 V10" stroke="#1b1b1b" stroke-width="1"/><path d="M122.5 5 V10" stroke="#1b1b1b" stroke-width="1"/><path d="M135.5 5 V10" stroke="#1b1b1b" stroke-width="1"/><path d="M147.5 5 V10" stroke="#1b1b1b" stroke-width="1"/><path d="M157.5 2 V10" stroke="#1b1b1b" stroke-width="1"/><path d="M196.5 5 V10" stroke="#1b1b1b" stroke-width="1"/><path d="M228.5 2 V10" stroke="#1b1b1b" stroke-width="1"/><path d="M250.5 5 V10" stroke="#1b1b1b" stroke-width="1"/><path d="M268.5 5 V10" stroke="#1b1b1b" stroke-width="1"/><path d="M283.5 5 V10" stroke="#1b1b1b" stroke-width="1"/><path d="M296.5 5 V10" stroke="#1b1b1b" stroke-width="1"/><path d="M306.5 5 V10" stroke="#1b1b1b" stroke-width="1"/><path d="M316.5 2 V10" stroke="#1b1b1b" stroke-width="1"/><rect x="0" y="10" width="317" height="1" fill="#080808"/><rect x="0" y="11" width="317" height="1" fill="#5e5e5e"/><rect x="0" y="12" width="317" height="1" fill="#080808"/></svg>
<div style="top:332.3px;line-height:12px;height:12px;white-space:pre;color:#0b0b0b;font-size:10.9px;left:2133px;transform:scaleY(0.8);-webkit-text-stroke:0.3px #0b0b0b;">0.2</div>
<div style="top:332.3px;line-height:12px;height:12px;white-space:pre;color:#0b0b0b;font-size:10.9px;left:2172px;transform:scaleY(0.8);-webkit-text-stroke:0.3px #0b0b0b;">0.3</div>
<div style="top:332.3px;line-height:12px;height:12px;white-space:pre;color:#0b0b0b;font-size:10.9px;left:2200px;transform:scaleY(0.8);-webkit-text-stroke:0.3px #0b0b0b;">0.4</div>
<div style="top:332.3px;line-height:12px;height:12px;white-space:pre;color:#0b0b0b;font-size:10.9px;left:2222px;transform:scaleY(0.8);-webkit-text-stroke:0.3px #0b0b0b;">0.5</div>
<div style="top:332.3px;line-height:12px;height:12px;white-space:pre;color:#0b0b0b;font-size:10.9px;left:2255px;transform:scaleY(0.8);-webkit-text-stroke:0.3px #0b0b0b;">0.7</div>
<div style="top:332.3px;line-height:12px;height:12px;white-space:pre;color:#0b0b0b;font-size:10.9px;left:2291px;transform:scaleY(0.8);-webkit-text-stroke:0.3px #0b0b0b;">1</div>
<div style="top:332.3px;line-height:12px;height:12px;white-space:pre;color:#0b0b0b;font-size:10.9px;left:2361px;transform:scaleY(0.8);-webkit-text-stroke:0.3px #0b0b0b;">2</div>
<div style="top:332.3px;line-height:12px;height:12px;white-space:pre;color:#0b0b0b;font-size:10.9px;left:2401px;transform:scaleY(0.8);-webkit-text-stroke:0.3px #0b0b0b;">3</div>
<div style="top:332.3px;line-height:12px;height:12px;white-space:pre;color:#0b0b0b;font-size:10.9px;left:2429px;transform:scaleY(0.8);-webkit-text-stroke:0.3px #0b0b0b;">4</div>
<div style="top:332.3px;line-height:12px;height:12px;white-space:pre;color:#0b0b0b;font-size:10.9px;left:2445px;transform:scaleY(0.8);-webkit-text-stroke:0.3px #0b0b0b;">5</div>
<div style="left:2288px;top:325.5px;width:5px;height:9px;background:#85723a;border:1px solid #26200c;"></div>
<div style="left:2452px;top:322px;width:76px;height:20px;background:linear-gradient(#4c4c4c,#424242);border:1px solid #212121;border-radius:4px;box-shadow:inset 0 1px 0 #585858;"></div>
<div style="left:2470px;top:323px;width:1px;height:18px;background:#242424;"></div>
<div style="left:2489px;top:323px;width:1px;height:18px;background:#242424;"></div>
<div style="left:2508px;top:323px;width:1px;height:18px;background:#242424;"></div>
<div style="left:2454px;top:326px;width:13px;height:13px;background:#fff;border:1px solid #000;"></div>
<div style="left:2473.5px;top:326px;width:12px;height:12px;background:conic-gradient(from 20deg,#ff60c0,#ff5050,#ffb040,#e8ff40,#50ff50,#40ffd0,#40b0ff,#6060ff,#c050ff,#ff60c0);border-radius:50%;"></div>
<div style="left:2473.5px;top:326px;width:12px;height:12px;background:radial-gradient(closest-side,rgba(238,238,238,0.98),rgba(238,238,238,0.55) 55%,rgba(238,238,238,0.1) 100%);border-radius:50%;"></div>
<div style="top:324.5px;line-height:16px;height:16px;white-space:pre;left:2488px;width:20px;text-align:center;">4</div>
<svg style="left:2511px;top:325px;" width="14" height="13" viewBox="0 0 14 13"><path d="M0.8 12 C3 4 5 3.4 6.6 6.4 C8.6 10 10.6 9 13.2 0.8" stroke="#1c1c1c" stroke-width="1.9" fill="none"/></svg>
<div style="left:2056px;top:346px;width:16px;height:16px;background:#3d3d3d;border:1px solid #232323;border-radius:2px;"></div>
<div style="top:347px;line-height:16px;height:16px;white-space:pre;left:2078px;">reverse</div>
<div style="left:2130px;top:346px;width:16px;height:16px;background:#3d3d3d;border:1px solid #232323;border-radius:2px;"></div>
<svg style="left:2132px;top:348px;" width="12" height="12" viewBox="0 0 12 12"><path d="M1.2 1.2 L10.8 10.8 M10.8 1.2 L1.2 10.8" stroke="#e2e2e2" stroke-width="2.7" fill="none"/></svg>
<div style="top:347px;line-height:16px;height:16px;white-space:pre;left:2152px;">black clamp</div>
<div style="left:2228px;top:346px;width:16px;height:16px;background:#3d3d3d;border:1px solid #232323;border-radius:2px;"></div>
<div style="top:347px;line-height:16px;height:16px;white-space:pre;left:2250px;">white clamp</div>
<div style="top:369px;line-height:16px;height:16px;white-space:pre;right:510px;text-align:right;">mask</div>
<div style="left:2056px;top:368.5px;width:13px;height:15px;background:#3d3d3d;border:1px solid #232323;border-radius:2px;"></div>
<div style="left:2075px;top:366.5px;width:242px;height:18px;background:linear-gradient(#505050,#444);border:1px solid #222;border-radius:4px;box-shadow:inset 0 1px 0 #5c5c5c;"></div>
<div style="top:368.5px;line-height:16px;height:16px;white-space:pre;left:2080px;">none</div>
<svg style="left:2301px;top:373.5px;" width="8" height="5" viewBox="0 0 8 5"><path d="M0 0 H8 L4.0 5 Z" fill="#d0d0d0"/></svg>
<div style="left:2324px;top:369px;width:17px;height:15px;background:linear-gradient(#4c4c4c,#424242);border:1px solid #212121;border-radius:4px;box-shadow:inset 0 1px 0 #585858;"></div>
<svg style="left:2329px;top:375px;" width="7" height="5" viewBox="0 0 7 5"><path d="M0 1 H7 M0 4 H7" stroke="#d0d0d0" stroke-width="0.9"/></svg>
<div style="left:2344px;top:368.5px;width:15px;height:15px;background:#3d3d3d;border:1px solid #232323;border-radius:2px;"></div>
<div style="top:369px;line-height:16px;height:16px;white-space:pre;left:2365px;">inject</div>
<div style="left:2404px;top:368.5px;width:15px;height:15px;background:#3d3d3d;border:1px solid #232323;border-radius:2px;"></div>
<div style="top:369px;line-height:16px;height:16px;white-space:pre;left:2426px;">invert</div>
<div style="left:2467px;top:368.5px;width:15px;height:15px;background:#3d3d3d;border:1px solid #232323;border-radius:2px;"></div>
<div style="top:369px;line-height:16px;height:16px;white-space:pre;left:2489px;">fringe</div>
<div style="top:391px;line-height:16px;height:16px;white-space:pre;right:510px;text-align:right;">(un)premult by</div>
<div style="left:2056px;top:390.5px;width:13px;height:15px;background:#3d3d3d;border:1px solid #232323;border-radius:2px;"></div>
<div style="left:2075px;top:388.5px;width:366px;height:18px;background:linear-gradient(#505050,#444);border:1px solid #222;border-radius:4px;box-shadow:inset 0 1px 0 #5c5c5c;"></div>
<div style="top:390.5px;line-height:16px;height:16px;white-space:pre;left:2080px;">none</div>
<svg style="left:2425px;top:395.5px;" width="8" height="5" viewBox="0 0 8 5"><path d="M0 0 H8 L4.0 5 Z" fill="#d0d0d0"/></svg>
<div style="left:2448px;top:391px;width:17px;height:15px;background:linear-gradient(#4c4c4c,#424242);border:1px solid #212121;border-radius:4px;box-shadow:inset 0 1px 0 #585858;"></div>
<svg style="left:2453px;top:397px;" width="7" height="5" viewBox="0 0 7 5"><path d="M0 1 H7 M0 4 H7" stroke="#d0d0d0" stroke-width="0.9"/></svg>
<div style="left:2467px;top:390.5px;width:15px;height:15px;background:#3d3d3d;border:1px solid #232323;border-radius:2px;"></div>
<div style="top:391px;line-height:16px;height:16px;white-space:pre;left:2489px;">invert</div>
<div style="top:413px;line-height:16px;height:16px;white-space:pre;right:510px;text-align:right;">mix luminance</div>
<div style="left:2056px;top:412px;width:16px;height:16px;background:#3d3d3d;border:1px solid #232323;border-radius:2px;"></div>
<svg style="left:2058px;top:414px;" width="12" height="12" viewBox="0 0 12 12"><path d="M1.2 1.2 L10.8 10.8 M10.8 1.2 L1.2 10.8" stroke="#e2e2e2" stroke-width="2.7" fill="none"/></svg>
<div style="left:2074.5px;top:410.5px;width:73px;height:20px;background:#3b3b3b;border:1px solid #222;border-radius:3px;box-shadow:inset 0 1px 0 #2c2c2c;"></div>
<div style="top:413px;line-height:16px;height:16px;white-space:pre;left:2078.5px;">0</div>
<svg style="left:2151px;top:408px;" width="355" height="13" viewBox="0 0 355 13"><path d="M0.5 2 V10" stroke="#1b1b1b" stroke-width="1"/><path d="M35.9 5 V10" stroke="#1b1b1b" stroke-width="1"/><path d="M71.3 5 V10" stroke="#1b1b1b" stroke-width="1"/><path d="M106.7 5 V10" stroke="#1b1b1b" stroke-width="1"/><path d="M142.1 5 V10" stroke="#1b1b1b" stroke-width="1"/><path d="M177.5 5 V10" stroke="#1b1b1b" stroke-width="1"/><path d="M212.9 5 V10" stroke="#1b1b1b" stroke-width="1"/><path d="M248.3 5 V10" stroke="#1b1b1b" stroke-width="1"/><path d="M283.7 5 V10" stroke="#1b1b1b" stroke-width="1"/><path d="M319.1 5 V10" stroke="#1b1b1b" stroke-width="1"/><path d="M354.5 2 V10" stroke="#1b1b1b" stroke-width="1"/><rect x="0" y="10" width="355" height="1" fill="#080808"/><rect x="0" y="11" width="355" height="1" fill="#5e5e5e"/><rect x="0" y="12" width="355" height="1" fill="#080808"/></svg>
<div style="top:420.6px;line-height:12px;height:12px;white-space:pre;color:#0b0b0b;font-size:10.9px;left:2151.5px;transform:scaleY(0.8);-webkit-text-stroke:0.3px #0b0b0b;">0</div>
<div style="top:420.6px;line-height:12px;height:12px;white-space:pre;color:#0b0b0b;font-size:10.9px;left:2186.5px;transform:scaleY(0.8);-webkit-text-stroke:0.3px #0b0b0b;">0.1</div>
<div style="top:420.6px;line-height:12px;height:12px;white-space:pre;color:#0b0b0b;font-size:10.9px;left:2222.0px;transform:scaleY(0.8);-webkit-text-stroke:0.3px #0b0b0b;">0.2</div>
<div style="top:420.6px;line-height:12px;height:12px;white-space:pre;color:#0b0b0b;font-size:10.9px;left:2257.5px;transform:scaleY(0.8);-webkit-text-stroke:0.3px #0b0b0b;">0.3</div>
<div style="top:420.6px;line-height:12px;height:12px;white-space:pre;color:#0b0b0b;font-size:10.9px;left:2293.0px;transform:scaleY(0.8);-webkit-text-stroke:0.3px #0b0b0b;">0.4</div>
<div style="top:420.6px;line-height:12px;height:12px;white-space:pre;color:#0b0b0b;font-size:10.9px;left:2328.5px;transform:scaleY(0.8);-webkit-text-stroke:0.3px #0b0b0b;">0.5</div>
<div style="top:420.6px;line-height:12px;height:12px;white-space:pre;color:#0b0b0b;font-size:10.9px;left:2364.0px;transform:scaleY(0.8);-webkit-text-stroke:0.3px #0b0b0b;">0.6</div>
<div style="top:420.6px;line-height:12px;height:12px;white-space:pre;color:#0b0b0b;font-size:10.9px;left:2399.5px;transform:scaleY(0.8);-webkit-text-stroke:0.3px #0b0b0b;">0.7</div>
<div style="top:420.6px;line-height:12px;height:12px;white-space:pre;color:#0b0b0b;font-size:10.9px;left:2435.0px;transform:scaleY(0.8);-webkit-text-stroke:0.3px #0b0b0b;">0.8</div>
<div style="top:420.6px;line-height:12px;height:12px;white-space:pre;color:#0b0b0b;font-size:10.9px;left:2470.5px;transform:scaleY(0.8);-webkit-text-stroke:0.3px #0b0b0b;">0.9</div>
<div style="top:420.6px;line-height:12px;height:12px;white-space:pre;color:#0b0b0b;font-size:10.9px;left:2500px;transform:scaleY(0.8);-webkit-text-stroke:0.3px #0b0b0b;">1</div>
<div style="left:2150px;top:413.5px;width:5px;height:9px;background:#85723a;border:1px solid #26200c;"></div>
<div style="left:2509px;top:410.5px;width:19px;height:19px;background:linear-gradient(#4c4c4c,#424242);border:1px solid #212121;border-radius:4px;box-shadow:inset 0 1px 0 #585858;"></div>
<svg style="left:2512px;top:413.5px;" width="14" height="13" viewBox="0 0 14 13"><path d="M0.8 12 C3 4 5 3.4 6.6 6.4 C8.6 10 10.6 9 13.2 0.8" stroke="#1c1c1c" stroke-width="1.9" fill="none"/></svg>
<div style="top:435px;line-height:16px;height:16px;white-space:pre;right:510px;text-align:right;">mix</div>
<div style="left:2056px;top:433px;width:74px;height:20px;background:#3b3b3b;border:1px solid #222;border-radius:3px;box-shadow:inset 0 1px 0 #2c2c2c;"></div>
<div style="top:435.5px;line-height:16px;height:16px;white-space:pre;left:2060px;">1</div>
<svg style="left:2133px;top:431px;" width="373" height="13" viewBox="0 0 373 13"><path d="M0.5 2 V10" stroke="#1b1b1b" stroke-width="1"/><path d="M37.7 5 V10" stroke="#1b1b1b" stroke-width="1"/><path d="M74.9 5 V10" stroke="#1b1b1b" stroke-width="1"/><path d="M112.1 5 V10" stroke="#1b1b1b" stroke-width="1"/><path d="M149.3 5 V10" stroke="#1b1b1b" stroke-width="1"/><path d="M186.5 5 V10" stroke="#1b1b1b" stroke-width="1"/><path d="M223.7 5 V10" stroke="#1b1b1b" stroke-width="1"/><path d="M260.9 5 V10" stroke="#1b1b1b" stroke-width="1"/><path d="M298.1 5 V10" stroke="#1b1b1b" stroke-width="1"/><path d="M335.3 5 V10" stroke="#1b1b1b" stroke-width="1"/><path d="M372.5 2 V10" stroke="#1b1b1b" stroke-width="1"/><rect x="0" y="10" width="373" height="1" fill="#080808"/><rect x="0" y="11" width="373" height="1" fill="#5e5e5e"/><rect x="0" y="12" width="373" height="1" fill="#080808"/></svg>
<div style="top:443.3px;line-height:12px;height:12px;white-space:pre;color:#0b0b0b;font-size:10.9px;left:2133.5px;transform:scaleY(0.8);-webkit-text-stroke:0.3px #0b0b0b;">0</div>
<div style="top:443.3px;line-height:12px;height:12px;white-space:pre;color:#0b0b0b;font-size:10.9px;left:2170.3px;transform:scaleY(0.8);-webkit-text-stroke:0.3px #0b0b0b;">0.1</div>
<div style="top:443.3px;line-height:12px;height:12px;white-space:pre;color:#0b0b0b;font-size:10.9px;left:2207.6px;transform:scaleY(0.8);-webkit-text-stroke:0.3px #0b0b0b;">0.2</div>
<div style="top:443.3px;line-height:12px;height:12px;white-space:pre;color:#0b0b0b;font-size:10.9px;left:2244.9px;transform:scaleY(0.8);-webkit-text-stroke:0.3px #0b0b0b;">0.3</div>
<div style="top:443.3px;line-height:12px;height:12px;white-space:pre;color:#0b0b0b;font-size:10.9px;left:2282.2px;transform:scaleY(0.8);-webkit-text-stroke:0.3px #0b0b0b;">0.4</div>
<div style="top:443.3px;line-height:12px;height:12px;white-space:pre;color:#0b0b0b;font-size:10.9px;left:2319.5px;transform:scaleY(0.8);-webkit-text-stroke:0.3px #0b0b0b;">0.5</div>
<div style="top:443.3px;line-height:12px;height:12px;white-space:pre;color:#0b0b0b;font-size:10.9px;left:2356.8px;transform:scaleY(0.8);-webkit-text-stroke:0.3px #0b0b0b;">0.6</div>
<div style="top:443.3px;line-height:12px;height:12px;white-space:pre;color:#0b0b0b;font-size:10.9px;left:2394.1px;transform:scaleY(0.8);-webkit-text-stroke:0.3px #0b0b0b;">0.7</div>
<div style="top:443.3px;line-height:12px;height:12px;white-space:pre;color:#0b0b0b;font-size:10.9px;left:2431.4px;transform:scaleY(0.8);-webkit-text-stroke:0.3px #0b0b0b;">0.8</div>
<div style="top:443.3px;line-height:12px;height:12px;white-space:pre;color:#0b0b0b;font-size:10.9px;left:2468.7px;transform:scaleY(0.8);-webkit-text-stroke:0.3px #0b0b0b;">0.9</div>
<div style="top:443.3px;line-height:12px;height:12px;white-space:pre;color:#0b0b0b;font-size:10.9px;left:2500px;transform:scaleY(0.8);-webkit-text-stroke:0.3px #0b0b0b;">1</div>
<div style="left:2504px;top:436.5px;width:5px;height:9px;background:#85723a;border:1px solid #26200c;"></div>
<div style="left:2509px;top:433px;width:19px;height:19px;background:linear-gradient(#4c4c4c,#424242);border:1px solid #212121;border-radius:4px;box-shadow:inset 0 1px 0 #585858;"></div>
<svg style="left:2512px;top:436px;" width="14" height="13" viewBox="0 0 14 13"><path d="M0.8 12 C3 4 5 3.4 6.6 6.4 C8.6 10 10.6 9 13.2 0.8" stroke="#1c1c1c" stroke-width="1.9" fill="none"/></svg>
<div style="left:1950px;top:470px;width:589px;height:2px;background:#78a8f6;"></div>
<div style="left:1950px;top:472px;width:589px;height:24px;background:linear-gradient(#474747,#303030);border:1px solid #1c1c1c;border-top:none;"></div>
<svg style="left:1956px;top:479px;" width="10" height="8" viewBox="0 0 10 8"><path d="M0 0 H10 L5 7.5 Z" fill="#050505"/></svg>
<div style="left:1974px;top:474px;width:69px;height:20px;background:linear-gradient(#4c4c4c,#424242);border:1px solid #212121;border-radius:4px;box-shadow:inset 0 1px 0 #585858;"></div>
<div style="left:1996px;top:475px;width:1px;height:18px;background:#242424;"></div>
<div style="left:2019px;top:475px;width:1px;height:18px;background:#242424;"></div>
<svg style="left:1979px;top:478px;" width="13" height="13" viewBox="0 0 13 13"><circle cx="6.5" cy="6.5" r="3.9" fill="none" stroke="#0a0a0a" stroke-width="2.4"/><circle cx="6.5" cy="6.5" r="3" fill="none" stroke="#d8d8d8" stroke-width="1"/><circle cx="6.5" cy="6.5" r="1.4" fill="#0a0a0a"/></svg>
<svg style="left:2002px;top:477px;" width="13" height="12" viewBox="0 0 13 12"><path d="M3.5 0.5 L6 4.5 M9.5 0.5 L7 4.5" stroke="#0a0a0a" stroke-width="1"/><rect x="0.5" y="4.5" width="12" height="5" rx="1" fill="#0a0a0a"/><path d="M5 9.5 L6.5 11 L8 9.5" fill="#0a0a0a"/></svg>
<svg style="left:2025px;top:476px;" width="11" height="15" viewBox="0 0 11 15"><path d="M2.2 0.4 Q-0.6 4.6 3.4 8 V14.6 H7.6 V8 Q11.6 4.6 8.8 0.4 L7.6 4.4 H3.4 Z" fill="#050505"/></svg>
<div style="left:2053px;top:474px;width:293px;height:20px;background:#3a3a3a;border:1px solid #232323;border-radius:4px;"></div>
<div style="top:476.5px;line-height:16px;height:16px;white-space:pre;left:2057.5px;">Grade2</div>
<div style="left:2356px;top:474px;width:115px;height:20px;background:linear-gradient(#4c4c4c,#424242);border:1px solid #212121;border-radius:4px;box-shadow:inset 0 1px 0 #585858;"></div>
<div style="left:2378px;top:475px;width:1px;height:18px;background:#242424;"></div>
<div style="left:2401px;top:475px;width:1px;height:18px;background:#242424;"></div>
<div style="left:2424px;top:475px;width:1px;height:18px;background:#242424;"></div>
<div style="left:2447px;top:475px;width:1px;height:18px;background:#242424;"></div>
<svg style="left:2360px;top:478px;" width="12" height="11" viewBox="0 0 12 11"><rect x="0.5" y="0.5" width="11" height="10" fill="#78a8f6" stroke="#0a0a0a" stroke-width="1"/><path d="M1 10 L11 1" stroke="#333" stroke-width="1.2"/></svg>
<svg style="left:2383px;top:478px;" width="12" height="11" viewBox="0 0 12 11"><rect x="0.5" y="0.5" width="11" height="10" fill="#e0e0e0" stroke="#0a0a0a" stroke-width="1"/><path d="M1 10 L11 1" stroke="#333" stroke-width="1.2"/></svg>
<svg style="left:2405px;top:479px;" width="16" height="9" viewBox="0 0 16 9"><path d="M0.5 8.5 V2.5 L2.6 4 Q8.5 -1.5 15 7.5 Q9.5 3.6 5.4 6 L7.4 8.5 Z" fill="#0a0a0a"/></svg>
<svg style="left:2428px;top:479px;" width="16" height="9" viewBox="0 0 16 9"><path d="M15.5 8.5 V2.5 L13.4 4 Q7.5 -1.5 1 7.5 Q6.5 3.6 10.6 6 L8.6 8.5 Z" fill="#3c3c3c"/></svg>
<svg style="left:2452px;top:477px;" width="14" height="13" viewBox="0 0 14 13"><path d="M2.5 8.5 V2 H11.5 V6" stroke="#0a0a0a" stroke-width="2.4" fill="none"/><path d="M2.5 8 Q2.5 10 6 10 H7" stroke="#0a0a0a" stroke-width="2.2" fill="none"/><path d="M6.4 6.4 L11 10 L6.4 13.4 Z" fill="#0a0a0a"/></svg>
<div style="top:476px;line-height:16px;height:16px;white-space:pre;color:#0a0a0a;font-size:13px;left:2480px;width:20px;text-align:center;font-weight:bold;">?</div>
<svg style="left:2507px;top:479px;" width="9" height="9" viewBox="0 0 9 9"><path d="M2.5 2.5 V0.8 H8.2 V5.5 H6.5" stroke="#0a0a0a" stroke-width="1.5" fill="none"/><rect x="0.8" y="3.2" width="5.4" height="5" fill="none" stroke="#0a0a0a" stroke-width="1.5"/></svg>
<svg style="left:2525px;top:480px;" width="9" height="8" viewBox="0 0 9 8"><path d="M0.8 0.5 L8.2 7.5 M8.2 0.5 L0.8 7.5" stroke="#0a0a0a" stroke-width="1.7"/></svg>
<div style="left:1950px;top:518px;width:589px;height:305px;background:#323232;border:1px solid #212121;border-radius:0 4px 4px 4px;"></div>
<div style="left:2015px;top:501px;width:58px;height:17px;background:#2a2a2a;border:1px solid #1c1c1c;border-bottom:none;border-radius:4px 4px 0 0;"></div>
<div style="top:502px;line-height:16px;height:16px;white-space:pre;left:2030px;">Node</div>
<div style="left:1950px;top:498px;width:65px;height:21px;background:#323232;border:1px solid #212121;border-bottom:none;border-radius:5px 5px 0 0;"></div>
<div style="top:501px;line-height:16px;height:16px;white-space:pre;left:1965px;">Grade</div>
<svg style="left:2527px;top:812px;" width="9" height="9" viewBox="0 0 9 9"><path d="M0 9 L9 0 M3 9 L9 3 M6 9 L9 6" stroke="#5a5a5a" stroke-width="0.8" stroke-dasharray="1 1"/></svg>
<div style="top:531px;line-height:16px;height:16px;white-space:pre;right:510px;text-align:right;">channels</div>
<div style="left:2056px;top:529px;width:123px;height:18px;background:linear-gradient(#505050,#444);border:1px solid #222;border-radius:4px;box-shadow:inset 0 1px 0 #5c5c5c;"></div>
<div style="top:530px;line-height:16px;height:16px;white-space:pre;left:2061px;">rgb</div>
<svg style="left:2163px;top:535.0px;" width="8" height="5" viewBox="0 0 8 5"><path d="M0 0 H8 L4.0 5 Z" fill="#d0d0d0"/></svg>
<div style="left:2185px;top:530px;width:16px;height:16px;background:#d23c3c;border:1px solid #232323;border-radius:2px;"></div>
<svg style="left:2187px;top:532px;" width="12" height="12" viewBox="0 0 12 12"><path d="M1.2 1.2 L10.8 10.8 M10.8 1.2 L1.2 10.8" stroke="#e2e2e2" stroke-width="2.7" fill="none"/></svg>
<div style="top:530.5px;line-height:16px;height:16px;white-space:pre;left:2207px;">red</div>
<div style="left:2238px;top:530px;width:16px;height:16px;background:#36c236;border:1px solid #232323;border-radius:2px;"></div>
<svg style="left:2240px;top:532px;" width="12" height="12" viewBox="0 0 12 12"><path d="M1.2 1.2 L10.8 10.8 M10.8 1.2 L1.2 10.8" stroke="#e2e2e2" stroke-width="2.7" fill="none"/></svg>
<div style="top:530.5px;line-height:16px;height:16px;white-space:pre;left:2260px;">green</div>
<div style="left:2305px;top:530px;width:16px;height:16px;background:#3838d0;border:1px solid #232323;border-radius:2px;"></div>
<svg style="left:2307px;top:532px;" width="12" height="12" viewBox="0 0 12 12"><path d="M1.2 1.2 L10.8 10.8 M10.8 1.2 L1.2 10.8" stroke="#e2e2e2" stroke-width="2.7" fill="none"/></svg>
<div style="top:530.5px;line-height:16px;height:16px;white-space:pre;left:2327px;">blue</div>
<div style="left:2363px;top:530px;width:15px;height:15px;background:#3d3d3d;border:1px solid #232323;border-radius:2px;"></div>
<div style="left:2382px;top:529px;width:122px;height:18px;background:linear-gradient(#505050,#444);border:1px solid #222;border-radius:4px;box-shadow:inset 0 1px 0 #5c5c5c;"></div>
<div style="top:530px;line-height:16px;height:16px;white-space:pre;left:2387px;">none</div>
<svg style="left:2488px;top:535.0px;" width="8" height="5" viewBox="0 0 8 5"><path d="M0 0 H8 L4.0 5 Z" fill="#d0d0d0"/></svg>
<div style="left:2510px;top:530px;width:17px;height:15px;background:linear-gradient(#4c4c4c,#424242);border:1px solid #212121;border-radius:4px;box-shadow:inset 0 1px 0 #585858;"></div>
<svg style="left:2515px;top:536px;" width="7" height="5" viewBox="0 0 7 5"><path d="M0 1 H7 M0 4 H7" stroke="#d0d0d0" stroke-width="0.9"/></svg>
<div style="top:551px;line-height:16px;height:16px;white-space:pre;right:510px;text-align:right;">blackpoint</div>
<div style="left:2056px;top:550px;width:74px;height:20px;background:#3b3b3b;border:1px solid #222;border-radius:3px;box-shadow:inset 0 1px 0 #2c2c2c;"></div>
<div style="top:552.5px;line-height:16px;height:16px;white-space:pre;left:2060px;">0</div>
<svg style="left:2133px;top:548px;" width="317" height="13" viewBox="0 0 317 13"><path d="M0.5 2 V10" stroke="#1b1b1b" stroke-width="1"/><path d="M8.5 5 V10" stroke="#1b1b1b" stroke-width="1"/><path d="M16.5 5 V10" stroke="#1b1b1b" stroke-width="1"/><path d="M25.5 5 V10" stroke="#1b1b1b" stroke-width="1"/><path d="M36.5 5 V10" stroke="#1b1b1b" stroke-width="1"/><path d="M47.5 5 V10" stroke="#1b1b1b" stroke-width="1"/><path d="M57.5 5 V10" stroke="#1b1b1b" stroke-width="1"/><path d="M72.5 5 V10" stroke="#1b1b1b" stroke-width="1"/><path d="M87.5 5 V10" stroke="#1b1b1b" stroke-width="1"/><path d="M107.5 2 V10" stroke="#1b1b1b" stroke-width="1"/><path d="M120.5 5 V10" stroke="#1b1b1b" stroke-width="1"/><path d="M132.5 5 V10" stroke="#1b1b1b" stroke-width="1"/><path d="M141.5 5 V10" stroke="#1b1b1b" stroke-width="1"/><path d="M149.5 5 V10" stroke="#1b1b1b" stroke-width="1"/><path d="M157.5 2 V10" stroke="#1b1b1b" stroke-width="1"/><path d="M165.5 5 V10" stroke="#1b1b1b" stroke-width="1"/><path d="M173.5 5 V10" stroke="#1b1b1b" stroke-width="1"/><path d="M183.5 5 V10" stroke="#1b1b1b" stroke-width="1"/><path d="M195.5 5 V10" stroke="#1b1b1b" stroke-width="1"/><path d="M208.5 2 V10" stroke="#1b1b1b" stroke-width="1"/><path d="M228.5 5 V10" stroke="#1b1b1b" stroke-width="1"/><path d="M243.5 5 V10" stroke="#1b1b1b" stroke-width="1"/><path d="M257.5 5 V10" stroke="#1b1b1b" stroke-width="1"/><path d="M268.5 5 V10" stroke="#1b1b1b" stroke-width="1"/><path d="M279.5 5 V10" stroke="#1b1b1b" stroke-width="1"/><path d="M289.5 5 V10" stroke="#1b1b1b" stroke-width="1"/><path d="M297.5 5 V10" stroke="#1b1b1b" stroke-width="1"/><path d="M304.5 5 V10" stroke="#1b1b1b" stroke-width="1"/><path d="M310.5 5 V10" stroke="#1b1b1b" stroke-width="1"/><path d="M316.5 2 V10" stroke="#1b1b1b" stroke-width="1"/><rect x="0" y="10" width="317" height="1" fill="#080808"/><rect x="0" y="11" width="317" height="1" fill="#5e5e5e"/><rect x="0" y="12" width="317" height="1" fill="#080808"/></svg>
<div style="top:560.3px;line-height:12px;height:12px;white-space:pre;color:#0b0b0b;font-size:10.9px;left:2133px;transform:scaleY(0.8);-webkit-text-stroke:0.3px #0b0b0b;">-1</div>
<div style="top:560.3px;line-height:12px;height:12px;white-space:pre;color:#0b0b0b;font-size:10.9px;left:2159px;transform:scaleY(0.8);-webkit-text-stroke:0.3px #0b0b0b;">-0.7</div>
<div style="top:560.3px;line-height:12px;height:12px;white-space:pre;color:#0b0b0b;font-size:10.9px;left:2191px;transform:scaleY(0.8);-webkit-text-stroke:0.3px #0b0b0b;">-0.4</div>
<div style="top:560.3px;line-height:12px;height:12px;white-space:pre;color:#0b0b0b;font-size:10.9px;left:2240px;transform:scaleY(0.8);-webkit-text-stroke:0.3px #0b0b0b;">-0.1</div>
<div style="top:560.3px;line-height:12px;height:12px;white-space:pre;color:#0b0b0b;font-size:10.9px;left:2291px;transform:scaleY(0.8);-webkit-text-stroke:0.3px #0b0b0b;">0</div>
<div style="top:560.3px;line-height:12px;height:12px;white-space:pre;color:#0b0b0b;font-size:10.9px;left:2341px;transform:scaleY(0.8);-webkit-text-stroke:0.3px #0b0b0b;">0.1</div>
<div style="top:560.3px;line-height:12px;height:12px;white-space:pre;color:#0b0b0b;font-size:10.9px;left:2391px;transform:scaleY(0.8);-webkit-text-stroke:0.3px #0b0b0b;">0.4</div>
<div style="top:560.3px;line-height:12px;height:12px;white-space:pre;color:#0b0b0b;font-size:10.9px;left:2423px;transform:scaleY(0.8);-webkit-text-stroke:0.3px #0b0b0b;">0.7</div>
<div style="top:560.3px;line-height:12px;height:12px;white-space:pre;color:#0b0b0b;font-size:10.9px;left:2444px;transform:scaleY(0.8);-webkit-text-stroke:0.3px #0b0b0b;">1</div>
<div style="left:2288px;top:553.5px;width:5px;height:9px;background:#85723a;border:1px solid #26200c;"></div>
<div style="left:2452px;top:550px;width:76px;height:20px;background:linear-gradient(#4c4c4c,#424242);border:1px solid #212121;border-radius:4px;box-shadow:inset 0 1px 0 #585858;"></div>
<div style="left:2470px;top:551px;width:1px;height:18px;background:#242424;"></div>
<div style="left:2489px;top:551px;width:1px;height:18px;background:#242424;"></div>
<div style="left:2508px;top:551px;width:1px;height:18px;background:#242424;"></div>
<div style="left:2454px;top:554px;width:13px;height:13px;background:#000;border:1px solid #000;"></div>
<div style="left:2473.5px;top:554px;width:12px;height:12px;background:conic-gradient(from 20deg,#ff60c0,#ff5050,#ffb040,#e8ff40,#50ff50,#40ffd0,#40b0ff,#6060ff,#c050ff,#ff60c0);border-radius:50%;"></div>
<div style="left:2473.5px;top:554px;width:12px;height:12px;background:radial-gradient(closest-side,rgba(238,238,238,0.98),rgba(238,238,238,0.55) 55%,rgba(238,238,238,0.1) 100%);border-radius:50%;"></div>
<div style="top:552.5px;line-height:16px;height:16px;white-space:pre;left:2488px;width:20px;text-align:center;">4</div>
<svg style="left:2511px;top:553px;" width="14" height="13" viewBox="0 0 14 13"><path d="M0.8 12 C3 4 5 3.4 6.6 6.4 C8.6 10 10.6 9 13.2 0.8" stroke="#1c1c1c" stroke-width="1.9" fill="none"/></svg>
<div style="top:573px;line-height:16px;height:16px;white-space:pre;right:510px;text-align:right;">whitepoint</div>
<div style="left:2056px;top:572px;width:74px;height:20px;background:#3b3b3b;border:1px solid #222;border-radius:3px;box-shadow:inset 0 1px 0 #2c2c2c;"></div>
<div style="top:574.5px;line-height:16px;height:16px;white-space:pre;left:2060px;">1</div>
<svg style="left:2133px;top:570px;" width="317" height="13" viewBox="0 0 317 13"><path d="M0.5 2 V10" stroke="#1b1b1b" stroke-width="1"/><path d="M15.5 5 V10" stroke="#1b1b1b" stroke-width="1"/><path d="M27.5 5 V10" stroke="#1b1b1b" stroke-width="1"/><path d="M37.5 5 V10" stroke="#1b1b1b" stroke-width="1"/><path d="M45.5 5 V10" stroke="#1b1b1b" stroke-width="1"/><path d="M50.5 2 V10" stroke="#1b1b1b" stroke-width="1"/><path d="M65.5 5 V10" stroke="#1b1b1b" stroke-width="1"/><path d="M80.5 5 V10" stroke="#1b1b1b" stroke-width="1"/><path d="M92.5 5 V10" stroke="#1b1b1b" stroke-width="1"/><path d="M100.5 5 V10" stroke="#1b1b1b" stroke-width="1"/><path d="M112.5 5 V10" stroke="#1b1b1b" stroke-width="1"/><path d="M122.5 5 V10" stroke="#1b1b1b" stroke-width="1"/><path d="M132.5 5 V10" stroke="#1b1b1b" stroke-width="1"/><path d="M141.5 5 V10" stroke="#1b1b1b" stroke-width="1"/><path d="M149.5 5 V10" stroke="#1b1b1b" stroke-width="1"/><path d="M157.5 2 V10" stroke="#1b1b1b" stroke-width="1"/><path d="M190.5 5 V10" stroke="#1b1b1b" stroke-width="1"/><path d="M222.5 2 V10" stroke="#1b1b1b" stroke-width="1"/><path d="M248.5 5 V10" stroke="#1b1b1b" stroke-width="1"/><path d="M272.5 2 V10" stroke="#1b1b1b" stroke-width="1"/><path d="M292.5 5 V10" stroke="#1b1b1b" stroke-width="1"/><path d="M316.5 2 V10" stroke="#1b1b1b" stroke-width="1"/><rect x="0" y="10" width="317" height="1" fill="#080808"/><rect x="0" y="11" width="317" height="1" fill="#5e5e5e"/><rect x="0" y="12" width="317" height="1" fill="#080808"/></svg>
<div style="top:582.3px;line-height:12px;height:12px;white-space:pre;color:#0b0b0b;font-size:10.9px;left:2133px;transform:scaleY(0.8);-webkit-text-stroke:0.3px #0b0b0b;">0</div>
<div style="top:582.3px;line-height:12px;height:12px;white-space:pre;color:#0b0b0b;font-size:10.9px;left:2183px;transform:scaleY(0.8);-webkit-text-stroke:0.3px #0b0b0b;">0.1</div>
<div style="top:582.3px;line-height:12px;height:12px;white-space:pre;color:#0b0b0b;font-size:10.9px;left:2233px;transform:scaleY(0.8);-webkit-text-stroke:0.3px #0b0b0b;">0.4</div>
<div style="top:582.3px;line-height:12px;height:12px;white-space:pre;color:#0b0b0b;font-size:10.9px;left:2265px;transform:scaleY(0.8);-webkit-text-stroke:0.3px #0b0b0b;">0.7</div>
<div style="top:582.3px;line-height:12px;height:12px;white-space:pre;color:#0b0b0b;font-size:10.9px;left:2291px;transform:scaleY(0.8);-webkit-text-stroke:0.3px #0b0b0b;">1</div>
<div style="top:582.3px;line-height:12px;height:12px;white-space:pre;color:#0b0b0b;font-size:10.9px;left:2355px;transform:scaleY(0.8);-webkit-text-stroke:0.3px #0b0b0b;">2</div>
<div style="top:582.3px;line-height:12px;height:12px;white-space:pre;color:#0b0b0b;font-size:10.9px;left:2405px;transform:scaleY(0.8);-webkit-text-stroke:0.3px #0b0b0b;">3</div>
<div style="top:582.3px;line-height:12px;height:12px;white-space:pre;color:#0b0b0b;font-size:10.9px;left:2443px;transform:scaleY(0.8);-webkit-text-stroke:0.3px #0b0b0b;">4</div>
<div style="left:2288px;top:575.5px;width:5px;height:9px;background:#85723a;border:1px solid #26200c;"></div>
<div style="left:2452px;top:572px;width:76px;height:20px;background:linear-gradient(#4c4c4c,#424242);border:1px solid #212121;border-radius:4px;box-shadow:inset 0 1px 0 #585858;"></div>
<div style="left:2470px;top:573px;width:1px;height:18px;background:#242424;"></div>
<div style="left:2489px;top:573px;width:1px;height:18px;background:#242424;"></div>
<div style="left:2508px;top:573px;width:1px;height:18px;background:#242424;"></div>
<div style="left:2454px;top:576px;width:13px;height:13px;background:#fff;border:1px solid #000;"></div>
<div style="left:2473.5px;top:576px;width:12px;height:12px;background:conic-gradient(from 20deg,#ff60c0,#ff5050,#ffb040,#e8ff40,#50ff50,#40ffd0,#40b0ff,#6060ff,#c050ff,#ff60c0);border-radius:50%;"></div>
<div style="left:2473.5px;top:576px;width:12px;height:12px;background:radial-gradient(closest-side,rgba(238,238,238,0.98),rgba(238,238,238,0.55) 55%,rgba(238,238,238,0.1) 100%);border-radius:50%;"></div>
<div style="top:574.5px;line-height:16px;height:16px;white-space:pre;left:2488px;width:20px;text-align:center;">4</div>
<svg style="left:2511px;top:575px;" width="14" height="13" viewBox="0 0 14 13"><path d="M0.8 12 C3 4 5 3.4 6.6 6.4 C8.6 10 10.6 9 13.2 0.8" stroke="#1c1c1c" stroke-width="1.9" fill="none"/></svg>
<div style="top:595px;line-height:16px;height:16px;white-space:pre;right:510px;text-align:right;">lift</div>
<div style="left:2056px;top:594px;width:74px;height:20px;background:#3b3b3b;border:1px solid #222;border-radius:3px;box-shadow:inset 0 1px 0 #2c2c2c;"></div>
<div style="top:596.5px;line-height:16px;height:16px;white-space:pre;left:2060px;">0</div>
<svg style="left:2133px;top:592px;" width="317" height="13" viewBox="0 0 317 13"><path d="M0.5 2 V10" stroke="#1b1b1b" stroke-width="1"/><path d="M8.5 5 V10" stroke="#1b1b1b" stroke-width="1"/><path d="M16.5 5 V10" stroke="#1b1b1b" stroke-width="1"/><path d="M25.5 5 V10" stroke="#1b1b1b" stroke-width="1"/><path d="M36.5 5 V10" stroke="#1b1b1b" stroke-width="1"/><path d="M47.5 5 V10" stroke="#1b1b1b" stroke-width="1"/><path d="M57.5 5 V10" stroke="#1b1b1b" stroke-width="1"/><path d="M72.5 5 V10" stroke="#1b1b1b" stroke-width="1"/><path d="M87.5 5 V10" stroke="#1b1b1b" stroke-width="1"/><path d="M107.5 2 V10" stroke="#1b1b1b" stroke-width="1"/><path d="M120.5 5 V10" stroke="#1b1b1b" stroke-width="1"/><path d="M132.5 5 V10" stroke="#1b1b1b" stroke-width="1"/><path d="M141.5 5 V10" stroke="#1b1b1b" stroke-width="1"/><path d="M149.5 5 V10" stroke="#1b1b1b" stroke-width="1"/><path d="M157.5 2 V10" stroke="#1b1b1b" stroke-width="1"/><path d="M165.5 5 V10" stroke="#1b1b1b" stroke-width="1"/><path d="M173.5 5 V10" stroke="#1b1b1b" stroke-width="1"/><path d="M183.5 5 V10" stroke="#1b1b1b" stroke-width="1"/><path d="M195.5 5 V10" stroke="#1b1b1b" stroke-width="1"/><path d="M208.5 2 V10" stroke="#1b1b1b" stroke-width="1"/><path d="M228.5 5 V10" stroke="#1b1b1b" stroke-width="1"/><path d="M243.5 5 V10" stroke="#1b1b1b" stroke-width="1"/><path d="M257.5 5 V10" stroke="#1b1b1b" stroke-width="1"/><path d="M268.5 5 V10" stroke="#1b1b1b" stroke-width="1"/><path d="M279.5 5 V10" stroke="#1b1b1b" stroke-width="1"/><path d="M289.5 5 V10" stroke="#1b1b1b" stroke-width="1"/><path d="M297.5 5 V10" stroke="#1b1b1b" stroke-width="1"/><path d="M304.5 5 V10" stroke="#1b1b1b" stroke-width="1"/><path d="M310.5 5 V10" stroke="#1b1b1b" stroke-width="1"/><path d="M316.5 2 V10" stroke="#1b1b1b" stroke-width="1"/><rect x="0" y="10" width="317" height="1" fill="#080808"/><rect x="0" y="11" width="317" height="1" fill="#5e5e5e"/><rect x="0" y="12" width="317" height="1" fill="#080808"/></svg>
<div style="top:604.3px;line-height:12px;height:12px;white-space:pre;color:#0b0b0b;font-size:10.9px;left:2133px;transform:scaleY(0.8);-webkit-text-stroke:0.3px #0b0b0b;">-1</div>
<div style="top:604.3px;line-height:12px;height:12px;white-space:pre;color:#0b0b0b;font-size:10.9px;left:2159px;transform:scaleY(0.8);-webkit-text-stroke:0.3px #0b0b0b;">-0.7</div>
<div style="top:604.3px;line-height:12px;height:12px;white-space:pre;color:#0b0b0b;font-size:10.9px;left:2191px;transform:scaleY(0.8);-webkit-text-stroke:0.3px #0b0b0b;">-0.4</div>
<div style="top:604.3px;line-height:12px;height:12px;white-space:pre;color:#0b0b0b;font-size:10.9px;left:2240px;transform:scaleY(0.8);-webkit-text-stroke:0.3px #0b0b0b;">-0.1</div>
<div style="top:604.3px;line-height:12px;height:12px;white-space:pre;color:#0b0b0b;font-size:10.9px;left:2291px;transform:scaleY(0.8);-webkit-text-stroke:0.3px #0b0b0b;">0</div>
<div style="top:604.3px;line-height:12px;height:12px;white-space:pre;color:#0b0b0b;font-size:10.9px;left:2341px;transform:scaleY(0.8);-webkit-text-stroke:0.3px #0b0b0b;">0.1</div>
<div style="top:604.3px;line-height:12px;height:12px;white-space:pre;color:#0b0b0b;font-size:10.9px;left:2391px;transform:scaleY(0.8);-webkit-text-stroke:0.3px #0b0b0b;">0.4</div>
<div style="top:604.3px;line-height:12px;height:12px;white-space:pre;color:#0b0b0b;font-size:10.9px;left:2423px;transform:scaleY(0.8);-webkit-text-stroke:0.3px #0b0b0b;">0.7</div>
<div style="top:604.3px;line-height:12px;height:12px;white-space:pre;color:#0b0b0b;font-size:10.9px;left:2444px;transform:scaleY(0.8);-webkit-text-stroke:0.3px #0b0b0b;">1</div>
<div style="left:2288px;top:597.5px;width:5px;height:9px;background:#85723a;border:1px solid #26200c;"></div>
<div style="left:2452px;top:594px;width:76px;height:20px;background:linear-gradient(#4c4c4c,#424242);border:1px solid #212121;border-radius:4px;box-shadow:inset 0 1px 0 #585858;"></div>
<div style="left:2470px;top:595px;width:1px;height:18px;background:#242424;"></div>
<div style="left:2489px;top:595px;width:1px;height:18px;background:#242424;"></div>
<div style="left:2508px;top:595px;width:1px;height:18px;background:#242424;"></div>
<div style="left:2454px;top:598px;width:13px;height:13px;background:#000;border:1px solid #000;"></div>
<div style="left:2473.5px;top:598px;width:12px;height:12px;background:conic-gradient(from 20deg,#ff60c0,#ff5050,#ffb040,#e8ff40,#50ff50,#40ffd0,#40b0ff,#6060ff,#c050ff,#ff60c0);border-radius:50%;"></div>
<div style="left:2473.5px;top:598px;width:12px;height:12px;background:radial-gradient(closest-side,rgba(238,238,238,0.98),rgba(238,238,238,0.55) 55%,rgba(238,238,238,0.1) 100%);border-radius:50%;"></div>
<div style="top:596.5px;line-height:16px;height:16px;white-space:pre;left:2488px;width:20px;text-align:center;">4</div>
<svg style="left:2511px;top:597px;" width="14" height="13" viewBox="0 0 14 13"><path d="M0.8 12 C3 4 5 3.4 6.6 6.4 C8.6 10 10.6 9 13.2 0.8" stroke="#1c1c1c" stroke-width="1.9" fill="none"/></svg>
<div style="top:617px;line-height:16px;height:16px;white-space:pre;right:510px;text-align:right;">gain</div>
<div style="left:2056px;top:616px;width:74px;height:20px;background:#3b3b3b;border:1px solid #222;border-radius:3px;box-shadow:inset 0 1px 0 #2c2c2c;"></div>
<div style="top:618.5px;line-height:16px;height:16px;white-space:pre;left:2060px;">1</div>
<svg style="left:2133px;top:614px;" width="317" height="13" viewBox="0 0 317 13"><path d="M0.5 2 V10" stroke="#1b1b1b" stroke-width="1"/><path d="M15.5 5 V10" stroke="#1b1b1b" stroke-width="1"/><path d="M27.5 5 V10" stroke="#1b1b1b" stroke-width="1"/><path d="M37.5 5 V10" stroke="#1b1b1b" stroke-width="1"/><path d="M45.5 5 V10" stroke="#1b1b1b" stroke-width="1"/><path d="M50.5 2 V10" stroke="#1b1b1b" stroke-width="1"/><path d="M65.5 5 V10" stroke="#1b1b1b" stroke-width="1"/><path d="M80.5 5 V10" stroke="#1b1b1b" stroke-width="1"/><path d="M92.5 5 V10" stroke="#1b1b1b" stroke-width="1"/><path d="M100.5 5 V10" stroke="#1b1b1b" stroke-width="1"/><path d="M112.5 5 V10" stroke="#1b1b1b" stroke-width="1"/><path d="M122.5 5 V10" stroke="#1b1b1b" stroke-width="1"/><path d="M132.5 5 V10" stroke="#1b1b1b" stroke-width="1"/><path d="M141.5 5 V10" stroke="#1b1b1b" stroke-width="1"/><path d="M149.5 5 V10" stroke="#1b1b1b" stroke-width="1"/><path d="M157.5 2 V10" stroke="#1b1b1b" stroke-width="1"/><path d="M190.5 5 V10" stroke="#1b1b1b" stroke-width="1"/><path d="M222.5 2 V10" stroke="#1b1b1b" stroke-width="1"/><path d="M248.5 5 V10" stroke="#1b1b1b" stroke-width="1"/><path d="M272.5 2 V10" stroke="#1b1b1b" stroke-width="1"/><path d="M292.5 5 V10" stroke="#1b1b1b" stroke-width="1"/><path d="M316.5 2 V10" stroke="#1b1b1b" stroke-width="1"/><rect x="0" y="10" width="317" height="1" fill="#080808"/><rect x="0" y="11" width="317" height="1" fill="#5e5e5e"/><rect x="0" y="12" width="317" height="1" fill="#080808"/></svg>
<div style="top:626.3px;line-height:12px;height:12px;white-space:pre;color:#0b0b0b;font-size:10.9px;left:2133px;transform:scaleY(0.8);-webkit-text-stroke:0.3px #0b0b0b;">0</div>
<div style="top:626.3px;line-height:12px;height:12px;white-space:pre;color:#0b0b0b;font-size:10.9px;left:2183px;transform:scaleY(0.8);-webkit-text-stroke:0.3px #0b0b0b;">0.1</div>
<div style="top:626.3px;line-height:12px;height:12px;white-space:pre;color:#0b0b0b;font-size:10.9px;left:2233px;transform:scaleY(0.8);-webkit-text-stroke:0.3px #0b0b0b;">0.4</div>
<div style="top:626.3px;line-height:12px;height:12px;white-space:pre;color:#0b0b0b;font-size:10.9px;left:2265px;transform:scaleY(0.8);-webkit-text-stroke:0.3px #0b0b0b;">0.7</div>
<div style="top:626.3px;line-height:12px;height:12px;white-space:pre;color:#0b0b0b;font-size:10.9px;left:2291px;transform:scaleY(0.8);-webkit-text-stroke:0.3px #0b0b0b;">1</div>
<div style="top:626.3px;line-height:12px;height:12px;white-space:pre;color:#0b0b0b;font-size:10.9px;left:2355px;transform:scaleY(0.8);-webkit-text-stroke:0.3px #0b0b0b;">2</div>
<div style="top:626.3px;line-height:12px;height:12px;white-space:pre;color:#0b0b0b;font-size:10.9px;left:2405px;transform:scaleY(0.8);-webkit-text-stroke:0.3px #0b0b0b;">3</div>
<div style="top:626.3px;line-height:12px;height:12px;white-space:pre;color:#0b0b0b;font-size:10.9px;left:2443px;transform:scaleY(0.8);-webkit-text-stroke:0.3px #0b0b0b;">4</div>
<div style="left:2288px;top:619.5px;width:5px;height:9px;background:#85723a;border:1px solid #26200c;"></div>
<div style="left:2452px;top:616px;width:76px;height:20px;background:linear-gradient(#4c4c4c,#424242);border:1px solid #212121;border-radius:4px;box-shadow:inset 0 1px 0 #585858;"></div>
<div style="left:2470px;top:617px;width:1px;height:18px;background:#242424;"></div>
<div style="left:2489px;top:617px;width:1px;height:18px;background:#242424;"></div>
<div style="left:2508px;top:617px;width:1px;height:18px;background:#242424;"></div>
<div style="left:2454px;top:620px;width:13px;height:13px;background:#fff;border:1px solid #000;"></div>
<div style="left:2473.5px;top:620px;width:12px;height:12px;background:conic-gradient(from 20deg,#ff60c0,#ff5050,#ffb040,#e8ff40,#50ff50,#40ffd0,#40b0ff,#6060ff,#c050ff,#ff60c0);border-radius:50%;"></div>
<div style="left:2473.5px;top:620px;width:12px;height:12px;background:radial-gradient(closest-side,rgba(238,238,238,0.98),rgba(238,238,238,0.55) 55%,rgba(238,238,238,0.1) 100%);border-radius:50%;"></div>
<div style="top:618.5px;line-height:16px;height:16px;white-space:pre;left:2488px;width:20px;text-align:center;">4</div>
<svg style="left:2511px;top:619px;" width="14" height="13" viewBox="0 0 14 13"><path d="M0.8 12 C3 4 5 3.4 6.6 6.4 C8.6 10 10.6 9 13.2 0.8" stroke="#1c1c1c" stroke-width="1.9" fill="none"/></svg>
<div style="top:639px;line-height:16px;height:16px;white-space:pre;right:510px;text-align:right;">multiply</div>
<div style="left:2056px;top:638px;width:74px;height:20px;background:#3b3b3b;border:1px solid #222;border-radius:3px;box-shadow:inset 0 1px 0 #2c2c2c;"></div>
<div style="top:640.5px;line-height:16px;height:16px;white-space:pre;left:2060px;">1</div>
<svg style="left:2133px;top:636px;" width="317" height="13" viewBox="0 0 317 13"><path d="M0.5 2 V10" stroke="#1b1b1b" stroke-width="1"/><path d="M15.5 5 V10" stroke="#1b1b1b" stroke-width="1"/><path d="M27.5 5 V10" stroke="#1b1b1b" stroke-width="1"/><path d="M37.5 5 V10" stroke="#1b1b1b" stroke-width="1"/><path d="M45.5 5 V10" stroke="#1b1b1b" stroke-width="1"/><path d="M50.5 2 V10" stroke="#1b1b1b" stroke-width="1"/><path d="M65.5 5 V10" stroke="#1b1b1b" stroke-width="1"/><path d="M80.5 5 V10" stroke="#1b1b1b" stroke-width="1"/><path d="M92.5 5 V10" stroke="#1b1b1b" stroke-width="1"/><path d="M100.5 5 V10" stroke="#1b1b1b" stroke-width="1"/><path d="M112.5 5 V10" stroke="#1b1b1b" stroke-width="1"/><path d="M122.5 5 V10" stroke="#1b1b1b" stroke-width="1"/><path d="M132.5 5 V10" stroke="#1b1b1b" stroke-width="1"/><path d="M141.5 5 V10" stroke="#1b1b1b" stroke-width="1"/><path d="M149.5 5 V10" stroke="#1b1b1b" stroke-width="1"/><path d="M157.5 2 V10" stroke="#1b1b1b" stroke-width="1"/><path d="M190.5 5 V10" stroke="#1b1b1b" stroke-width="1"/><path d="M222.5 2 V10" stroke="#1b1b1b" stroke-width="1"/><path d="M248.5 5 V10" stroke="#1b1b1b" stroke-width="1"/><path d="M272.5 2 V10" stroke="#1b1b1b" stroke-width="1"/><path d="M292.5 5 V10" stroke="#1b1b1b" stroke-width="1"/><path d="M316.5 2 V10" stroke="#1b1b1b" stroke-width="1"/><rect x="0" y="10" width="317" height="1" fill="#080808"/><rect x="0" y="11" width="317" height="1" fill="#5e5e5e"/><rect x="0" y="12" width="317" height="1" fill="#080808"/></svg>
<div style="top:648.3px;line-height:12px;height:12px;white-space:pre;color:#0b0b0b;font-size:10.9px;left:2133px;transform:scaleY(0.8);-webkit-text-stroke:0.3px #0b0b0b;">0</div>
<div style="top:648.3px;line-height:12px;height:12px;white-space:pre;color:#0b0b0b;font-size:10.9px;left:2183px;transform:scaleY(0.8);-webkit-text-stroke:0.3px #0b0b0b;">0.1</div>
<div style="top:648.3px;line-height:12px;height:12px;white-space:pre;color:#0b0b0b;font-size:10.9px;left:2233px;transform:scaleY(0.8);-webkit-text-stroke:0.3px #0b0b0b;">0.4</div>
<div style="top:648.3px;line-height:12px;height:12px;white-space:pre;color:#0b0b0b;font-size:10.9px;left:2265px;transform:scaleY(0.8);-webkit-text-stroke:0.3px #0b0b0b;">0.7</div>
<div style="top:648.3px;line-height:12px;height:12px;white-space:pre;color:#0b0b0b;font-size:10.9px;left:2291px;transform:scaleY(0.8);-webkit-text-stroke:0.3px #0b0b0b;">1</div>
<div style="top:648.3px;line-height:12px;height:12px;white-space:pre;color:#0b0b0b;font-size:10.9px;left:2355px;transform:scaleY(0.8);-webkit-text-stroke:0.3px #0b0b0b;">2</div>
<div style="top:648.3px;line-height:12px;height:12px;white-space:pre;color:#0b0b0b;font-size:10.9px;left:2405px;transform:scaleY(0.8);-webkit-text-stroke:0.3px #0b0b0b;">3</div>
<div style="top:648.3px;line-height:12px;height:12px;white-space:pre;color:#0b0b0b;font-size:10.9px;left:2443px;transform:scaleY(0.8);-webkit-text-stroke:0.3px #0b0b0b;">4</div>
<div style="left:2288px;top:641.5px;width:5px;height:9px;background:#85723a;border:1px solid #26200c;"></div>
<div style="left:2452px;top:638px;width:76px;height:20px;background:linear-gradient(#4c4c4c,#424242);border:1px solid #212121;border-radius:4px;box-shadow:inset 0 1px 0 #585858;"></div>
<div style="left:2470px;top:639px;width:1px;height:18px;background:#242424;"></div>
<div style="left:2489px;top:639px;width:1px;height:18px;background:#242424;"></div>
<div style="left:2508px;top:639px;width:1px;height:18px;background:#242424;"></div>
<div style="left:2454px;top:642px;width:13px;height:13px;background:#fff;border:1px solid #000;"></div>
<div style="left:2473.5px;top:642px;width:12px;height:12px;background:conic-gradient(from 20deg,#ff60c0,#ff5050,#ffb040,#e8ff40,#50ff50,#40ffd0,#40b0ff,#6060ff,#c050ff,#ff60c0);border-radius:50%;"></div>
<div style="left:2473.5px;top:642px;width:12px;height:12px;background:radial-gradient(closest-side,rgba(238,238,238,0.98),rgba(238,238,238,0.55) 55%,rgba(238,238,238,0.1) 100%);border-radius:50%;"></div>
<div style="top:640.5px;line-height:16px;height:16px;white-space:pre;left:2488px;width:20px;text-align:center;">4</div>
<svg style="left:2511px;top:641px;" width="14" height="13" viewBox="0 0 14 13"><path d="M0.8 12 C3 4 5 3.4 6.6 6.4 C8.6 10 10.6 9 13.2 0.8" stroke="#1c1c1c" stroke-width="1.9" fill="none"/></svg>
<div style="top:661px;line-height:16px;height:16px;white-space:pre;right:510px;text-align:right;">offset</div>
<div style="left:2056px;top:660px;width:74px;height:20px;background:#3b3b3b;border:1px solid #222;border-radius:3px;box-shadow:inset 0 1px 0 #2c2c2c;"></div>
<div style="top:662.5px;line-height:16px;height:16px;white-space:pre;left:2060px;">0</div>
<svg style="left:2133px;top:658px;" width="317" height="13" viewBox="0 0 317 13"><path d="M0.5 2 V10" stroke="#1b1b1b" stroke-width="1"/><path d="M8.5 5 V10" stroke="#1b1b1b" stroke-width="1"/><path d="M16.5 5 V10" stroke="#1b1b1b" stroke-width="1"/><path d="M25.5 5 V10" stroke="#1b1b1b" stroke-width="1"/><path d="M36.5 5 V10" stroke="#1b1b1b" stroke-width="1"/><path d="M47.5 5 V10" stroke="#1b1b1b" stroke-width="1"/><path d="M57.5 5 V10" stroke="#1b1b1b" stroke-width="1"/><path d="M72.5 5 V10" stroke="#1b1b1b" stroke-width="1"/><path d="M87.5 5 V10" stroke="#1b1b1b" stroke-width="1"/><path d="M107.5 2 V10" stroke="#1b1b1b" stroke-width="1"/><path d="M120.5 5 V10" stroke="#1b1b1b" stroke-width="1"/><path d="M132.5 5 V10" stroke="#1b1b1b" stroke-width="1"/><path d="M141.5 5 V10" stroke="#1b1b1b" stroke-width="1"/><path d="M149.5 5 V10" stroke="#1b1b1b" stroke-width="1"/><path d="M157.5 2 V10" stroke="#1b1b1b" stroke-width="1"/><path d="M165.5 5 V10" stroke="#1b1b1b" stroke-width="1"/><path d="M173.5 5 V10" stroke="#1b1b1b" stroke-width="1"/><path d="M183.5 5 V10" stroke="#1b1b1b" stroke-width="1"/><path d="M195.5 5 V10" stroke="#1b1b1b" stroke-width="1"/><path d="M208.5 2 V10" stroke="#1b1b1b" stroke-width="1"/><path d="M228.5 5 V10" stroke="#1b1b1b" stroke-width="1"/><path d="M243.5 5 V10" stroke="#1b1b1b" stroke-width="1"/><path d="M257.5 5 V10" stroke="#1b1b1b" stroke-width="1"/><path d="M268.5 5 V10" stroke="#1b1b1b" stroke-width="1"/><path d="M279.5 5 V10" stroke="#1b1b1b" stroke-width="1"/><path d="M289.5 5 V10" stroke="#1b1b1b" stroke-width="1"/><path d="M297.5 5 V10" stroke="#1b1b1b" stroke-width="1"/><path d="M304.5 5 V10" stroke="#1b1b1b" stroke-width="1"/><path d="M310.5 5 V10" stroke="#1b1b1b" stroke-width="1"/><path d="M316.5 2 V10" stroke="#1b1b1b" stroke-width="1"/><rect x="0" y="10" width="317" height="1" fill="#080808"/><rect x="0" y="11" width="317" height="1" fill="#5e5e5e"/><rect x="0" y="12" width="317" height="1" fill="#080808"/></svg>
<div style="top:670.3px;line-height:12px;height:12px;white-space:pre;color:#0b0b0b;font-size:10.9px;left:2133px;transform:scaleY(0.8);-webkit-text-stroke:0.3px #0b0b0b;">-1</div>
<div style="top:670.3px;line-height:12px;height:12px;white-space:pre;color:#0b0b0b;font-size:10.9px;left:2159px;transform:scaleY(0.8);-webkit-text-stroke:0.3px #0b0b0b;">-0.7</div>
<div style="top:670.3px;line-height:12px;height:12px;white-space:pre;color:#0b0b0b;font-size:10.9px;left:2191px;transform:scaleY(0.8);-webkit-text-stroke:0.3px #0b0b0b;">-0.4</div>
<div style="top:670.3px;line-height:12px;height:12px;white-space:pre;color:#0b0b0b;font-size:10.9px;left:2240px;transform:scaleY(0.8);-webkit-text-stroke:0.3px #0b0b0b;">-0.1</div>
<div style="top:670.3px;line-height:12px;height:12px;white-space:pre;color:#0b0b0b;font-size:10.9px;left:2291px;transform:scaleY(0.8);-webkit-text-stroke:0.3px #0b0b0b;">0</div>
<div style="top:670.3px;line-height:12px;height:12px;white-space:pre;color:#0b0b0b;font-size:10.9px;left:2341px;transform:scaleY(0.8);-webkit-text-stroke:0.3px #0b0b0b;">0.1</div>
<div style="top:670.3px;line-height:12px;height:12px;white-space:pre;color:#0b0b0b;font-size:10.9px;left:2391px;transform:scaleY(0.8);-webkit-text-stroke:0.3px #0b0b0b;">0.4</div>
<div style="top:670.3px;line-height:12px;height:12px;white-space:pre;color:#0b0b0b;font-size:10.9px;left:2423px;transform:scaleY(0.8);-webkit-text-stroke:0.3px #0b0b0b;">0.7</div>
<div style="top:670.3px;line-height:12px;height:12px;white-space:pre;color:#0b0b0b;font-size:10.9px;left:2444px;transform:scaleY(0.8);-webkit-text-stroke:0.3px #0b0b0b;">1</div>
<div style="left:2288px;top:663.5px;width:5px;height:9px;background:#85723a;border:1px solid #26200c;"></div>
<div style="left:2452px;top:660px;width:76px;height:20px;background:linear-gradient(#4c4c4c,#424242);border:1px solid #212121;border-radius:4px;box-shadow:inset 0 1px 0 #585858;"></div>
<div style="left:2470px;top:661px;width:1px;height:18px;background:#242424;"></div>
<div style="left:2489px;top:661px;width:1px;height:18px;background:#242424;"></div>
<div style="left:2508px;top:661px;width:1px;height:18px;background:#242424;"></div>
<div style="left:2454px;top:664px;width:13px;height:13px;background:#000;border:1px solid #000;"></div>
<div style="left:2473.5px;top:664px;width:12px;height:12px;background:conic-gradient(from 20deg,#ff60c0,#ff5050,#ffb040,#e8ff40,#50ff50,#40ffd0,#40b0ff,#6060ff,#c050ff,#ff60c0);border-radius:50%;"></div>
<div style="left:2473.5px;top:664px;width:12px;height:12px;background:radial-gradient(closest-side,rgba(238,238,238,0.98),rgba(238,238,238,0.55) 55%,rgba(238,238,238,0.1) 100%);border-radius:50%;"></div>
<div style="top:662.5px;line-height:16px;height:16px;white-space:pre;left:2488px;width:20px;text-align:center;">4</div>
<svg style="left:2511px;top:663px;" width="14" height="13" viewBox="0 0 14 13"><path d="M0.8 12 C3 4 5 3.4 6.6 6.4 C8.6 10 10.6 9 13.2 0.8" stroke="#1c1c1c" stroke-width="1.9" fill="none"/></svg>
<div style="top:683px;line-height:16px;height:16px;white-space:pre;right:510px;text-align:right;">gamma</div>
<div style="left:2056px;top:682px;width:74px;height:20px;background:#3b3b3b;border:1px solid #222;border-radius:3px;box-shadow:inset 0 1px 0 #2c2c2c;"></div>
<div style="top:684.5px;line-height:16px;height:16px;white-space:pre;left:2060px;">1</div>
<svg style="left:2133px;top:680px;" width="317" height="13" viewBox="0 0 317 13"><path d="M0.5 2 V10" stroke="#1b1b1b" stroke-width="1"/><path d="M22.5 5 V10" stroke="#1b1b1b" stroke-width="1"/><path d="M39.5 5 V10" stroke="#1b1b1b" stroke-width="1"/><path d="M54.5 5 V10" stroke="#1b1b1b" stroke-width="1"/><path d="M67.5 5 V10" stroke="#1b1b1b" stroke-width="1"/><path d="M79.5 5 V10" stroke="#1b1b1b" stroke-width="1"/><path d="M89.5 5 V10" stroke="#1b1b1b" stroke-width="1"/><path d="M107.5 5 V10" stroke="#1b1b1b" stroke-width="1"/><path d="M122.5 5 V10" stroke="#1b1b1b" stroke-width="1"/><path d="M135.5 5 V10" stroke="#1b1b1b" stroke-width="1"/><path d="M147.5 5 V10" stroke="#1b1b1b" stroke-width="1"/><path d="M157.5 2 V10" stroke="#1b1b1b" stroke-width="1"/><path d="M196.5 5 V10" stroke="#1b1b1b" stroke-width="1"/><path d="M228.5 2 V10" stroke="#1b1b1b" stroke-width="1"/><path d="M250.5 5 V10" stroke="#1b1b1b" stroke-width="1"/><path d="M268.5 5 V10" stroke="#1b1b1b" stroke-width="1"/><path d="M283.5 5 V10" stroke="#1b1b1b" stroke-width="1"/><path d="M296.5 5 V10" stroke="#1b1b1b" stroke-width="1"/><path d="M306.5 5 V10" stroke="#1b1b1b" stroke-width="1"/><path d="M316.5 2 V10" stroke="#1b1b1b" stroke-width="1"/><rect x="0" y="10" width="317" height="1" fill="#080808"/><rect x="0" y="11" width="317" height="1" fill="#5e5e5e"/><rect x="0" y="12" width="317" height="1" fill="#080808"/></svg>
<div style="top:692.3px;line-height:12px;height:12px;white-space:pre;color:#0b0b0b;font-size:10.9px;left:2133px;transform:scaleY(0.8);-webkit-text-stroke:0.3px #0b0b0b;">0.2</div>
<div style="top:692.3px;line-height:12px;height:12px;white-space:pre;color:#0b0b0b;font-size:10.9px;left:2172px;transform:scaleY(0.8);-webkit-text-stroke:0.3px #0b0b0b;">0.3</div>
<div style="top:692.3px;line-height:12px;height:12px;white-space:pre;color:#0b0b0b;font-size:10.9px;left:2200px;transform:scaleY(0.8);-webkit-text-stroke:0.3px #0b0b0b;">0.4</div>
<div style="top:692.3px;line-height:12px;height:12px;white-space:pre;color:#0b0b0b;font-size:10.9px;left:2222px;transform:scaleY(0.8);-webkit-text-stroke:0.3px #0b0b0b;">0.5</div>
<div style="top:692.3px;line-height:12px;height:12px;white-space:pre;color:#0b0b0b;font-size:10.9px;left:2255px;transform:scaleY(0.8);-webkit-text-stroke:0.3px #0b0b0b;">0.7</div>
<div style="top:692.3px;line-height:12px;height:12px;white-space:pre;color:#0b0b0b;font-size:10.9px;left:2291px;transform:scaleY(0.8);-webkit-text-stroke:0.3px #0b0b0b;">1</div>
<div style="top:692.3px;line-height:12px;height:12px;white-space:pre;color:#0b0b0b;font-size:10.9px;left:2361px;transform:scaleY(0.8);-webkit-text-stroke:0.3px #0b0b0b;">2</div>
<div style="top:692.3px;line-height:12px;height:12px;white-space:pre;color:#0b0b0b;font-size:10.9px;left:2401px;transform:scaleY(0.8);-webkit-text-stroke:0.3px #0b0b0b;">3</div>
<div style="top:692.3px;line-height:12px;height:12px;white-space:pre;color:#0b0b0b;font-size:10.9px;left:2429px;transform:scaleY(0.8);-webkit-text-stroke:0.3px #0b0b0b;">4</div>
<div style="top:692.3px;line-height:12px;height:12px;white-space:pre;color:#0b0b0b;font-size:10.9px;left:2445px;transform:scaleY(0.8);-webkit-text-stroke:0.3px #0b0b0b;">5</div>
<div style="left:2288px;top:685.5px;width:5px;height:9px;background:#85723a;border:1px solid #26200c;"></div>
<div style="left:2452px;top:682px;width:76px;height:20px;background:linear-gradient(#4c4c4c,#424242);border:1px solid #212121;border-radius:4px;box-shadow:inset 0 1px 0 #585858;"></div>
<div style="left:2470px;top:683px;width:1px;height:18px;background:#242424;"></div>
<div style="left:2489px;top:683px;width:1px;height:18px;background:#242424;"></div>
<div style="left:2508px;top:683px;width:1px;height:18px;background:#242424;"></div>
<div style="left:2454px;top:686px;width:13px;height:13px;background:#fff;border:1px solid #000;"></div>
<div style="left:2473.5px;top:686px;width:12px;height:12px;background:conic-gradient(from 20deg,#ff60c0,#ff5050,#ffb040,#e8ff40,#50ff50,#40ffd0,#40b0ff,#6060ff,#c050ff,#ff60c0);border-radius:50%;"></div>
<div style="left:2473.5px;top:686px;width:12px;height:12px;background:radial-gradient(closest-side,rgba(238,238,238,0.98),rgba(238,238,238,0.55) 55%,rgba(238,238,238,0.1) 100%);border-radius:50%;"></div>
<div style="top:684.5px;line-height:16px;height:16px;white-space:pre;left:2488px;width:20px;text-align:center;">4</div>
<svg style="left:2511px;top:685px;" width="14" height="13" viewBox="0 0 14 13"><path d="M0.8 12 C3 4 5 3.4 6.6 6.4 C8.6 10 10.6 9 13.2 0.8" stroke="#1c1c1c" stroke-width="1.9" fill="none"/></svg>
<div style="left:2056px;top:706px;width:16px;height:16px;background:#3d3d3d;border:1px solid #232323;border-radius:2px;"></div>
<div style="top:707px;line-height:16px;height:16px;white-space:pre;left:2078px;">reverse</div>
<div style="left:2130px;top:706px;width:16px;height:16px;background:#3d3d3d;border:1px solid #232323;border-radius:2px;"></div>
<svg style="left:2132px;top:708px;" width="12" height="12" viewBox="0 0 12 12"><path d="M1.2 1.2 L10.8 10.8 M10.8 1.2 L1.2 10.8" stroke="#e2e2e2" stroke-width="2.7" fill="none"/></svg>
<div style="top:707px;line-height:16px;height:16px;white-space:pre;left:2152px;">black clamp</div>
<div style="left:2228px;top:706px;width:16px;height:16px;background:#3d3d3d;border:1px solid #232323;border-radius:2px;"></div>
<div style="top:707px;line-height:16px;height:16px;white-space:pre;left:2250px;">white clamp</div>
<div style="top:729px;line-height:16px;height:16px;white-space:pre;right:510px;text-align:right;">mask</div>
<div style="left:2056px;top:728.5px;width:13px;height:15px;background:#3d3d3d;border:1px solid #232323;border-radius:2px;"></div>
<div style="left:2075px;top:726.5px;width:242px;height:18px;background:linear-gradient(#505050,#444);border:1px solid #222;border-radius:4px;box-shadow:inset 0 1px 0 #5c5c5c;"></div>
<div style="top:728.5px;line-height:16px;height:16px;white-space:pre;left:2080px;">none</div>
<svg style="left:2301px;top:733.5px;" width="8" height="5" viewBox="0 0 8 5"><path d="M0 0 H8 L4.0 5 Z" fill="#d0d0d0"/></svg>
<div style="left:2324px;top:729px;width:17px;height:15px;background:linear-gradient(#4c4c4c,#424242);border:1px solid #212121;border-radius:4px;box-shadow:inset 0 1px 0 #585858;"></div>
<svg style="left:2329px;top:735px;" width="7" height="5" viewBox="0 0 7 5"><path d="M0 1 H7 M0 4 H7" stroke="#d0d0d0" stroke-width="0.9"/></svg>
<div style="left:2344px;top:728.5px;width:15px;height:15px;background:#3d3d3d;border:1px solid #232323;border-radius:2px;"></div>
<div style="top:729px;line-height:16px;height:16px;white-space:pre;left:2365px;">inject</div>
<div style="left:2404px;top:728.5px;width:15px;height:15px;background:#3d3d3d;border:1px solid #232323;border-radius:2px;"></div>
<div style="top:729px;line-height:16px;height:16px;white-space:pre;left:2426px;">invert</div>
<div style="left:2467px;top:728.5px;width:15px;height:15px;background:#3d3d3d;border:1px solid #232323;border-radius:2px;"></div>
<div style="top:729px;line-height:16px;height:16px;white-space:pre;left:2489px;">fringe</div>
<div style="top:751px;line-height:16px;height:16px;white-space:pre;right:510px;text-align:right;">(un)premult by</div>
<div style="left:2056px;top:750.5px;width:13px;height:15px;background:#3d3d3d;border:1px solid #232323;border-radius:2px;"></div>
<div style="left:2075px;top:748.5px;width:366px;height:18px;background:linear-gradient(#505050,#444);border:1px solid #222;border-radius:4px;box-shadow:inset 0 1px 0 #5c5c5c;"></div>
<div style="top:750.5px;line-height:16px;height:16px;white-space:pre;left:2080px;">none</div>
<svg style="left:2425px;top:755.5px;" width="8" height="5" viewBox="0 0 8 5"><path d="M0 0 H8 L4.0 5 Z" fill="#d0d0d0"/></svg>
<div style="left:2448px;top:751px;width:17px;height:15px;background:linear-gradient(#4c4c4c,#424242);border:1px solid #212121;border-radius:4px;box-shadow:inset 0 1px 0 #585858;"></div>
<svg style="left:2453px;top:757px;" width="7" height="5" viewBox="0 0 7 5"><path d="M0 1 H7 M0 4 H7" stroke="#d0d0d0" stroke-width="0.9"/></svg>
<div style="left:2467px;top:750.5px;width:15px;height:15px;background:#3d3d3d;border:1px solid #232323;border-radius:2px;"></div>
<div style="top:751px;line-height:16px;height:16px;white-space:pre;left:2489px;">invert</div>
<div style="top:773px;line-height:16px;height:16px;white-space:pre;right:510px;text-align:right;">mix luminance</div>
<div style="left:2056px;top:772px;width:16px;height:16px;background:#3d3d3d;border:1px solid #232323;border-radius:2px;"></div>
<svg style="left:2058px;top:774px;" width="12" height="12" viewBox="0 0 12 12"><path d="M1.2 1.2 L10.8 10.8 M10.8 1.2 L1.2 10.8" stroke="#e2e2e2" stroke-width="2.7" fill="none"/></svg>
<div style="left:2074.5px;top:770.5px;width:73px;height:20px;background:#3b3b3b;border:1px solid #222;border-radius:3px;box-shadow:inset 0 1px 0 #2c2c2c;"></div>
<div style="top:773px;line-height:16px;height:16px;white-space:pre;left:2078.5px;">0</div>
<svg style="left:2151px;top:768px;" width="355" height="13" viewBox="0 0 355 13"><path d="M0.5 2 V10" stroke="#1b1b1b" stroke-width="1"/><path d="M35.9 5 V10" stroke="#1b1b1b" stroke-width="1"/><path d="M71.3 5 V10" stroke="#1b1b1b" stroke-width="1"/><path d="M106.7 5 V10" stroke="#1b1b1b" stroke-width="1"/><path d="M142.1 5 V10" stroke="#1b1b1b" stroke-width="1"/><path d="M177.5 5 V10" stroke="#1b1b1b" stroke-width="1"/><path d="M212.9 5 V10" stroke="#1b1b1b" stroke-width="1"/><path d="M248.3 5 V10" stroke="#1b1b1b" stroke-width="1"/><path d="M283.7 5 V10" stroke="#1b1b1b" stroke-width="1"/><path d="M319.1 5 V10" stroke="#1b1b1b" stroke-width="1"/><path d="M354.5 2 V10" stroke="#1b1b1b" stroke-width="1"/><rect x="0" y="10" width="355" height="1" fill="#080808"/><rect x="0" y="11" width="355" height="1" fill="#5e5e5e"/><rect x="0" y="12" width="355" height="1" fill="#080808"/></svg>
<div style="top:780.6px;line-height:12px;height:12px;white-space:pre;color:#0b0b0b;font-size:10.9px;left:2151.5px;transform:scaleY(0.8);-webkit-text-stroke:0.3px #0b0b0b;">0</div>
<div style="top:780.6px;line-height:12px;height:12px;white-space:pre;color:#0b0b0b;font-size:10.9px;left:2186.5px;transform:scaleY(0.8);-webkit-text-stroke:0.3px #0b0b0b;">0.1</div>
<div style="top:780.6px;line-height:12px;height:12px;white-space:pre;color:#0b0b0b;font-size:10.9px;left:2222.0px;transform:scaleY(0.8);-webkit-text-stroke:0.3px #0b0b0b;">0.2</div>
<div style="top:780.6px;line-height:12px;height:12px;white-space:pre;color:#0b0b0b;font-size:10.9px;left:2257.5px;transform:scaleY(0.8);-webkit-text-stroke:0.3px #0b0b0b;">0.3</div>
<div style="top:780.6px;line-height:12px;height:12px;white-space:pre;color:#0b0b0b;font-size:10.9px;left:2293.0px;transform:scaleY(0.8);-webkit-text-stroke:0.3px #0b0b0b;">0.4</div>
<div style="top:780.6px;line-height:12px;height:12px;white-space:pre;color:#0b0b0b;font-size:10.9px;left:2328.5px;transform:scaleY(0.8);-webkit-text-stroke:0.3px #0b0b0b;">0.5</div>
<div style="top:780.6px;line-height:12px;height:12px;white-space:pre;color:#0b0b0b;font-size:10.9px;left:2364.0px;transform:scaleY(0.8);-webkit-text-stroke:0.3px #0b0b0b;">0.6</div>
<div style="top:780.6px;line-height:12px;height:12px;white-space:pre;color:#0b0b0b;font-size:10.9px;left:2399.5px;transform:scaleY(0.8);-webkit-text-stroke:0.3px #0b0b0b;">0.7</div>
<div style="top:780.6px;line-height:12px;height:12px;white-space:pre;color:#0b0b0b;font-size:10.9px;left:2435.0px;transform:scaleY(0.8);-webkit-text-stroke:0.3px #0b0b0b;">0.8</div>
<div style="top:780.6px;line-height:12px;height:12px;white-space:pre;color:#0b0b0b;font-size:10.9px;left:2470.5px;transform:scaleY(0.8);-webkit-text-stroke:0.3px #0b0b0b;">0.9</div>
<div style="top:780.6px;line-height:12px;height:12px;white-space:pre;color:#0b0b0b;font-size:10.9px;left:2500px;transform:scaleY(0.8);-webkit-text-stroke:0.3px #0b0b0b;">1</div>
<div style="left:2150px;top:773.5px;width:5px;height:9px;background:#85723a;border:1px solid #26200c;"></div>
<div style="left:2509px;top:770.5px;width:19px;height:19px;background:linear-gradient(#4c4c4c,#424242);border:1px solid #212121;border-radius:4px;box-shadow:inset 0 1px 0 #585858;"></div>
<svg style="left:2512px;top:773.5px;" width="14" height="13" viewBox="0 0 14 13"><path d="M0.8 12 C3 4 5 3.4 6.6 6.4 C8.6 10 10.6 9 13.2 0.8" stroke="#1c1c1c" stroke-width="1.9" fill="none"/></svg>
<div style="top:795px;line-height:16px;height:16px;white-space:pre;right:510px;text-align:right;">mix</div>
<div style="left:2056px;top:793px;width:74px;height:20px;background:#3b3b3b;border:1px solid #222;border-radius:3px;box-shadow:inset 0 1px 0 #2c2c2c;"></div>
<div style="top:795.5px;line-height:16px;height:16px;white-space:pre;left:2060px;">1</div>
<svg style="left:2133px;top:791px;" width="373" height="13" viewBox="0 0 373 13"><path d="M0.5 2 V10" stroke="#1b1b1b" stroke-width="1"/><path d="M37.7 5 V10" stroke="#1b1b1b" stroke-width="1"/><path d="M74.9 5 V10" stroke="#1b1b1b" stroke-width="1"/><path d="M112.1 5 V10" stroke="#1b1b1b" stroke-width="1"/><path d="M149.3 5 V10" stroke="#1b1b1b" stroke-width="1"/><path d="M186.5 5 V10" stroke="#1b1b1b" stroke-width="1"/><path d="M223.7 5 V10" stroke="#1b1b1b" stroke-width="1"/><path d="M260.9 5 V10" stroke="#1b1b1b" stroke-width="1"/><path d="M298.1 5 V10" stroke="#1b1b1b" stroke-width="1"/><path d="M335.3 5 V10" stroke="#1b1b1b" stroke-width="1"/><path d="M372.5 2 V10" stroke="#1b1b1b" stroke-width="1"/><rect x="0" y="10" width="373" height="1" fill="#080808"/><rect x="0" y="11" width="373" height="1" fill="#5e5e5e"/><rect x="0" y="12" width="373" height="1" fill="#080808"/></svg>
<div style="top:803.3px;line-height:12px;height:12px;white-space:pre;color:#0b0b0b;font-size:10.9px;left:2133.5px;transform:scaleY(0.8);-webkit-text-stroke:0.3px #0b0b0b;">0</div>
<div style="top:803.3px;line-height:12px;height:12px;white-space:pre;color:#0b0b0b;font-size:10.9px;left:2170.3px;transform:scaleY(0.8);-webkit-text-stroke:0.3px #0b0b0b;">0.1</div>
<div style="top:803.3px;line-height:12px;height:12px;white-space:pre;color:#0b0b0b;font-size:10.9px;left:2207.6px;transform:scaleY(0.8);-webkit-text-stroke:0.3px #0b0b0b;">0.2</div>
<div style="top:803.3px;line-height:12px;height:12px;white-space:pre;color:#0b0b0b;font-size:10.9px;left:2244.9px;transform:scaleY(0.8);-webkit-text-stroke:0.3px #0b0b0b;">0.3</div>
<div style="top:803.3px;line-height:12px;height:12px;white-space:pre;color:#0b0b0b;font-size:10.9px;left:2282.2px;transform:scaleY(0.8);-webkit-text-stroke:0.3px #0b0b0b;">0.4</div>
<div style="top:803.3px;line-height:12px;height:12px;white-space:pre;color:#0b0b0b;font-size:10.9px;left:2319.5px;transform:scaleY(0.8);-webkit-text-stroke:0.3px #0b0b0b;">0.5</div>
<div style="top:803.3px;line-height:12px;height:12px;white-space:pre;color:#0b0b0b;font-size:10.9px;left:2356.8px;transform:scaleY(0.8);-webkit-text-stroke:0.3px #0b0b0b;">0.6</div>
<div style="top:803.3px;line-height:12px;height:12px;white-space:pre;color:#0b0b0b;font-size:10.9px;left:2394.1px;transform:scaleY(0.8);-webkit-text-stroke:0.3px #0b0b0b;">0.7</div>
<div style="top:803.3px;line-height:12px;height:12px;white-space:pre;color:#0b0b0b;font-size:10.9px;left:2431.4px;transform:scaleY(0.8);-webkit-text-stroke:0.3px #0b0b0b;">0.8</div>
<div style="top:803.3px;line-height:12px;height:12px;white-space:pre;color:#0b0b0b;font-size:10.9px;left:2468.7px;transform:scaleY(0.8);-webkit-text-stroke:0.3px #0b0b0b;">0.9</div>
<div style="top:803.3px;line-height:12px;height:12px;white-space:pre;color:#0b0b0b;font-size:10.9px;left:2500px;transform:scaleY(0.8);-webkit-text-stroke:0.3px #0b0b0b;">1</div>
<div style="left:2504px;top:796.5px;width:5px;height:9px;background:#85723a;border:1px solid #26200c;"></div>
<div style="left:2509px;top:793px;width:19px;height:19px;background:linear-gradient(#4c4c4c,#424242);border:1px solid #212121;border-radius:4px;box-shadow:inset 0 1px 0 #585858;"></div>
<svg style="left:2512px;top:796px;" width="14" height="13" viewBox="0 0 14 13"><path d="M0.8 12 C3 4 5 3.4 6.6 6.4 C8.6 10 10.6 9 13.2 0.8" stroke="#1c1c1c" stroke-width="1.9" fill="none"/></svg>
<div style="left:1950px;top:830px;width:589px;height:2px;background:#e2e2e2;"></div>
<div style="left:1950px;top:832px;width:589px;height:24px;background:linear-gradient(#474747,#303030);border:1px solid #1c1c1c;border-top:none;"></div>
<svg style="left:1956px;top:839px;" width="10" height="8" viewBox="0 0 10 8"><path d="M0 0 H10 L5 7.5 Z" fill="#050505"/></svg>
<div style="left:1974px;top:834px;width:69px;height:20px;background:linear-gradient(#4c4c4c,#424242);border:1px solid #212121;border-radius:4px;box-shadow:inset 0 1px 0 #585858;"></div>
<div style="left:1996px;top:835px;width:1px;height:18px;background:#242424;"></div>
<div style="left:2019px;top:835px;width:1px;height:18px;background:#242424;"></div>
<svg style="left:1979px;top:838px;" width="13" height="13" viewBox="0 0 13 13"><circle cx="6.5" cy="6.5" r="3.9" fill="none" stroke="#0a0a0a" stroke-width="2.4"/><circle cx="6.5" cy="6.5" r="3" fill="none" stroke="#d8d8d8" stroke-width="1"/><circle cx="6.5" cy="6.5" r="1.4" fill="#0a0a0a"/></svg>
<svg style="left:2002px;top:837px;" width="13" height="12" viewBox="0 0 13 12"><path d="M3.5 0.5 L6 4.5 M9.5 0.5 L7 4.5" stroke="#0a0a0a" stroke-width="1"/><rect x="0.5" y="4.5" width="12" height="5" rx="1" fill="#0a0a0a"/><path d="M5 9.5 L6.5 11 L8 9.5" fill="#0a0a0a"/></svg>
<svg style="left:2025px;top:836px;" width="11" height="15" viewBox="0 0 11 15"><path d="M2.2 0.4 Q-0.6 4.6 3.4 8 V14.6 H7.6 V8 Q11.6 4.6 8.8 0.4 L7.6 4.4 H3.4 Z" fill="#050505"/></svg>
<div style="left:2053px;top:834px;width:293px;height:20px;background:#3a3a3a;border:1px solid #232323;border-radius:4px;"></div>
<div style="top:836.5px;line-height:16px;height:16px;white-space:pre;left:2057.5px;">OFlow2</div>
<div style="left:2356px;top:834px;width:115px;height:20px;background:linear-gradient(#4c4c4c,#424242);border:1px solid #212121;border-radius:4px;box-shadow:inset 0 1px 0 #585858;"></div>
<div style="left:2378px;top:835px;width:1px;height:18px;background:#242424;"></div>
<div style="left:2401px;top:835px;width:1px;height:18px;background:#242424;"></div>
<div style="left:2424px;top:835px;width:1px;height:18px;background:#242424;"></div>
<div style="left:2447px;top:835px;width:1px;height:18px;background:#242424;"></div>
<svg style="left:2360px;top:838px;" width="12" height="11" viewBox="0 0 12 11"><rect x="0.5" y="0.5" width="11" height="10" fill="#e4e4e4" stroke="#0a0a0a" stroke-width="1"/><path d="M1 10 L11 1" stroke="#333" stroke-width="1.2"/></svg>
<svg style="left:2383px;top:838px;" width="12" height="11" viewBox="0 0 12 11"><rect x="0.5" y="0.5" width="11" height="10" fill="#e0e0e0" stroke="#0a0a0a" stroke-width="1"/><path d="M1 10 L11 1" stroke="#333" stroke-width="1.2"/></svg>
<svg style="left:2405px;top:839px;" width="16" height="9" viewBox="0 0 16 9"><path d="M0.5 8.5 V2.5 L2.6 4 Q8.5 -1.5 15 7.5 Q9.5 3.6 5.4 6 L7.4 8.5 Z" fill="#3c3c3c"/></svg>
<svg style="left:2428px;top:839px;" width="16" height="9" viewBox="0 0 16 9"><path d="M15.5 8.5 V2.5 L13.4 4 Q7.5 -1.5 1 7.5 Q6.5 3.6 10.6 6 L8.6 8.5 Z" fill="#3c3c3c"/></svg>
<svg style="left:2452px;top:837px;" width="14" height="13" viewBox="0 0 14 13"><path d="M2.5 8.5 V2 H11.5 V6" stroke="#3c3c3c" stroke-width="2.4" fill="none"/><path d="M2.5 8 Q2.5 10 6 10 H7" stroke="#3c3c3c" stroke-width="2.2" fill="none"/><path d="M6.4 6.4 L11 10 L6.4 13.4 Z" fill="#3c3c3c"/></svg>
<div style="top:836px;line-height:16px;height:16px;white-space:pre;color:#0a0a0a;font-size:13px;left:2480px;width:20px;text-align:center;font-weight:bold;">?</div>
<svg style="left:2507px;top:839px;" width="9" height="9" viewBox="0 0 9 9"><path d="M2.5 2.5 V0.8 H8.2 V5.5 H6.5" stroke="#0a0a0a" stroke-width="1.5" fill="none"/><rect x="0.8" y="3.2" width="5.4" height="5" fill="none" stroke="#0a0a0a" stroke-width="1.5"/></svg>
<svg style="left:2525px;top:840px;" width="9" height="8" viewBox="0 0 9 8"><path d="M0.8 0.5 L8.2 7.5 M8.2 0.5 L0.8 7.5" stroke="#0a0a0a" stroke-width="1.7"/></svg>
<div style="left:1950px;top:878px;width:589px;height:309px;background:#323232;border:1px solid #212121;border-radius:0 4px 4px 4px;"></div>
<div style="left:2014px;top:861px;width:58px;height:17px;background:#2a2a2a;border:1px solid #1c1c1c;border-bottom:none;border-radius:4px 4px 0 0;"></div>
<div style="top:862px;line-height:16px;height:16px;white-space:pre;left:2029px;">Node</div>
<div style="left:1950px;top:858px;width:64px;height:21px;background:#323232;border:1px solid #212121;border-bottom:none;border-radius:5px 5px 0 0;"></div>
<div style="top:861px;line-height:16px;height:16px;white-space:pre;left:1965px;">OFlow</div>
<svg style="left:2527px;top:1176px;" width="9" height="9" viewBox="0 0 9 9"><path d="M0 9 L9 0 M3 9 L9 3 M6 9 L9 6" stroke="#5a5a5a" stroke-width="0.8" stroke-dasharray="1 1"/></svg>
<div style="top:890.5px;line-height:16px;height:16px;white-space:pre;right:521.5px;text-align:right;">Local GPU:</div>
<div style="top:890px;line-height:16px;height:16px;white-space:pre;left:2045.5px;">GeForce GTX 1080</div>
<div style="left:2045.5px;top:912px;width:16px;height:16px;background:#3d3d3d;border:1px solid #232323;border-radius:2px;"></div>
<svg style="left:2047.5px;top:914px;" width="12" height="12" viewBox="0 0 12 12"><path d="M1.2 1.2 L10.8 10.8 M10.8 1.2 L1.2 10.8" stroke="#e2e2e2" stroke-width="2.7" fill="none"/></svg>
<div style="top:912px;line-height:16px;height:16px;white-space:pre;left:2067px;">Use GPU if available</div>
<div style="left:1961px;top:938px;width:567px;height:1px;background:#484848;"></div>
<div style="left:1961px;top:937px;width:567px;height:1px;background:#262626;"></div>
<div style="top:956px;line-height:16px;height:16px;white-space:pre;right:521.5px;text-align:right;">Input Range</div>
<div style="left:2045.5px;top:954px;width:73px;height:19px;background:#3b3b3b;border:1px solid #222;border-radius:3px;box-shadow:inset 0 1px 0 #2c2c2c;"></div>
<div style="top:956px;line-height:16px;height:16px;white-space:pre;left:2049.5px;">1</div>
<div style="left:2122px;top:954px;width:74px;height:19px;background:#3b3b3b;border:1px solid #222;border-radius:3px;box-shadow:inset 0 1px 0 #2c2c2c;"></div>
<div style="top:956px;line-height:16px;height:16px;white-space:pre;left:2126px;">68</div>
<div style="left:2199px;top:949px;width:93px;height:28px;background:linear-gradient(#4c4c4c,#424242);border:1px solid #212121;border-radius:4px;box-shadow:inset 0 1px 0 #5a5a5a;"></div>
<div style="top:956px;line-height:16px;height:16px;white-space:pre;left:2205.5px;width:80px;text-align:center;">Reset</div>
<div style="top:982px;line-height:16px;height:16px;white-space:pre;right:521.5px;text-align:right;">Channels</div>
<div style="left:2045.5px;top:980px;width:462px;height:18px;background:linear-gradient(#505050,#444);border:1px solid #222;border-radius:4px;box-shadow:inset 0 1px 0 #5c5c5c;"></div>
<div style="top:980.5px;line-height:16px;height:16px;white-space:pre;left:2050.5px;">all</div>
<svg style="left:2491.5px;top:985.5px;" width="8" height="5" viewBox="0 0 8 5"><path d="M0 0 H8 L4.0 5 Z" fill="#d0d0d0"/></svg>
<div style="left:2510.5px;top:982px;width:17px;height:15px;background:linear-gradient(#4c4c4c,#424242);border:1px solid #212121;border-radius:4px;box-shadow:inset 0 1px 0 #585858;"></div>
<svg style="left:2515.5px;top:988px;" width="7" height="5" viewBox="0 0 7 5"><path d="M0 1 H7 M0 4 H7" stroke="#d0d0d0" stroke-width="0.9"/></svg>
<div style="top:1004px;line-height:16px;height:16px;white-space:pre;right:521.5px;text-align:right;">Method</div>
<div style="left:2045.5px;top:1002px;width:64px;height:18px;background:linear-gradient(#505050,#444);border:1px solid #222;border-radius:4px;box-shadow:inset 0 1px 0 #5c5c5c;"></div>
<div style="top:1003.5px;line-height:16px;height:16px;white-space:pre;left:2050px;">Frame</div>
<svg style="left:2099px;top:1007.5px;" width="6" height="5" viewBox="0 0 6 5"><path d="M0 0 H6 L3.0 5 Z" fill="#d0d0d0"/></svg>
<div style="top:1026px;line-height:16px;height:16px;white-space:pre;right:521.5px;text-align:right;">Timing</div>
<div style="left:2045.5px;top:1024px;width:105px;height:18px;background:linear-gradient(#505050,#444);border:1px solid #222;border-radius:4px;box-shadow:inset 0 1px 0 #5c5c5c;"></div>
<div style="top:1025.5px;line-height:16px;height:16px;white-space:pre;left:2050px;">Output Speed</div>
<svg style="left:2140px;top:1029.5px;" width="6" height="5" viewBox="0 0 6 5"><path d="M0 0 H6 L3.0 5 Z" fill="#d0d0d0"/></svg>
<div style="top:1048px;line-height:16px;height:16px;white-space:pre;right:521.5px;text-align:right;">Output Speed</div>
<div style="left:2045.5px;top:1046px;width:73px;height:20px;background:#3b3b3b;border:1px solid #222;border-radius:3px;box-shadow:inset 0 1px 0 #2c2c2c;"></div>
<div style="top:1048.5px;line-height:16px;height:16px;white-space:pre;left:2049.5px;">0.7</div>
<svg style="left:2122px;top:1044px;" width="385" height="13" viewBox="0 0 385 13"><path d="M0.5 2 V10" stroke="#1b1b1b" stroke-width="1"/><path d="M8.18 5 V10" stroke="#1b1b1b" stroke-width="1"/><path d="M15.86 5 V10" stroke="#1b1b1b" stroke-width="1"/><path d="M23.54 5 V10" stroke="#1b1b1b" stroke-width="1"/><path d="M31.22 5 V10" stroke="#1b1b1b" stroke-width="1"/><path d="M38.9 2 V10" stroke="#1b1b1b" stroke-width="1"/><path d="M46.58 5 V10" stroke="#1b1b1b" stroke-width="1"/><path d="M54.26 5 V10" stroke="#1b1b1b" stroke-width="1"/><path d="M61.94 5 V10" stroke="#1b1b1b" stroke-width="1"/><path d="M69.62 5 V10" stroke="#1b1b1b" stroke-width="1"/><path d="M77.3 2 V10" stroke="#1b1b1b" stroke-width="1"/><path d="M84.98 5 V10" stroke="#1b1b1b" stroke-width="1"/><path d="M92.66 5 V10" stroke="#1b1b1b" stroke-width="1"/><path d="M100.34 5 V10" stroke="#1b1b1b" stroke-width="1"/><path d="M108.02 5 V10" stroke="#1b1b1b" stroke-width="1"/><path d="M115.7 2 V10" stroke="#1b1b1b" stroke-width="1"/><path d="M123.38 5 V10" stroke="#1b1b1b" stroke-width="1"/><path d="M131.06 5 V10" stroke="#1b1b1b" stroke-width="1"/><path d="M138.74 5 V10" stroke="#1b1b1b" stroke-width="1"/><path d="M146.42 5 V10" stroke="#1b1b1b" stroke-width="1"/><path d="M154.1 2 V10" stroke="#1b1b1b" stroke-width="1"/><path d="M161.78 5 V10" stroke="#1b1b1b" stroke-width="1"/><path d="M169.46 5 V10" stroke="#1b1b1b" stroke-width="1"/><path d="M177.14 5 V10" stroke="#1b1b1b" stroke-width="1"/><path d="M184.82 5 V10" stroke="#1b1b1b" stroke-width="1"/><path d="M192.5 2 V10" stroke="#1b1b1b" stroke-width="1"/><path d="M200.18 5 V10" stroke="#1b1b1b" stroke-width="1"/><path d="M207.86 5 V10" stroke="#1b1b1b" stroke-width="1"/><path d="M215.54 5 V10" stroke="#1b1b1b" stroke-width="1"/><path d="M223.22 5 V10" stroke="#1b1b1b" stroke-width="1"/><path d="M230.9 2 V10" stroke="#1b1b1b" stroke-width="1"/><path d="M238.58 5 V10" stroke="#1b1b1b" stroke-width="1"/><path d="M246.26 5 V10" stroke="#1b1b1b" stroke-width="1"/><path d="M253.94 5 V10" stroke="#1b1b1b" stroke-width="1"/><path d="M261.62 5 V10" stroke="#1b1b1b" stroke-width="1"/><path d="M269.3 2 V10" stroke="#1b1b1b" stroke-width="1"/><path d="M276.98 5 V10" stroke="#1b1b1b" stroke-width="1"/><path d="M284.66 5 V10" stroke="#1b1b1b" stroke-width="1"/><path d="M292.34 5 V10" stroke="#1b1b1b" stroke-width="1"/><path d="M300.02 5 V10" stroke="#1b1b1b" stroke-width="1"/><path d="M307.7 2 V10" stroke="#1b1b1b" stroke-width="1"/><path d="M315.38 5 V10" stroke="#1b1b1b" stroke-width="1"/><path d="M323.06 5 V10" stroke="#1b1b1b" stroke-width="1"/><path d="M330.74 5 V10" stroke="#1b1b1b" stroke-width="1"/><path d="M338.42 5 V10" stroke="#1b1b1b" stroke-width="1"/><path d="M346.1 2 V10" stroke="#1b1b1b" stroke-width="1"/><path d="M353.78 5 V10" stroke="#1b1b1b" stroke-width="1"/><path d="M361.46 5 V10" stroke="#1b1b1b" stroke-width="1"/><path d="M369.14 5 V10" stroke="#1b1b1b" stroke-width="1"/><path d="M376.82 5 V10" stroke="#1b1b1b" stroke-width="1"/><path d="M384.5 2 V10" stroke="#1b1b1b" stroke-width="1"/><rect x="0" y="10" width="385" height="1" fill="#080808"/><rect x="0" y="11" width="385" height="1" fill="#5e5e5e"/><rect x="0" y="12" width="385" height="1" fill="#080808"/></svg>
<div style="top:1056.3px;line-height:12px;height:12px;white-space:pre;color:#0b0b0b;font-size:10.9px;left:2122px;transform:scaleY(0.8);-webkit-text-stroke:0.3px #0b0b0b;">0</div>
<div style="top:1056.3px;line-height:12px;height:12px;white-space:pre;color:#0b0b0b;font-size:10.9px;left:2160px;transform:scaleY(0.8);-webkit-text-stroke:0.3px #0b0b0b;">0.5</div>
<div style="top:1056.3px;line-height:12px;height:12px;white-space:pre;color:#0b0b0b;font-size:10.9px;left:2200px;transform:scaleY(0.8);-webkit-text-stroke:0.3px #0b0b0b;">1</div>
<div style="top:1056.3px;line-height:12px;height:12px;white-space:pre;color:#0b0b0b;font-size:10.9px;left:2237px;transform:scaleY(0.8);-webkit-text-stroke:0.3px #0b0b0b;">1.5</div>
<div style="top:1056.3px;line-height:12px;height:12px;white-space:pre;color:#0b0b0b;font-size:10.9px;left:2277px;transform:scaleY(0.8);-webkit-text-stroke:0.3px #0b0b0b;">2</div>
<div style="top:1056.3px;line-height:12px;height:12px;white-space:pre;color:#0b0b0b;font-size:10.9px;left:2314px;transform:scaleY(0.8);-webkit-text-stroke:0.3px #0b0b0b;">2.5</div>
<div style="top:1056.3px;line-height:12px;height:12px;white-space:pre;color:#0b0b0b;font-size:10.9px;left:2354px;transform:scaleY(0.8);-webkit-text-stroke:0.3px #0b0b0b;">3</div>
<div style="top:1056.3px;line-height:12px;height:12px;white-space:pre;color:#0b0b0b;font-size:10.9px;left:2391px;transform:scaleY(0.8);-webkit-text-stroke:0.3px #0b0b0b;">3.5</div>
<div style="top:1056.3px;line-height:12px;height:12px;white-space:pre;color:#0b0b0b;font-size:10.9px;left:2431px;transform:scaleY(0.8);-webkit-text-stroke:0.3px #0b0b0b;">4</div>
<div style="top:1056.3px;line-height:12px;height:12px;white-space:pre;color:#0b0b0b;font-size:10.9px;left:2468px;transform:scaleY(0.8);-webkit-text-stroke:0.3px #0b0b0b;">4.5</div>
<div style="top:1056.3px;line-height:12px;height:12px;white-space:pre;color:#0b0b0b;font-size:10.9px;left:2501px;transform:scaleY(0.8);-webkit-text-stroke:0.3px #0b0b0b;">5</div>
<div style="left:2173px;top:1049.5px;width:5px;height:9px;background:#85723a;border:1px solid #26200c;"></div>
<div style="left:2509px;top:1046px;width:19px;height:19px;background:linear-gradient(#4c4c4c,#424242);border:1px solid #212121;border-radius:4px;box-shadow:inset 0 1px 0 #585858;"></div>
<svg style="left:2512px;top:1049px;" width="14" height="13" viewBox="0 0 14 13"><path d="M0.8 12 C3 4 5 3.4 6.6 6.4 C8.6 10 10.6 9 13.2 0.8" stroke="#1c1c1c" stroke-width="1.9" fill="none"/></svg>
<div style="top:1074px;line-height:16px;height:16px;white-space:pre;color:#7c7c7c;right:521.5px;text-align:right;">Vector Detail</div>
<div style="left:2045.5px;top:1072px;width:73px;height:20px;background:#3b3b3b;border:1px solid #222;border-radius:3px;box-shadow:inset 0 1px 0 #2c2c2c;"></div>
<div style="top:1074.5px;line-height:16px;height:16px;white-space:pre;color:#7c7c7c;left:2049.5px;">0.2</div>
<svg style="left:2122px;top:1070px;" width="385" height="13" viewBox="0 0 385 13"><path d="M0.5 2 V10" stroke="#1b1b1b" stroke-width="1"/><path d="M58.2978 5 V10" stroke="#1b1b1b" stroke-width="1"/><path d="M92.1073 5 V10" stroke="#1b1b1b" stroke-width="1"/><path d="M116.096 5 V10" stroke="#1b1b1b" stroke-width="1"/><path d="M134.702 5 V10" stroke="#1b1b1b" stroke-width="1"/><path d="M149.905 5 V10" stroke="#1b1b1b" stroke-width="1"/><path d="M162.759 5 V10" stroke="#1b1b1b" stroke-width="1"/><path d="M173.893 5 V10" stroke="#1b1b1b" stroke-width="1"/><path d="M183.715 5 V10" stroke="#1b1b1b" stroke-width="1"/><path d="M192.5 2 V10" stroke="#1b1b1b" stroke-width="1"/><path d="M250.298 5 V10" stroke="#1b1b1b" stroke-width="1"/><path d="M284.107 5 V10" stroke="#1b1b1b" stroke-width="1"/><path d="M308.096 5 V10" stroke="#1b1b1b" stroke-width="1"/><path d="M326.702 5 V10" stroke="#1b1b1b" stroke-width="1"/><path d="M341.905 5 V10" stroke="#1b1b1b" stroke-width="1"/><path d="M354.759 5 V10" stroke="#1b1b1b" stroke-width="1"/><path d="M365.893 5 V10" stroke="#1b1b1b" stroke-width="1"/><path d="M375.715 5 V10" stroke="#1b1b1b" stroke-width="1"/><path d="M384.5 2 V10" stroke="#1b1b1b" stroke-width="1"/><rect x="0" y="10" width="385" height="1" fill="#080808"/><rect x="0" y="11" width="385" height="1" fill="#5e5e5e"/><rect x="0" y="12" width="385" height="1" fill="#080808"/></svg>
<div style="top:1082.3px;line-height:12px;height:12px;white-space:pre;color:#0b0b0b;font-size:10.9px;left:2122px;transform:scaleY(0.8);-webkit-text-stroke:0.3px #0b0b0b;">0.01</div>
<div style="top:1082.3px;line-height:12px;height:12px;white-space:pre;color:#0b0b0b;font-size:10.9px;left:2179px;transform:scaleY(0.8);-webkit-text-stroke:0.3px #0b0b0b;">0.02</div>
<div style="top:1082.3px;line-height:12px;height:12px;white-space:pre;color:#0b0b0b;font-size:10.9px;left:2213px;transform:scaleY(0.8);-webkit-text-stroke:0.3px #0b0b0b;">0.03</div>
<div style="top:1082.3px;line-height:12px;height:12px;white-space:pre;color:#0b0b0b;font-size:10.9px;left:2237px;transform:scaleY(0.8);-webkit-text-stroke:0.3px #0b0b0b;">0.04</div>
<div style="top:1082.3px;line-height:12px;height:12px;white-space:pre;color:#0b0b0b;font-size:10.9px;left:2258px;transform:scaleY(0.8);-webkit-text-stroke:0.3px #0b0b0b;">0.05</div>
<div style="top:1082.3px;line-height:12px;height:12px;white-space:pre;color:#0b0b0b;font-size:10.9px;left:2284px;transform:scaleY(0.8);-webkit-text-stroke:0.3px #0b0b0b;">0.07</div>
<div style="top:1082.3px;line-height:12px;height:12px;white-space:pre;color:#0b0b0b;font-size:10.9px;left:2314px;transform:scaleY(0.8);-webkit-text-stroke:0.3px #0b0b0b;">0.1</div>
<div style="top:1082.3px;line-height:12px;height:12px;white-space:pre;color:#0b0b0b;font-size:10.9px;left:2371px;transform:scaleY(0.8);-webkit-text-stroke:0.3px #0b0b0b;">0.2</div>
<div style="top:1082.3px;line-height:12px;height:12px;white-space:pre;color:#0b0b0b;font-size:10.9px;left:2405px;transform:scaleY(0.8);-webkit-text-stroke:0.3px #0b0b0b;">0.3</div>
<div style="top:1082.3px;line-height:12px;height:12px;white-space:pre;color:#0b0b0b;font-size:10.9px;left:2429px;transform:scaleY(0.8);-webkit-text-stroke:0.3px #0b0b0b;">0.4</div>
<div style="top:1082.3px;line-height:12px;height:12px;white-space:pre;color:#0b0b0b;font-size:10.9px;left:2448px;transform:scaleY(0.8);-webkit-text-stroke:0.3px #0b0b0b;">0.5</div>
<div style="top:1082.3px;line-height:12px;height:12px;white-space:pre;color:#0b0b0b;font-size:10.9px;left:2476px;transform:scaleY(0.8);-webkit-text-stroke:0.3px #0b0b0b;">0.7</div>
<div style="top:1082.3px;line-height:12px;height:12px;white-space:pre;color:#0b0b0b;font-size:10.9px;left:2503px;transform:scaleY(0.8);-webkit-text-stroke:0.3px #0b0b0b;">1</div>
<div style="left:2369px;top:1075.5px;width:5px;height:9px;background:#6e6654;border:1px solid #26200c;"></div>
<div style="left:2509px;top:1072px;width:19px;height:19px;background:linear-gradient(#4c4c4c,#424242);border:1px solid #212121;border-radius:4px;box-shadow:inset 0 1px 0 #585858;"></div>
<div style="top:1096px;line-height:16px;height:16px;white-space:pre;color:#7c7c7c;right:521.5px;text-align:right;">Smoothness</div>
<div style="left:2045.5px;top:1094px;width:73px;height:20px;background:#3b3b3b;border:1px solid #222;border-radius:3px;box-shadow:inset 0 1px 0 #2c2c2c;"></div>
<div style="top:1096.5px;line-height:16px;height:16px;white-space:pre;color:#7c7c7c;left:2049.5px;">0.5</div>
<svg style="left:2122px;top:1092px;" width="385" height="13" viewBox="0 0 385 13"><path d="M0.5 2 V10" stroke="#1b1b1b" stroke-width="1"/><path d="M58.2978 5 V10" stroke="#1b1b1b" stroke-width="1"/><path d="M92.1073 5 V10" stroke="#1b1b1b" stroke-width="1"/><path d="M116.096 5 V10" stroke="#1b1b1b" stroke-width="1"/><path d="M134.702 5 V10" stroke="#1b1b1b" stroke-width="1"/><path d="M149.905 5 V10" stroke="#1b1b1b" stroke-width="1"/><path d="M162.759 5 V10" stroke="#1b1b1b" stroke-width="1"/><path d="M173.893 5 V10" stroke="#1b1b1b" stroke-width="1"/><path d="M183.715 5 V10" stroke="#1b1b1b" stroke-width="1"/><path d="M192.5 2 V10" stroke="#1b1b1b" stroke-width="1"/><path d="M250.298 5 V10" stroke="#1b1b1b" stroke-width="1"/><path d="M284.107 5 V10" stroke="#1b1b1b" stroke-width="1"/><path d="M308.096 5 V10" stroke="#1b1b1b" stroke-width="1"/><path d="M326.702 5 V10" stroke="#1b1b1b" stroke-width="1"/><path d="M341.905 5 V10" stroke="#1b1b1b" stroke-width="1"/><path d="M354.759 5 V10" stroke="#1b1b1b" stroke-width="1"/><path d="M365.893 5 V10" stroke="#1b1b1b" stroke-width="1"/><path d="M375.715 5 V10" stroke="#1b1b1b" stroke-width="1"/><path d="M384.5 2 V10" stroke="#1b1b1b" stroke-width="1"/><rect x="0" y="10" width="385" height="1" fill="#080808"/><rect x="0" y="11" width="385" height="1" fill="#5e5e5e"/><rect x="0" y="12" width="385" height="1" fill="#080808"/></svg>
<div style="top:1104.3px;line-height:12px;height:12px;white-space:pre;color:#0b0b0b;font-size:10.9px;left:2122px;transform:scaleY(0.8);-webkit-text-stroke:0.3px #0b0b0b;">0.01</div>
<div style="top:1104.3px;line-height:12px;height:12px;white-space:pre;color:#0b0b0b;font-size:10.9px;left:2179px;transform:scaleY(0.8);-webkit-text-stroke:0.3px #0b0b0b;">0.02</div>
<div style="top:1104.3px;line-height:12px;height:12px;white-space:pre;color:#0b0b0b;font-size:10.9px;left:2213px;transform:scaleY(0.8);-webkit-text-stroke:0.3px #0b0b0b;">0.03</div>
<div style="top:1104.3px;line-height:12px;height:12px;white-space:pre;color:#0b0b0b;font-size:10.9px;left:2237px;transform:scaleY(0.8);-webkit-text-stroke:0.3px #0b0b0b;">0.04</div>
<div style="top:1104.3px;line-height:12px;height:12px;white-space:pre;color:#0b0b0b;font-size:10.9px;left:2258px;transform:scaleY(0.8);-webkit-text-stroke:0.3px #0b0b0b;">0.05</div>
<div style="top:1104.3px;line-height:12px;height:12px;white-space:pre;color:#0b0b0b;font-size:10.9px;left:2284px;transform:scaleY(0.8);-webkit-text-stroke:0.3px #0b0b0b;">0.07</div>
<div style="top:1104.3px;line-height:12px;height:12px;white-space:pre;color:#0b0b0b;font-size:10.9px;left:2314px;transform:scaleY(0.8);-webkit-text-stroke:0.3px #0b0b0b;">0.1</div>
<div style="top:1104.3px;line-height:12px;height:12px;white-space:pre;color:#0b0b0b;font-size:10.9px;left:2371px;transform:scaleY(0.8);-webkit-text-stroke:0.3px #0b0b0b;">0.2</div>
<div style="top:1104.3px;line-height:12px;height:12px;white-space:pre;color:#0b0b0b;font-size:10.9px;left:2405px;transform:scaleY(0.8);-webkit-text-stroke:0.3px #0b0b0b;">0.3</div>
<div style="top:1104.3px;line-height:12px;height:12px;white-space:pre;color:#0b0b0b;font-size:10.9px;left:2429px;transform:scaleY(0.8);-webkit-text-stroke:0.3px #0b0b0b;">0.4</div>
<div style="top:1104.3px;line-height:12px;height:12px;white-space:pre;color:#0b0b0b;font-size:10.9px;left:2448px;transform:scaleY(0.8);-webkit-text-stroke:0.3px #0b0b0b;">0.5</div>
<div style="top:1104.3px;line-height:12px;height:12px;white-space:pre;color:#0b0b0b;font-size:10.9px;left:2476px;transform:scaleY(0.8);-webkit-text-stroke:0.3px #0b0b0b;">0.7</div>
<div style="top:1104.3px;line-height:12px;height:12px;white-space:pre;color:#0b0b0b;font-size:10.9px;left:2503px;transform:scaleY(0.8);-webkit-text-stroke:0.3px #0b0b0b;">1</div>
<div style="left:2446px;top:1097.5px;width:5px;height:9px;background:#6e6654;border:1px solid #26200c;"></div>
<div style="left:2509px;top:1094px;width:19px;height:19px;background:linear-gradient(#4c4c4c,#424242);border:1px solid #212121;border-radius:4px;box-shadow:inset 0 1px 0 #585858;"></div>
<div style="top:1118px;line-height:16px;height:16px;white-space:pre;color:#7c7c7c;right:521.5px;text-align:right;">Resampling</div>
<div style="left:2045.5px;top:1116px;width:80px;height:18px;background:linear-gradient(#4a4a4a,#404040);border:1px solid #222;border-radius:4px;"></div>
<div style="top:1117.5px;line-height:16px;height:16px;white-space:pre;color:#7c7c7c;left:2050px;">Bilinear</div>
<svg style="left:2114px;top:1121.5px;" width="6" height="5" viewBox="0 0 6 5"><path d="M0 0 H6 L3.0 5 Z" fill="#7a7a7a"/></svg>
<svg style="left:1965px;top:1141px;" width="7" height="9" viewBox="0 0 7 9"><path d="M0 0 V9 L7 4.5 Z" fill="#050505"/></svg>
<div style="top:1139px;line-height:16px;height:16px;white-space:pre;left:1985px;">Shutter</div>
<svg style="left:1965px;top:1160px;" width="7" height="9" viewBox="0 0 7 9"><path d="M0 0 V9 L7 4.5 Z" fill="#050505"/></svg>
<div style="top:1159px;line-height:16px;height:16px;white-space:pre;left:1985px;">Advanced</div>
<div style="left:0;top:0;width:2560px;height:1363px;overflow:hidden;">
<div style="left:1950px;top:1193px;width:589px;height:2px;background:#e2e2e2;"></div>
<div style="left:1950px;top:1195px;width:589px;height:24px;background:linear-gradient(#474747,#303030);border:1px solid #1c1c1c;border-top:none;"></div>
<svg style="left:1956px;top:1202px;" width="10" height="8" viewBox="0 0 10 8"><path d="M0 0 H10 L5 7.5 Z" fill="#050505"/></svg>
<div style="left:1974px;top:1197px;width:69px;height:20px;background:linear-gradient(#4c4c4c,#424242);border:1px solid #212121;border-radius:4px;box-shadow:inset 0 1px 0 #585858;"></div>
<div style="left:1996px;top:1198px;width:1px;height:18px;background:#242424;"></div>
<div style="left:2019px;top:1198px;width:1px;height:18px;background:#242424;"></div>
<svg style="left:1979px;top:1201px;" width="13" height="13" viewBox="0 0 13 13"><circle cx="6.5" cy="6.5" r="3.9" fill="none" stroke="#0a0a0a" stroke-width="2.4"/><circle cx="6.5" cy="6.5" r="3" fill="none" stroke="#d8d8d8" stroke-width="1"/><circle cx="6.5" cy="6.5" r="1.4" fill="#0a0a0a"/></svg>
<svg style="left:2002px;top:1200px;" width="13" height="12" viewBox="0 0 13 12"><path d="M3.5 0.5 L6 4.5 M9.5 0.5 L7 4.5" stroke="#0a0a0a" stroke-width="1"/><rect x="0.5" y="4.5" width="12" height="5" rx="1" fill="#0a0a0a"/><path d="M5 9.5 L6.5 11 L8 9.5" fill="#0a0a0a"/></svg>
<svg style="left:2025px;top:1199px;" width="11" height="15" viewBox="0 0 11 15"><path d="M2.2 0.4 Q-0.6 4.6 3.4 8 V14.6 H7.6 V8 Q11.6 4.6 8.8 0.4 L7.6 4.4 H3.4 Z" fill="#050505"/></svg>
<div style="left:2053px;top:1197px;width:293px;height:20px;background:#3a3a3a;border:1px solid #232323;border-radius:4px;"></div>
<div style="top:1199.5px;line-height:16px;height:16px;white-space:pre;left:2057.5px;">OFlow1</div>
<div style="left:2356px;top:1197px;width:115px;height:20px;background:linear-gradient(#4c4c4c,#424242);border:1px solid #212121;border-radius:4px;box-shadow:inset 0 1px 0 #585858;"></div>
<div style="left:2378px;top:1198px;width:1px;height:18px;background:#242424;"></div>
<div style="left:2401px;top:1198px;width:1px;height:18px;background:#242424;"></div>
<div style="left:2424px;top:1198px;width:1px;height:18px;background:#242424;"></div>
<div style="left:2447px;top:1198px;width:1px;height:18px;background:#242424;"></div>
<svg style="left:2360px;top:1201px;" width="12" height="11" viewBox="0 0 12 11"><rect x="0.5" y="0.5" width="11" height="10" fill="#e4e4e4" stroke="#0a0a0a" stroke-width="1"/><path d="M1 10 L11 1" stroke="#333" stroke-width="1.2"/></svg>
<svg style="left:2383px;top:1201px;" width="12" height="11" viewBox="0 0 12 11"><rect x="0.5" y="0.5" width="11" height="10" fill="#e0e0e0" stroke="#0a0a0a" stroke-width="1"/><path d="M1 10 L11 1" stroke="#333" stroke-width="1.2"/></svg>
<svg style="left:2405px;top:1202px;" width="16" height="9" viewBox="0 0 16 9"><path d="M0.5 8.5 V2.5 L2.6 4 Q8.5 -1.5 15 7.5 Q9.5 3.6 5.4 6 L7.4 8.5 Z" fill="#3c3c3c"/></svg>
<svg style="left:2428px;top:1202px;" width="16" height="9" viewBox="0 0 16 9"><path d="M15.5 8.5 V2.5 L13.4 4 Q7.5 -1.5 1 7.5 Q6.5 3.6 10.6 6 L8.6 8.5 Z" fill="#3c3c3c"/></svg>
<svg style="left:2452px;top:1200px;" width="14" height="13" viewBox="0 0 14 13"><path d="M2.5 8.5 V2 H11.5 V6" stroke="#3c3c3c" stroke-width="2.4" fill="none"/><path d="M2.5 8 Q2.5 10 6 10 H7" stroke="#3c3c3c" stroke-width="2.2" fill="none"/><path d="M6.4 6.4 L11 10 L6.4 13.4 Z" fill="#3c3c3c"/></svg>
<div style="top:1199px;line-height:16px;height:16px;white-space:pre;color:#0a0a0a;font-size:13px;left:2480px;width:20px;text-align:center;font-weight:bold;">?</div>
<svg style="left:2507px;top:1202px;" width="9" height="9" viewBox="0 0 9 9"><path d="M2.5 2.5 V0.8 H8.2 V5.5 H6.5" stroke="#0a0a0a" stroke-width="1.5" fill="none"/><rect x="0.8" y="3.2" width="5.4" height="5" fill="none" stroke="#0a0a0a" stroke-width="1.5"/></svg>
<svg style="left:2525px;top:1203px;" width="9" height="8" viewBox="0 0 9 8"><path d="M0.8 0.5 L8.2 7.5 M8.2 0.5 L0.8 7.5" stroke="#0a0a0a" stroke-width="1.7"/></svg>
<div style="left:1950px;top:1241px;width:589px;height:309px;background:#323232;border:1px solid #212121;border-radius:0 4px 4px 4px;"></div>
<div style="left:2014px;top:1224px;width:58px;height:17px;background:#2a2a2a;border:1px solid #1c1c1c;border-bottom:none;border-radius:4px 4px 0 0;"></div>
<div style="top:1225px;line-height:16px;height:16px;white-space:pre;left:2029px;">Node</div>
<div style="left:1950px;top:1221px;width:64px;height:21px;background:#323232;border:1px solid #212121;border-bottom:none;border-radius:5px 5px 0 0;"></div>
<div style="top:1224px;line-height:16px;height:16px;white-space:pre;left:1965px;">OFlow</div>
<svg style="left:2527px;top:1539px;" width="9" height="9" viewBox="0 0 9 9"><path d="M0 9 L9 0 M3 9 L9 3 M6 9 L9 6" stroke="#5a5a5a" stroke-width="0.8" stroke-dasharray="1 1"/></svg>
<div style="top:1253.5px;line-height:16px;height:16px;white-space:pre;right:521.5px;text-align:right;">Local GPU:</div>
<div style="top:1253px;line-height:16px;height:16px;white-space:pre;left:2045.5px;">GeForce GTX 1080</div>
<div style="left:2045.5px;top:1275px;width:16px;height:16px;background:#3d3d3d;border:1px solid #232323;border-radius:2px;"></div>
<svg style="left:2047.5px;top:1277px;" width="12" height="12" viewBox="0 0 12 12"><path d="M1.2 1.2 L10.8 10.8 M10.8 1.2 L1.2 10.8" stroke="#e2e2e2" stroke-width="2.7" fill="none"/></svg>
<div style="top:1275px;line-height:16px;height:16px;white-space:pre;left:2067px;">Use GPU if available</div>
<div style="left:1961px;top:1301px;width:567px;height:1px;background:#484848;"></div>
<div style="left:1961px;top:1300px;width:567px;height:1px;background:#262626;"></div>
<div style="top:1319px;line-height:16px;height:16px;white-space:pre;right:521.5px;text-align:right;">Input Range</div>
<div style="left:2045.5px;top:1317px;width:73px;height:19px;background:#3b3b3b;border:1px solid #222;border-radius:3px;box-shadow:inset 0 1px 0 #2c2c2c;"></div>
<div style="top:1319px;line-height:16px;height:16px;white-space:pre;left:2049.5px;">1</div>
<div style="left:2122px;top:1317px;width:74px;height:19px;background:#3b3b3b;border:1px solid #222;border-radius:3px;box-shadow:inset 0 1px 0 #2c2c2c;"></div>
<div style="top:1319px;line-height:16px;height:16px;white-space:pre;left:2126px;">68</div>
<div style="left:2199px;top:1312px;width:93px;height:28px;background:linear-gradient(#4c4c4c,#424242);border:1px solid #212121;border-radius:4px;box-shadow:inset 0 1px 0 #5a5a5a;"></div>
<div style="top:1319px;line-height:16px;height:16px;white-space:pre;left:2205.5px;width:80px;text-align:center;">Reset</div>
<div style="top:1345px;line-height:16px;height:16px;white-space:pre;right:521.5px;text-align:right;">Channels</div>
<div style="left:2045.5px;top:1343px;width:462px;height:18px;background:linear-gradient(#505050,#444);border:1px solid #222;border-radius:4px;box-shadow:inset 0 1px 0 #5c5c5c;"></div>
<div style="top:1343.5px;line-height:16px;height:16px;white-space:pre;left:2050.5px;">all</div>
<svg style="left:2491.5px;top:1348.5px;" width="8" height="5" viewBox="0 0 8 5"><path d="M0 0 H8 L4.0 5 Z" fill="#d0d0d0"/></svg>
<div style="left:2510.5px;top:1345px;width:17px;height:15px;background:linear-gradient(#4c4c4c,#424242);border:1px solid #212121;border-radius:4px;box-shadow:inset 0 1px 0 #585858;"></div>
<svg style="left:2515.5px;top:1351px;" width="7" height="5" viewBox="0 0 7 5"><path d="M0 1 H7 M0 4 H7" stroke="#d0d0d0" stroke-width="0.9"/></svg>
<div style="top:1367px;line-height:16px;height:16px;white-space:pre;right:521.5px;text-align:right;">Method</div>
<div style="left:2045.5px;top:1365px;width:64px;height:18px;background:linear-gradient(#505050,#444);border:1px solid #222;border-radius:4px;box-shadow:inset 0 1px 0 #5c5c5c;"></div>
<div style="top:1366.5px;line-height:16px;height:16px;white-space:pre;left:2050px;">Frame</div>
<svg style="left:2099px;top:1370.5px;" width="6" height="5" viewBox="0 0 6 5"><path d="M0 0 H6 L3.0 5 Z" fill="#d0d0d0"/></svg>
<div style="top:1389px;line-height:16px;height:16px;white-space:pre;right:521.5px;text-align:right;">Timing</div>
<div style="left:2045.5px;top:1387px;width:105px;height:18px;background:linear-gradient(#505050,#444);border:1px solid #222;border-radius:4px;box-shadow:inset 0 1px 0 #5c5c5c;"></div>
<div style="top:1388.5px;line-height:16px;height:16px;white-space:pre;left:2050px;">Output Speed</div>
<svg style="left:2140px;top:1392.5px;" width="6" height="5" viewBox="0 0 6 5"><path d="M0 0 H6 L3.0 5 Z" fill="#d0d0d0"/></svg>
<div style="top:1411px;line-height:16px;height:16px;white-space:pre;right:521.5px;text-align:right;">Output Speed</div>
<div style="left:2045.5px;top:1409px;width:73px;height:20px;background:#3b3b3b;border:1px solid #222;border-radius:3px;box-shadow:inset 0 1px 0 #2c2c2c;"></div>
<div style="top:1411.5px;line-height:16px;height:16px;white-space:pre;left:2049.5px;">0.7</div>
<svg style="left:2122px;top:1407px;" width="385" height="13" viewBox="0 0 385 13"><path d="M0.5 2 V10" stroke="#1b1b1b" stroke-width="1"/><path d="M8.18 5 V10" stroke="#1b1b1b" stroke-width="1"/><path d="M15.86 5 V10" stroke="#1b1b1b" stroke-width="1"/><path d="M23.54 5 V10" stroke="#1b1b1b" stroke-width="1"/><path d="M31.22 5 V10" stroke="#1b1b1b" stroke-width="1"/><path d="M38.9 2 V10" stroke="#1b1b1b" stroke-width="1"/><path d="M46.58 5 V10" stroke="#1b1b1b" stroke-width="1"/><path d="M54.26 5 V10" stroke="#1b1b1b" stroke-width="1"/><path d="M61.94 5 V10" stroke="#1b1b1b" stroke-width="1"/><path d="M69.62 5 V10" stroke="#1b1b1b" stroke-width="1"/><path d="M77.3 2 V10" stroke="#1b1b1b" stroke-width="1"/><path d="M84.98 5 V10" stroke="#1b1b1b" stroke-width="1"/><path d="M92.66 5 V10" stroke="#1b1b1b" stroke-width="1"/><path d="M100.34 5 V10" stroke="#1b1b1b" stroke-width="1"/><path d="M108.02 5 V10" stroke="#1b1b1b" stroke-width="1"/><path d="M115.7 2 V10" stroke="#1b1b1b" stroke-width="1"/><path d="M123.38 5 V10" stroke="#1b1b1b" stroke-width="1"/><path d="M131.06 5 V10" stroke="#1b1b1b" stroke-width="1"/><path d="M138.74 5 V10" stroke="#1b1b1b" stroke-width="1"/><path d="M146.42 5 V10" stroke="#1b1b1b" stroke-width="1"/><path d="M154.1 2 V10" stroke="#1b1b1b" stroke-width="1"/><path d="M161.78 5 V10" stroke="#1b1b1b" stroke-width="1"/><path d="M169.46 5 V10" stroke="#1b1b1b" stroke-width="1"/><path d="M177.14 5 V10" stroke="#1b1b1b" stroke-width="1"/><path d="M184.82 5 V10" stroke="#1b1b1b" stroke-width="1"/><path d="M192.5 2 V10" stroke="#1b1b1b" stroke-width="1"/><path d="M200.18 5 V10" stroke="#1b1b1b" stroke-width="1"/><path d="M207.86 5 V10" stroke="#1b1b1b" stroke-width="1"/><path d="M215.54 5 V10" stroke="#1b1b1b" stroke-width="1"/><path d="M223.22 5 V10" stroke="#1b1b1b" stroke-width="1"/><path d="M230.9 2 V10" stroke="#1b1b1b" stroke-width="1"/><path d="M238.58 5 V10" stroke="#1b1b1b" stroke-width="1"/><path d="M246.26 5 V10" stroke="#1b1b1b" stroke-width="1"/><path d="M253.94 5 V10" stroke="#1b1b1b" stroke-width="1"/><path d="M261.62 5 V10" stroke="#1b1b1b" stroke-width="1"/><path d="M269.3 2 V10" stroke="#1b1b1b" stroke-width="1"/><path d="M276.98 5 V10" stroke="#1b1b1b" stroke-width="1"/><path d="M284.66 5 V10" stroke="#1b1b1b" stroke-width="1"/><path d="M292.34 5 V10" stroke="#1b1b1b" stroke-width="1"/><path d="M300.02 5 V10" stroke="#1b1b1b" stroke-width="1"/><path d="M307.7 2 V10" stroke="#1b1b1b" stroke-width="1"/><path d="M315.38 5 V10" stroke="#1b1b1b" stroke-width="1"/><path d="M323.06 5 V10" stroke="#1b1b1b" stroke-width="1"/><path d="M330.74 5 V10" stroke="#1b1b1b" stroke-width="1"/><path d="M338.42 5 V10" stroke="#1b1b1b" stroke-width="1"/><path d="M346.1 2 V10" stroke="#1b1b1b" stroke-width="1"/><path d="M353.78 5 V10" stroke="#1b1b1b" stroke-width="1"/><path d="M361.46 5 V10" stroke="#1b1b1b" stroke-width="1"/><path d="M369.14 5 V10" stroke="#1b1b1b" stroke-width="1"/><path d="M376.82 5 V10" stroke="#1b1b1b" stroke-width="1"/><path d="M384.5 2 V10" stroke="#1b1b1b" stroke-width="1"/><rect x="0" y="10" width="385" height="1" fill="#080808"/><rect x="0" y="11" width="385" height="1" fill="#5e5e5e"/><rect x="0" y="12" width="385" height="1" fill="#080808"/></svg>
<div style="top:1419.3px;line-height:12px;height:12px;white-space:pre;color:#0b0b0b;font-size:10.9px;left:2122px;transform:scaleY(0.8);-webkit-text-stroke:0.3px #0b0b0b;">0</div>
<div style="top:1419.3px;line-height:12px;height:12px;white-space:pre;color:#0b0b0b;font-size:10.9px;left:2160px;transform:scaleY(0.8);-webkit-text-stroke:0.3px #0b0b0b;">0.5</div>
<div style="top:1419.3px;line-height:12px;height:12px;white-space:pre;color:#0b0b0b;font-size:10.9px;left:2200px;transform:scaleY(0.8);-webkit-text-stroke:0.3px #0b0b0b;">1</div>
<div style="top:1419.3px;line-height:12px;height:12px;white-space:pre;color:#0b0b0b;font-size:10.9px;left:2237px;transform:scaleY(0.8);-webkit-text-stroke:0.3px #0b0b0b;">1.5</div>
<div style="top:1419.3px;line-height:12px;height:12px;white-space:pre;color:#0b0b0b;font-size:10.9px;left:2277px;transform:scaleY(0.8);-webkit-text-stroke:0.3px #0b0b0b;">2</div>
<div style="top:1419.3px;line-height:12px;height:12px;white-space:pre;color:#0b0b0b;font-size:10.9px;left:2314px;transform:scaleY(0.8);-webkit-text-stroke:0.3px #0b0b0b;">2.5</div>
<div style="top:1419.3px;line-height:12px;height:12px;white-space:pre;color:#0b0b0b;font-size:10.9px;left:2354px;transform:scaleY(0.8);-webkit-text-stroke:0.3px #0b0b0b;">3</div>
<div style="top:1419.3px;line-height:12px;height:12px;white-space:pre;color:#0b0b0b;font-size:10.9px;left:2391px;transform:scaleY(0.8);-webkit-text-stroke:0.3px #0b0b0b;">3.5</div>
<div style="top:1419.3px;line-height:12px;height:12px;white-space:pre;color:#0b0b0b;font-size:10.9px;left:2431px;transform:scaleY(0.8);-webkit-text-stroke:0.3px #0b0b0b;">4</div>
<div style="top:1419.3px;line-height:12px;height:12px;white-space:pre;color:#0b0b0b;font-size:10.9px;left:2468px;transform:scaleY(0.8);-webkit-text-stroke:0.3px #0b0b0b;">4.5</div>
<div style="top:1419.3px;line-height:12px;height:12px;white-space:pre;color:#0b0b0b;font-size:10.9px;left:2501px;transform:scaleY(0.8);-webkit-text-stroke:0.3px #0b0b0b;">5</div>
<div style="left:2173px;top:1412.5px;width:5px;height:9px;background:#85723a;border:1px solid #26200c;"></div>
<div style="left:2509px;top:1409px;width:19px;height:19px;background:linear-gradient(#4c4c4c,#424242);border:1px solid #212121;border-radius:4px;box-shadow:inset 0 1px 0 #585858;"></div>
<svg style="left:2512px;top:1412px;" width="14" height="13" viewBox="0 0 14 13"><path d="M0.8 12 C3 4 5 3.4 6.6 6.4 C8.6 10 10.6 9 13.2 0.8" stroke="#1c1c1c" stroke-width="1.9" fill="none"/></svg>
<div style="top:1437px;line-height:16px;height:16px;white-space:pre;color:#7c7c7c;right:521.5px;text-align:right;">Vector Detail</div>
<div style="left:2045.5px;top:1435px;width:73px;height:20px;background:#3b3b3b;border:1px solid #222;border-radius:3px;box-shadow:inset 0 1px 0 #2c2c2c;"></div>
<div style="top:1437.5px;line-height:16px;height:16px;white-space:pre;color:#7c7c7c;left:2049.5px;">0.2</div>
<svg style="left:2122px;top:1433px;" width="385" height="13" viewBox="0 0 385 13"><path d="M0.5 2 V10" stroke="#1b1b1b" stroke-width="1"/><path d="M58.2978 5 V10" stroke="#1b1b1b" stroke-width="1"/><path d="M92.1073 5 V10" stroke="#1b1b1b" stroke-width="1"/><path d="M116.096 5 V10" stroke="#1b1b1b" stroke-width="1"/><path d="M134.702 5 V10" stroke="#1b1b1b" stroke-width="1"/><path d="M149.905 5 V10" stroke="#1b1b1b" stroke-width="1"/><path d="M162.759 5 V10" stroke="#1b1b1b" stroke-width="1"/><path d="M173.893 5 V10" stroke="#1b1b1b" stroke-width="1"/><path d="M183.715 5 V10" stroke="#1b1b1b" stroke-width="1"/><path d="M192.5 2 V10" stroke="#1b1b1b" stroke-width="1"/><path d="M250.298 5 V10" stroke="#1b1b1b" stroke-width="1"/><path d="M284.107 5 V10" stroke="#1b1b1b" stroke-width="1"/><path d="M308.096 5 V10" stroke="#1b1b1b" stroke-width="1"/><path d="M326.702 5 V10" stroke="#1b1b1b" stroke-width="1"/><path d="M341.905 5 V10" stroke="#1b1b1b" stroke-width="1"/><path d="M354.759 5 V10" stroke="#1b1b1b" stroke-width="1"/><path d="M365.893 5 V10" stroke="#1b1b1b" stroke-width="1"/><path d="M375.715 5 V10" stroke="#1b1b1b" stroke-width="1"/><path d="M384.5 2 V10" stroke="#1b1b1b" stroke-width="1"/><rect x="0" y="10" width="385" height="1" fill="#080808"/><rect x="0" y="11" width="385" height="1" fill="#5e5e5e"/><rect x="0" y="12" width="385" height="1" fill="#080808"/></svg>
<div style="top:1445.3px;line-height:12px;height:12px;white-space:pre;color:#0b0b0b;font-size:10.9px;left:2122px;transform:scaleY(0.8);-webkit-text-stroke:0.3px #0b0b0b;">0.01</div>
<div style="top:1445.3px;line-height:12px;height:12px;white-space:pre;color:#0b0b0b;font-size:10.9px;left:2179px;transform:scaleY(0.8);-webkit-text-stroke:0.3px #0b0b0b;">0.02</div>
<div style="top:1445.3px;line-height:12px;height:12px;white-space:pre;color:#0b0b0b;font-size:10.9px;left:2213px;transform:scaleY(0.8);-webkit-text-stroke:0.3px #0b0b0b;">0.03</div>
<div style="top:1445.3px;line-height:12px;height:12px;white-space:pre;color:#0b0b0b;font-size:10.9px;left:2237px;transform:scaleY(0.8);-webkit-text-stroke:0.3px #0b0b0b;">0.04</div>
<div style="top:1445.3px;line-height:12px;height:12px;white-space:pre;color:#0b0b0b;font-size:10.9px;left:2258px;transform:scaleY(0.8);-webkit-text-stroke:0.3px #0b0b0b;">0.05</div>
<div style="top:1445.3px;line-height:12px;height:12px;white-space:pre;color:#0b0b0b;font-size:10.9px;left:2284px;transform:scaleY(0.8);-webkit-text-stroke:0.3px #0b0b0b;">0.07</div>
<div style="top:1445.3px;line-height:12px;height:12px;white-space:pre;color:#0b0b0b;font-size:10.9px;left:2314px;transform:scaleY(0.8);-webkit-text-stroke:0.3px #0b0b0b;">0.1</div>
<div style="top:1445.3px;line-height:12px;height:12px;white-space:pre;color:#0b0b0b;font-size:10.9px;left:2371px;transform:scaleY(0.8);-webkit-text-stroke:0.3px #0b0b0b;">0.2</div>
<div style="top:1445.3px;line-height:12px;height:12px;white-space:pre;color:#0b0b0b;font-size:10.9px;left:2405px;transform:scaleY(0.8);-webkit-text-stroke:0.3px #0b0b0b;">0.3</div>
<div style="top:1445.3px;line-height:12px;height:12px;white-space:pre;color:#0b0b0b;font-size:10.9px;left:2429px;transform:scaleY(0.8);-webkit-text-stroke:0.3px #0b0b0b;">0.4</div>
<div style="top:1445.3px;line-height:12px;height:12px;white-space:pre;color:#0b0b0b;font-size:10.9px;left:2448px;transform:scaleY(0.8);-webkit-text-stroke:0.3px #0b0b0b;">0.5</div>
<div style="top:1445.3px;line-height:12px;height:12px;white-space:pre;color:#0b0b0b;font-size:10.9px;left:2476px;transform:scaleY(0.8);-webkit-text-stroke:0.3px #0b0b0b;">0.7</div>
<div style="top:1445.3px;line-height:12px;height:12px;white-space:pre;color:#0b0b0b;font-size:10.9px;left:2503px;transform:scaleY(0.8);-webkit-text-stroke:0.3px #0b0b0b;">1</div>
<div style="left:2369px;top:1438.5px;width:5px;height:9px;background:#6e6654;border:1px solid #26200c;"></div>
<div style="left:2509px;top:1435px;width:19px;height:19px;background:linear-gradient(#4c4c4c,#424242);border:1px solid #212121;border-radius:4px;box-shadow:inset 0 1px 0 #585858;"></div>
<div style="top:1459px;line-height:16px;height:16px;white-space:pre;color:#7c7c7c;right:521.5px;text-align:right;">Smoothness</div>
<div style="left:2045.5px;top:1457px;width:73px;height:20px;background:#3b3b3b;border:1px solid #222;border-radius:3px;box-shadow:inset 0 1px 0 #2c2c2c;"></div>
<div style="top:1459.5px;line-height:16px;height:16px;white-space:pre;color:#7c7c7c;left:2049.5px;">0.5</div>
<svg style="left:2122px;top:1455px;" width="385" height="13" viewBox="0 0 385 13"><path d="M0.5 2 V10" stroke="#1b1b1b" stroke-width="1"/><path d="M58.2978 5 V10" stroke="#1b1b1b" stroke-width="1"/><path d="M92.1073 5 V10" stroke="#1b1b1b" stroke-width="1"/><path d="M116.096 5 V10" stroke="#1b1b1b" stroke-width="1"/><path d="M134.702 5 V10" stroke="#1b1b1b" stroke-width="1"/><path d="M149.905 5 V10" stroke="#1b1b1b" stroke-width="1"/><path d="M162.759 5 V10" stroke="#1b1b1b" stroke-width="1"/><path d="M173.893 5 V10" stroke="#1b1b1b" stroke-width="1"/><path d="M183.715 5 V10" stroke="#1b1b1b" stroke-width="1"/><path d="M192.5 2 V10" stroke="#1b1b1b" stroke-width="1"/><path d="M250.298 5 V10" stroke="#1b1b1b" stroke-width="1"/><path d="M284.107 5 V10" stroke="#1b1b1b" stroke-width="1"/><path d="M308.096 5 V10" stroke="#1b1b1b" stroke-width="1"/><path d="M326.702 5 V10" stroke="#1b1b1b" stroke-width="1"/><path d="M341.905 5 V10" stroke="#1b1b1b" stroke-width="1"/><path d="M354.759 5 V10" stroke="#1b1b1b" stroke-width="1"/><path d="M365.893 5 V10" stroke="#1b1b1b" stroke-width="1"/><path d="M375.715 5 V10" stroke="#1b1b1b" stroke-width="1"/><path d="M384.5 2 V10" stroke="#1b1b1b" stroke-width="1"/><rect x="0" y="10" width="385" height="1" fill="#080808"/><rect x="0" y="11" width="385" height="1" fill="#5e5e5e"/><rect x="0" y="12" width="385" height="1" fill="#080808"/></svg>
<div style="top:1467.3px;line-height:12px;height:12px;white-space:pre;color:#0b0b0b;font-size:10.9px;left:2122px;transform:scaleY(0.8);-webkit-text-stroke:0.3px #0b0b0b;">0.01</div>
<div style="top:1467.3px;line-height:12px;height:12px;white-space:pre;color:#0b0b0b;font-size:10.9px;left:2179px;transform:scaleY(0.8);-webkit-text-stroke:0.3px #0b0b0b;">0.02</div>
<div style="top:1467.3px;line-height:12px;height:12px;white-space:pre;color:#0b0b0b;font-size:10.9px;left:2213px;transform:scaleY(0.8);-webkit-text-stroke:0.3px #0b0b0b;">0.03</div>
<div style="top:1467.3px;line-height:12px;height:12px;white-space:pre;color:#0b0b0b;font-size:10.9px;left:2237px;transform:scaleY(0.8);-webkit-text-stroke:0.3px #0b0b0b;">0.04</div>
<div style="top:1467.3px;line-height:12px;height:12px;white-space:pre;color:#0b0b0b;font-size:10.9px;left:2258px;transform:scaleY(0.8);-webkit-text-stroke:0.3px #0b0b0b;">0.05</div>
<div style="top:1467.3px;line-height:12px;height:12px;white-space:pre;color:#0b0b0b;font-size:10.9px;left:2284px;transform:scaleY(0.8);-webkit-text-stroke:0.3px #0b0b0b;">0.07</div>
<div style="top:1467.3px;line-height:12px;height:12px;white-space:pre;color:#0b0b0b;font-size:10.9px;left:2314px;transform:scaleY(0.8);-webkit-text-stroke:0.3px #0b0b0b;">0.1</div>
<div style="top:1467.3px;line-height:12px;height:12px;white-space:pre;color:#0b0b0b;font-size:10.9px;left:2371px;transform:scaleY(0.8);-webkit-text-stroke:0.3px #0b0b0b;">0.2</div>
<div style="top:1467.3px;line-height:12px;height:12px;white-space:pre;color:#0b0b0b;font-size:10.9px;left:2405px;transform:scaleY(0.8);-webkit-text-stroke:0.3px #0b0b0b;">0.3</div>
<div style="top:1467.3px;line-height:12px;height:12px;white-space:pre;color:#0b0b0b;font-size:10.9px;left:2429px;transform:scaleY(0.8);-webkit-text-stroke:0.3px #0b0b0b;">0.4</div>
<div style="top:1467.3px;line-height:12px;height:12px;white-space:pre;color:#0b0b0b;font-size:10.9px;left:2448px;transform:scaleY(0.8);-webkit-text-stroke:0.3px #0b0b0b;">0.5</div>
<div style="top:1467.3px;line-height:12px;height:12px;white-space:pre;color:#0b0b0b;font-size:10.9px;left:2476px;transform:scaleY(0.8);-webkit-text-stroke:0.3px #0b0b0b;">0.7</div>
<div style="top:1467.3px;line-height:12px;height:12px;white-space:pre;color:#0b0b0b;font-size:10.9px;left:2503px;transform:scaleY(0.8);-webkit-text-stroke:0.3px #0b0b0b;">1</div>
<div style="left:2446px;top:1460.5px;width:5px;height:9px;background:#6e6654;border:1px solid #26200c;"></div>
<div style="left:2509px;top:1457px;width:19px;height:19px;background:linear-gradient(#4c4c4c,#424242);border:1px solid #212121;border-radius:4px;box-shadow:inset 0 1px 0 #585858;"></div>
<div style="top:1481px;line-height:16px;height:16px;white-space:pre;color:#7c7c7c;right:521.5px;text-align:right;">Resampling</div>
<div style="left:2045.5px;top:1479px;width:80px;height:18px;background:linear-gradient(#4a4a4a,#404040);border:1px solid #222;border-radius:4px;"></div>
<div style="top:1480.5px;line-height:16px;height:16px;white-space:pre;color:#7c7c7c;left:2050px;">Bilinear</div>
<svg style="left:2114px;top:1484.5px;" width="6" height="5" viewBox="0 0 6 5"><path d="M0 0 H6 L3.0 5 Z" fill="#7a7a7a"/></svg>
<svg style="left:1965px;top:1504px;" width="7" height="9" viewBox="0 0 7 9"><path d="M0 0 V9 L7 4.5 Z" fill="#050505"/></svg>
<div style="top:1502px;line-height:16px;height:16px;white-space:pre;left:1985px;">Shutter</div>
<svg style="left:1965px;top:1523px;" width="7" height="9" viewBox="0 0 7 9"><path d="M0 0 V9 L7 4.5 Z" fill="#050505"/></svg>
<div style="top:1522px;line-height:16px;height:16px;white-space:pre;left:1985px;">Advanced</div>
</div>
<div style="left:0px;top:1365px;width:2560px;height:25px;background:#323232;"></div>
<div style="top:1368.5px;line-height:22px;height:22px;white-space:pre;color:#c8c8c8;font-size:17.88px;right:33px;text-align:right;transform:scaleY(0.9);">Memory: 1.7 GB (10.5%) CPU: 0.0% Disk: 0.0 MB/s Network: 0.0 MB/s</div>
<div style="left:2534px;top:1373px;width:25px;height:11px;background:#2fa62f;border-radius:2px;"></div>
<div style="top:1373.5px;line-height:10px;height:10px;white-space:pre;color:#126012;font-size:8px;left:2534.5px;width:24px;text-align:center;">OK</div>
<div style="left:0px;top:1390px;width:2560px;height:50px;background:#04060a;"></div>
<div style="left:370px;top:1390px;width:56px;height:50px;background:#33363b;"></div>
<div style="left:426px;top:1390px;width:5px;height:50px;background:#2a2c31;"></div>
<svg style="left:20px;top:1405px;" width="20" height="20" viewBox="0 0 20 20"><path d="M0 2.9 L8.2 1.7 V9.5 H0 Z M9.2 1.5 L20 0 V9.5 H9.2 Z M0 10.5 H8.2 V18.3 L0 17.1 Z M9.2 10.5 H20 V20 L9.2 18.5 Z" fill="#fff"/></svg>
<svg style="left:78px;top:1404px;" width="24" height="24" viewBox="0 0 24 24"><circle cx="15.2" cy="8.2" r="6.6" fill="none" stroke="#fff" stroke-width="1.5"/><path d="M10.6 13 L2.4 21" stroke="#fff" stroke-width="1.6"/></svg>
<svg style="left:138px;top:1405px;" width="25" height="19" viewBox="0 0 25 19"><rect x="5" y="1" width="15" height="17" fill="none" stroke="#fff" stroke-width="1.4"/><path d="M3 3.5 H0.7 V15.5 H3 M22 3.5 H24.3 V15.5 H22" stroke="#fff" stroke-width="1.4" fill="none"/></svg>
<svg style="left:199px;top:1402px;" width="30" height="25" viewBox="0 0 30 25"><path d="M1 2.5 Q1 1 2.5 1 H12 L14.5 4 H27 Q28.5 4 28.5 5.5 V22 Q28.5 23.5 27 23.5 H2.5 Q1 23.5 1 22 Z" fill="#f6d873"/><path d="M1 6 H28.5 V22 Q28.5 23.5 27 23.5 H2.5 Q1 23.5 1 22 Z" fill="#fbe597"/><rect x="3.5" y="2.5" width="6" height="1.6" fill="#fff"/><rect x="3.5" y="2.5" width="2" height="1.6" fill="#3a96dd"/><path d="M6.5 23.5 V14 H23.5 V23.5 H20 V17.5 H10 V23.5 Z" fill="#3fa4e6"/><rect x="10" y="17.5" width="10" height="1.5" fill="#2a7fc0"/></svg>
<svg style="left:263px;top:1402px;" width="26" height="27" viewBox="0 0 26 27"><path d="M0.8 13.5 C1.8 5 7.5 0.8 13.6 0.8 C21 0.8 25.4 6.2 25.2 14.2 V16.2 H8.8 C9 20.4 12.4 22.4 16.2 22.4 C19.4 22.4 22 21.4 24 20.2 V25 C21.6 26.2 18.8 27 15.4 27 C7.4 27 3.2 21.8 3.2 15.6 C3.2 11.6 5 8.6 8 6.8 C4.4 7.4 2 10 0.8 13.5 Z M8.9 11.6 H18.4 C18.4 8.2 16.4 6.2 13.6 6.2 C11 6.2 9.3 8.4 8.9 11.6 Z" fill="#1a7fd8" fill-rule="evenodd"/></svg>
<svg style="left:325px;top:1400px;" width="26.0" height="29.0" viewBox="0 0 26 29"><path d="M11 1 H15 L22.5 22 H3.5 Z" fill="#f48b00"/><path d="M9.9 5 H16.1 L17.6 10 H8.4 Z M6.9 14.5 H19.1 L20.6 19 H5.4 Z" fill="#f0f0f0"/><path d="M3 21 H23 L25.5 28 H0.5 Z" fill="#f48b00"/><path d="M1.5 25.5 H24.5 L25.5 28 H0.5 Z" fill="#d06a00"/></svg>
<svg style="left:385px;top:1400px;" width="30.4" height="30.4" viewBox="0 0 30 30"><circle cx="15" cy="15" r="13.6" fill="#262626" stroke="#f7b733" stroke-width="1.6"/>
<path d="M3 12 C4 8.5 6.4 5.8 9.6 4.7 C11 4.8 12.5 6.8 16 7.7 L17.8 7.7 L18.2 4.4 C22 4.8 25 7.4 26 11.2 L22.5 12.5 L21.9 15 C22.5 17.5 20 19 17.6 20.8 C17 17 15 13.5 13.75 12 Z" fill="#fbbe38"/>
<ellipse cx="17.4" cy="11.4" rx="1.7" ry="1.1" fill="#262626" transform="rotate(40 17.4 11.4)"/>
<circle cx="24" cy="24" r="5" fill="#262626" stroke="#f7b733" stroke-width="1.5"/>
<path d="M21.8 21.4 L26.2 26.6 M26.2 21.4 L21.8 26.6" stroke="#f7b733" stroke-width="1.3"/></svg>
<div style="left:189px;top:1437px;width:40px;height:3px;background:#76b9ed;"></div>
<div style="left:229px;top:1437px;width:11px;height:3px;background:#4d7ea6;"></div>
<div style="left:251px;top:1437px;width:40px;height:3px;background:#76b9ed;"></div>
<div style="left:291px;top:1437px;width:11px;height:3px;background:#4d7ea6;"></div>
<div style="left:313px;top:1437px;width:40px;height:3px;background:#76b9ed;"></div>
<div style="left:353px;top:1437px;width:11px;height:3px;background:#4d7ea6;"></div>
<div style="left:370px;top:1437px;width:56px;height:3px;background:#76b9ed;"></div>
<div style="left:426px;top:1437px;width:5px;height:3px;background:#5d93bd;"></div>
<svg style="left:1988px;top:1404px;" width="20" height="22" viewBox="0 0 20 22"><circle cx="13" cy="5" r="3.4" fill="none" stroke="#fff" stroke-width="1.5"/><path d="M7.5 16 Q8 9.5 13 9.5 Q18 9.5 18.5 14" stroke="#fff" stroke-width="1.5" fill="none"/><circle cx="6" cy="11.5" r="2.8" fill="#04060a" stroke="#fff" stroke-width="1.5"/><path d="M1 21.5 Q1.5 15.5 6 15.5 Q10.5 15.5 11 21.5" stroke="#fff" stroke-width="1.5" fill="none"/></svg>
<svg style="left:2033px;top:1405px;" width="18.2" height="20.299999999999997" viewBox="0 0 26 29"><path d="M11 1 H15 L22.5 22 H3.5 Z" fill="#f48b00"/><path d="M9.9 5 H16.1 L17.6 10 H8.4 Z M6.9 14.5 H19.1 L20.6 19 H5.4 Z" fill="#f0f0f0"/><path d="M3 21 H23 L25.5 28 H0.5 Z" fill="#f48b00"/><path d="M1.5 25.5 H24.5 L25.5 28 H0.5 Z" fill="#d06a00"/></svg>
<svg style="left:2065px;top:1405px;" width="17" height="22" viewBox="0 0 17 22"><rect x="3" y="0.7" width="7" height="5" fill="none" stroke="#fff" stroke-width="1.2"/><rect x="1" y="5.7" width="11" height="14" rx="1.5" fill="none" stroke="#fff" stroke-width="1.2"/><path d="M5 3 H6 M7.5 3 H8.5" stroke="#fff" stroke-width="1"/><path d="M9.5 18 L12 21 L16.5 15" stroke="#ddd" stroke-width="1.1" fill="none"/></svg>
<svg style="left:2091px;top:1407px;" width="22" height="14" viewBox="0 0 22 14"><path d="M5 13.5 Q0.5 13.5 0.5 9.8 Q0.5 6.4 4.2 6.2 Q5 1.6 9.4 1.6 Q12.2 1.6 13.6 4 Q15 3 16.6 3.6 Q19 4.6 18.8 7.4 Q21.5 8 21.5 10.6 Q21.5 13.5 18.4 13.5 Z" fill="#7c7c7c"/><path d="M6 13.5 Q9 7 17 7.4 Q21.5 8 21.5 10.6 Q21.5 13.5 18.4 13.5 Z" fill="#9a9a9a"/></svg>
<svg style="left:2122px;top:1405px;" width="20" height="20" viewBox="0 0 20 20"><circle cx="10" cy="10" r="9.8" fill="#2e9fe0"/><path d="M6 10.5 L13.5 6.5 M6 10.5 L13.5 14" stroke="#fff" stroke-width="1.3"/><circle cx="5.6" cy="10.5" r="2.3" fill="#fff"/><circle cx="14" cy="6.2" r="2.1" fill="#fff"/><circle cx="14" cy="14.2" r="2.1" fill="#fff"/></svg>
<svg style="left:2153px;top:1406px;" width="18" height="17" viewBox="0 0 18 17"><path d="M0.5 14 L8.5 0.5 H12 L4 14 Z" fill="#3f9e3a"/><path d="M9.5 4 L12 0.5 L17.5 16.5 H13.5 Z" fill="#1c78c8"/><path d="M0.5 14 L5 12 L9 16.5 H3 Z" fill="#1a5fa0"/></svg>
<div style="left:2182px;top:1405px;width:20px;height:20px;background:#fff;border:1px solid #2a6ab8;"></div>
<div style="left:2184px;top:1407px;width:16px;height:16px;background:#e8f0fa;"></div>
<div style="top:1406.5px;line-height:18px;height:18px;white-space:pre;color:#2a6ab8;font-size:15px;left:2182px;width:20px;text-align:center;font-family:'Liberation Sans',sans-serif;font-weight:bold;">A</div>
<svg style="left:2211px;top:1404px;" width="22" height="22" viewBox="0 0 22 22"><path d="M3 9 L9 2 L19 18 L8 17 Z" fill="#8a8a8a"/><ellipse cx="14" cy="10" rx="4" ry="9" fill="#bdbdbd" transform="rotate(-32 14 10)"/><ellipse cx="14.5" cy="10" rx="2.4" ry="6.4" fill="#5a5a5a" transform="rotate(-32 14.5 10)"/><circle cx="5" cy="17.5" r="3.4" fill="#9a9a9a"/><circle cx="5" cy="17.5" r="1.5" fill="#444"/></svg>
<svg style="left:2243px;top:1405px;" width="21" height="21" viewBox="0 0 21 21"><path d="M8.5 0.5 L16.5 3 V9 Q16.5 15 8.5 19 Q0.5 15 0.5 9 V3 Z" fill="#fff"/><path d="M8.5 0.5 V19 M0.5 8.5 H16.5" stroke="#04060a" stroke-width="1.2"/><circle cx="15" cy="15.5" r="5" fill="#1f9d3a"/><path d="M12.4 15.6 L14.3 17.5 L17.6 13.6" stroke="#fff" stroke-width="1.3" fill="none"/></svg>
<div style="left:2272px;top:1405px;width:20px;height:20px;background:#3c3c3c;"></div>
<svg style="left:2274px;top:1409px;" width="16" height="12" viewBox="0 0 16 12"><path d="M0.5 6 Q4 0.8 9 2 V0.5 H15.5 V11.5 H9 V10 Q4 11.2 0.5 6 Z" fill="#76b900"/><path d="M3 6 Q5.5 3 9 3.6 V8.4 Q5.5 9 3 6 Z" fill="#3c3c3c"/><path d="M5.5 6 Q7 4.8 9 5 V7 Q7 7.2 5.5 6 Z" fill="#76b900"/></svg>
<svg style="left:2304px;top:1404px;" width="15" height="22" viewBox="0 0 15 22"><ellipse cx="7.5" cy="11" rx="7" ry="10.6" fill="#0a82e8"/><path d="M3.6 7 L11 14.4 L7.5 17.6 V4.4 L11 7.6 L3.6 15" stroke="#fff" stroke-width="1.3" fill="none"/></svg>
<svg style="left:2332px;top:1405px;" width="16" height="19" viewBox="0 0 16 19"><path d="M2 3 L15 0.5 V11.5 L2 14.5 Z" fill="#7ab51d"/><path d="M5 5.5 L12 4 V9.5 L5 11 Z" fill="#2f6a12"/><path d="M2 14.5 L5 13.8 L2 18.5 Z" fill="#7ab51d"/></svg>
<svg style="left:2361px;top:1406px;" width="22" height="19" viewBox="0 0 22 19"><rect x="3.7" y="0.7" width="17.6" height="12" fill="none" stroke="#fff" stroke-width="1.3"/><path d="M12.5 13 V17.3 M8 17.5 H17" stroke="#fff" stroke-width="1.3"/><rect x="0.7" y="0.7" width="3.6" height="4.6" fill="#04060a" stroke="#fff" stroke-width="1"/><path d="M2.5 5.5 V15 H5" stroke="#fff" stroke-width="1" fill="none"/></svg>
<svg style="left:2392px;top:1405px;" width="22" height="20" viewBox="0 0 22 20"><path d="M0.7 7 H4 L8.5 2.5 V17.5 L4 13 H0.7 Z" fill="none" stroke="#fff" stroke-width="1.3"/><path d="M11.5 7.5 Q13.2 10 11.5 12.5 M14 5 Q17.2 10 14 15 M16.8 2.6 Q21.5 10 16.8 17.4" stroke="#fff" stroke-width="1.2" fill="none"/></svg>
<div style="top:1405.5px;line-height:20px;height:20px;white-space:pre;color:#fff;font-size:14.5px;left:2426px;font-family:'Liberation Sans',sans-serif;letter-spacing:-1.3px;">ENG</div>
<div style="top:1393.5px;line-height:20px;height:20px;white-space:pre;color:#fff;font-size:15px;left:2448px;width:120px;text-align:center;font-family:'Liberation Sans',sans-serif;letter-spacing:-0.8px;">19:45</div>
<div style="top:1417px;line-height:20px;height:20px;white-space:pre;color:#fff;font-size:15px;left:2448.5px;width:120px;text-align:center;font-family:'Liberation Sans',sans-serif;">13/03/2019</div>
<div style="left:2554px;top:1390px;width:1px;height:50px;background:#6a6a6a;"></div>
</body></html>
